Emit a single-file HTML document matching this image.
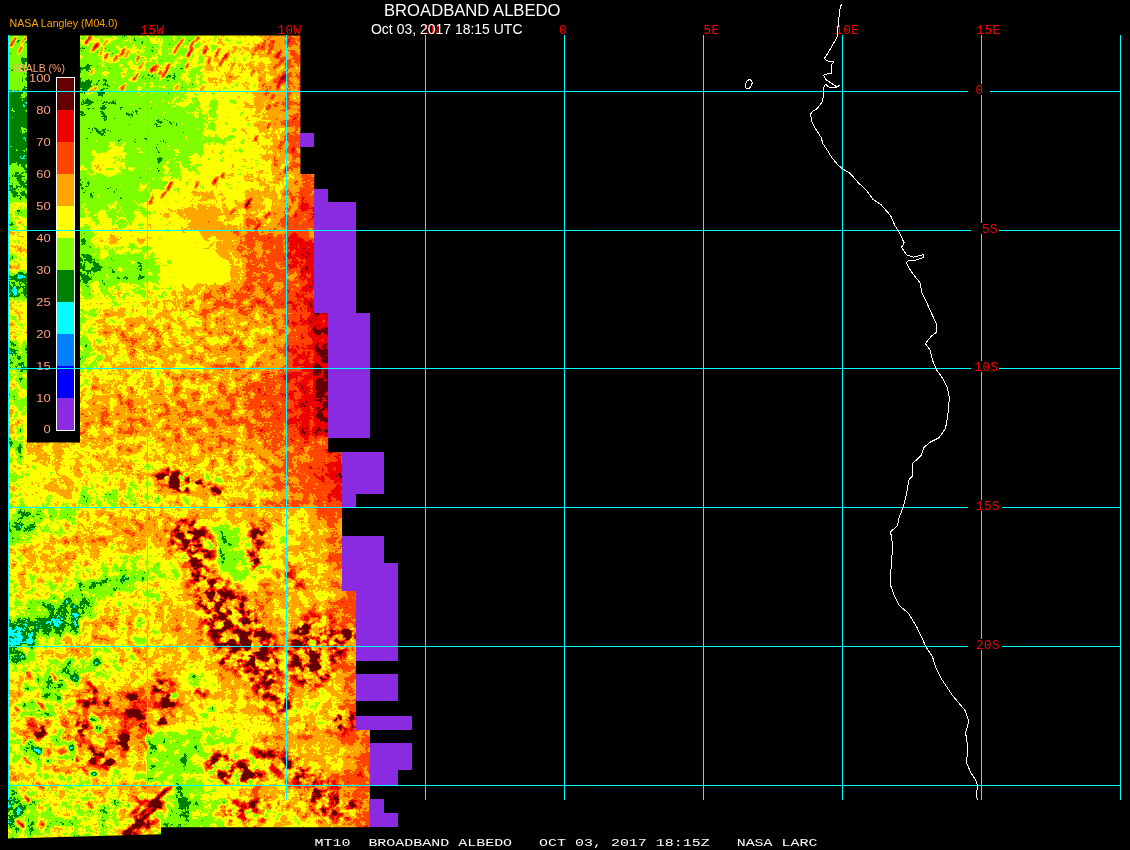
<!DOCTYPE html>
<html><head><meta charset="utf-8"><title>BROADBAND ALBEDO</title>
<style>
html,body{margin:0;padding:0;background:#000;}
body{width:1130px;height:850px;overflow:hidden;position:relative;font-family:"Liberation Sans",sans-serif;}
svg{position:absolute;left:0;top:0;display:block}
.t{position:absolute;white-space:pre;color:#fff;line-height:1;}
</style></head><body>
<svg width="1130" height="850" viewBox="0 0 1130 850">
<defs>
<clipPath id="fc"><polygon points="8.0,35.4 300.4,35.4 300.4,174.0 314.3,174.0 314.3,313.0 328.2,313.0 328.2,452.2 342.1,452.2 342.1,591.0 356.0,591.0 356.0,729.8 369.9,729.8 369.9,827.3 161.0,827.3 161.0,834.3 8.0,838.6"/></clipPath>
<filter id="cb" x="-50" y="-20" width="520" height="900" filterUnits="userSpaceOnUse" color-interpolation-filters="sRGB"><feGaussianBlur stdDeviation="1.6 3.2"/></filter>
<filter id="vb" x="-50" y="-20" width="520" height="900" filterUnits="userSpaceOnUse" color-interpolation-filters="sRGB"><feGaussianBlur stdDeviation="6"/></filter>
<filter id="fb2" x="-50" y="-20" width="520" height="900" filterUnits="userSpaceOnUse" color-interpolation-filters="sRGB"><feGaussianBlur stdDeviation="2.2"/></filter>
<filter id="fb" x="-50" y="-20" width="520" height="900" filterUnits="userSpaceOnUse" color-interpolation-filters="sRGB"><feGaussianBlur stdDeviation="0.8"/></filter>
<filter id="post" x="0" y="0" width="440" height="850" filterUnits="userSpaceOnUse" color-interpolation-filters="sRGB">
<feColorMatrix in="SourceGraphic" type="matrix" values="1 0 0 0 0  1 0 0 0 0  1 0 0 0 0  0 0 0 0 1" result="base"/>
<feColorMatrix in="SourceGraphic" type="matrix" values="0 1 0 0 0  0 1 0 0 0  0 1 0 0 0  0 0 0 0 1" result="amp"/>
<feColorMatrix in="SourceGraphic" type="matrix" values="0 0 1 0 0  0 0 1 0 0  0 0 1 0 0  0 0 0 0 1" result="vm"/>
<feTurbulence type="fractalNoise" baseFrequency="0.5" numOctaves="2" seed="7" result="n"/>
<feColorMatrix in="n" type="matrix" values="1 0 0 0 0  1 0 0 0 0  1 0 0 0 0  0 0 0 0 1" result="ng"/>
<feTurbulence type="fractalNoise" baseFrequency="0.11" numOctaves="2" seed="23" result="m"/>
<feColorMatrix in="m" type="matrix" values="1 0 0 0 0  1 0 0 0 0  1 0 0 0 0  0 0 0 0 1" result="mg"/>
<feComposite in="ng" in2="mg" operator="arithmetic" k1="0" k2="0.35" k3="0.65" k4="0" result="nz"/>
<feTurbulence type="fractalNoise" baseFrequency="0.1" numOctaves="3" seed="11" result="tv"/>
<feColorMatrix in="tv" type="matrix" values="3.6 0 0 0 -1.5  3.6 0 0 0 -1.5  3.6 0 0 0 -1.5  0 0 0 0 1" result="vn"/>
<feComposite in="base" in2="amp" operator="arithmetic" k1="0" k2="1" k3="-0.215" k4="0" result="t1"/>
<feComposite in="amp" in2="nz" operator="arithmetic" k1="0.43" k2="0" k3="0" k4="0" result="t2"/>
<feComposite in="t1" in2="t2" operator="arithmetic" k1="0" k2="1" k3="1" k4="0" result="s1"/>
<feComposite in="vm" in2="vn" operator="arithmetic" k1="0.5" k2="0" k3="0" k4="0" result="t3"/>
<feComposite in="s1" in2="t3" operator="arithmetic" k1="0" k2="1" k3="1" k4="0" result="s"/>
<feComponentTransfer in="s" result="sr">
<feFuncR type="linear" slope="1.6666666666666667" intercept="-0.25"/>
<feFuncG type="linear" slope="1.6666666666666667" intercept="-0.25"/>
<feFuncB type="linear" slope="1.6666666666666667" intercept="-0.25"/>
</feComponentTransfer>
<feComponentTransfer in="sr">
<feFuncR type="discrete" tableValues="0.5412 0.0000 0.0000 0.0000 0.0000 0.4980 1.0000 1.0000 1.0000 0.9333 0.3922"/>
<feFuncG type="discrete" tableValues="0.1686 0.0000 0.5020 1.0000 0.5020 1.0000 1.0000 0.6471 0.2706 0.0000 0.0000"/>
<feFuncB type="discrete" tableValues="0.8863 1.0000 1.0000 1.0000 0.0000 0.0000 0.0000 0.0000 0.0000 0.0000 0.0000"/>
<feFuncA type="discrete" tableValues="1 1"/>
</feComponentTransfer>
</filter>
</defs>
<g clip-path="url(#fc)"><g filter="url(#post)">
<rect x="-60" y="-30" width="560" height="920" fill="#998000"/>
<g filter="url(#cb)" shape-rendering="crispEdges">
<rect x="8.2" y="35.7" width="14.5" height="14.5" fill="#704600"/><rect x="8.2" y="49.6" width="14.5" height="14.5" fill="#704600"/><rect x="8.2" y="63.4" width="14.5" height="14.5" fill="#704600"/><rect x="8.2" y="77.3" width="14.5" height="14.5" fill="#704600"/><rect x="8.2" y="91.2" width="14.5" height="14.5" fill="#664600"/><rect x="8.2" y="105.1" width="14.5" height="14.5" fill="#664600"/><rect x="8.2" y="119.0" width="14.5" height="14.5" fill="#664600"/><rect x="8.2" y="132.8" width="14.5" height="14.5" fill="#664600"/><rect x="8.2" y="146.7" width="14.5" height="14.5" fill="#664600"/><rect x="8.2" y="160.6" width="14.5" height="14.5" fill="#6c4600"/><rect x="8.2" y="174.5" width="14.5" height="14.5" fill="#6c4600"/><rect x="8.2" y="188.4" width="14.5" height="14.5" fill="#6d4600"/><rect x="8.2" y="202.2" width="14.5" height="14.5" fill="#7ad900"/><rect x="8.2" y="216.1" width="14.5" height="14.5" fill="#7bd900"/><rect x="8.2" y="230.0" width="14.5" height="14.5" fill="#85d900"/><rect x="8.2" y="243.9" width="14.5" height="14.5" fill="#85d900"/><rect x="8.2" y="257.8" width="14.5" height="14.5" fill="#83d900"/><rect x="8.2" y="271.6" width="14.5" height="14.5" fill="#68d900"/><rect x="8.2" y="285.5" width="14.5" height="14.5" fill="#65d900"/><rect x="8.2" y="299.4" width="14.5" height="14.5" fill="#81d900"/><rect x="8.2" y="313.3" width="14.5" height="14.5" fill="#83d900"/><rect x="8.2" y="327.2" width="14.5" height="14.5" fill="#83d900"/><rect x="8.2" y="341.0" width="14.5" height="14.5" fill="#70d900"/><rect x="8.2" y="354.9" width="14.5" height="14.5" fill="#70d900"/><rect x="8.2" y="368.8" width="14.5" height="14.5" fill="#77d900"/><rect x="8.2" y="382.7" width="14.5" height="14.5" fill="#77d900"/><rect x="8.2" y="396.6" width="14.5" height="14.5" fill="#77d900"/><rect x="8.2" y="410.4" width="14.5" height="14.5" fill="#83d900"/><rect x="8.2" y="424.3" width="14.5" height="14.5" fill="#83d900"/><rect x="77.7" y="35.7" width="14.5" height="14.5" fill="#798c00"/><rect x="91.6" y="35.7" width="14.5" height="14.5" fill="#758c00"/><rect x="105.5" y="35.7" width="14.5" height="14.5" fill="#768c00"/><rect x="119.4" y="35.7" width="14.5" height="14.5" fill="#768c00"/><rect x="133.3" y="35.7" width="14.5" height="14.5" fill="#788c00"/><rect x="147.2" y="35.7" width="14.5" height="14.5" fill="#788c00"/><rect x="161.1" y="35.7" width="14.5" height="14.5" fill="#768c00"/><rect x="175.0" y="35.7" width="14.5" height="14.5" fill="#768c00"/><rect x="188.9" y="35.7" width="14.5" height="14.5" fill="#788c00"/><rect x="202.8" y="35.7" width="14.5" height="14.5" fill="#818c00"/><rect x="216.7" y="35.7" width="14.5" height="14.5" fill="#828c00"/><rect x="230.6" y="35.7" width="14.5" height="14.5" fill="#838c00"/><rect x="244.5" y="35.7" width="14.5" height="14.5" fill="#868c00"/><rect x="258.4" y="35.7" width="14.5" height="14.5" fill="#8c8c00"/><rect x="272.3" y="35.7" width="14.5" height="14.5" fill="#8f8c00"/><rect x="286.2" y="35.7" width="14.5" height="14.5" fill="#968c00"/><rect x="77.7" y="49.6" width="14.5" height="14.5" fill="#738c00"/><rect x="91.6" y="49.6" width="14.5" height="14.5" fill="#758c00"/><rect x="105.5" y="49.6" width="14.5" height="14.5" fill="#788c00"/><rect x="119.4" y="49.6" width="14.5" height="14.5" fill="#788c00"/><rect x="133.3" y="49.6" width="14.5" height="14.5" fill="#788c00"/><rect x="147.2" y="49.6" width="14.5" height="14.5" fill="#758c00"/><rect x="161.1" y="49.6" width="14.5" height="14.5" fill="#768c00"/><rect x="175.0" y="49.6" width="14.5" height="14.5" fill="#768c00"/><rect x="188.9" y="49.6" width="14.5" height="14.5" fill="#788c00"/><rect x="202.8" y="49.6" width="14.5" height="14.5" fill="#828c00"/><rect x="216.7" y="49.6" width="14.5" height="14.5" fill="#858c00"/><rect x="230.6" y="49.6" width="14.5" height="14.5" fill="#838c00"/><rect x="244.5" y="49.6" width="14.5" height="14.5" fill="#868c00"/><rect x="258.4" y="49.6" width="14.5" height="14.5" fill="#8c8c00"/><rect x="272.3" y="49.6" width="14.5" height="14.5" fill="#8f8c00"/><rect x="286.2" y="49.6" width="14.5" height="14.5" fill="#968c00"/><rect x="77.7" y="63.4" width="14.5" height="14.5" fill="#718c00"/><rect x="91.6" y="63.4" width="14.5" height="14.5" fill="#758c00"/><rect x="105.5" y="63.4" width="14.5" height="14.5" fill="#788c00"/><rect x="119.4" y="63.4" width="14.5" height="14.5" fill="#798c00"/><rect x="133.3" y="63.4" width="14.5" height="14.5" fill="#788c00"/><rect x="147.2" y="63.4" width="14.5" height="14.5" fill="#758c00"/><rect x="161.1" y="63.4" width="14.5" height="14.5" fill="#758c00"/><rect x="175.0" y="63.4" width="14.5" height="14.5" fill="#758c00"/><rect x="188.9" y="63.4" width="14.5" height="14.5" fill="#798c00"/><rect x="202.8" y="63.4" width="14.5" height="14.5" fill="#868c00"/><rect x="216.7" y="63.4" width="14.5" height="14.5" fill="#868c00"/><rect x="230.6" y="63.4" width="14.5" height="14.5" fill="#828c00"/><rect x="244.5" y="63.4" width="14.5" height="14.5" fill="#858c00"/><rect x="258.4" y="63.4" width="14.5" height="14.5" fill="#8a8c00"/><rect x="272.3" y="63.4" width="14.5" height="14.5" fill="#8f8c00"/><rect x="286.2" y="63.4" width="14.5" height="14.5" fill="#968c00"/><rect x="77.7" y="77.3" width="14.5" height="14.5" fill="#6a8c00"/><rect x="91.6" y="77.3" width="14.5" height="14.5" fill="#6b8c00"/><rect x="105.5" y="77.3" width="14.5" height="14.5" fill="#718c00"/><rect x="119.4" y="77.3" width="14.5" height="14.5" fill="#758c00"/><rect x="133.3" y="77.3" width="14.5" height="14.5" fill="#768c00"/><rect x="147.2" y="77.3" width="14.5" height="14.5" fill="#768c00"/><rect x="161.1" y="77.3" width="14.5" height="14.5" fill="#738c00"/><rect x="175.0" y="77.3" width="14.5" height="14.5" fill="#768c00"/><rect x="188.9" y="77.3" width="14.5" height="14.5" fill="#7a8c00"/><rect x="202.8" y="77.3" width="14.5" height="14.5" fill="#888c00"/><rect x="216.7" y="77.3" width="14.5" height="14.5" fill="#858c00"/><rect x="230.6" y="77.3" width="14.5" height="14.5" fill="#818c00"/><rect x="244.5" y="77.3" width="14.5" height="14.5" fill="#838c00"/><rect x="258.4" y="77.3" width="14.5" height="14.5" fill="#918c00"/><rect x="272.3" y="77.3" width="14.5" height="14.5" fill="#8f8c00"/><rect x="286.2" y="77.3" width="14.5" height="14.5" fill="#978c00"/><rect x="77.7" y="91.2" width="14.5" height="14.5" fill="#6e6000"/><rect x="91.6" y="91.2" width="14.5" height="14.5" fill="#6f6000"/><rect x="105.5" y="91.2" width="14.5" height="14.5" fill="#726000"/><rect x="119.4" y="91.2" width="14.5" height="14.5" fill="#736000"/><rect x="133.3" y="91.2" width="14.5" height="14.5" fill="#756000"/><rect x="147.2" y="91.2" width="14.5" height="14.5" fill="#766000"/><rect x="161.1" y="91.2" width="14.5" height="14.5" fill="#786000"/><rect x="175.0" y="91.2" width="14.5" height="14.5" fill="#796000"/><rect x="188.9" y="91.2" width="14.5" height="14.5" fill="#7e6000"/><rect x="202.8" y="91.2" width="14.5" height="14.5" fill="#7f6000"/><rect x="216.7" y="91.2" width="14.5" height="14.5" fill="#816000"/><rect x="230.6" y="91.2" width="14.5" height="14.5" fill="#816000"/><rect x="244.5" y="91.2" width="14.5" height="14.5" fill="#888000"/><rect x="258.4" y="91.2" width="14.5" height="14.5" fill="#8d8000"/><rect x="272.3" y="91.2" width="14.5" height="14.5" fill="#908000"/><rect x="286.2" y="91.2" width="14.5" height="14.5" fill="#948000"/><rect x="77.7" y="105.1" width="14.5" height="14.5" fill="#6e6000"/><rect x="91.6" y="105.1" width="14.5" height="14.5" fill="#6f6000"/><rect x="105.5" y="105.1" width="14.5" height="14.5" fill="#716000"/><rect x="119.4" y="105.1" width="14.5" height="14.5" fill="#716000"/><rect x="133.3" y="105.1" width="14.5" height="14.5" fill="#726000"/><rect x="147.2" y="105.1" width="14.5" height="14.5" fill="#736000"/><rect x="161.1" y="105.1" width="14.5" height="14.5" fill="#756000"/><rect x="175.0" y="105.1" width="14.5" height="14.5" fill="#756000"/><rect x="188.9" y="105.1" width="14.5" height="14.5" fill="#796000"/><rect x="202.8" y="105.1" width="14.5" height="14.5" fill="#7b6000"/><rect x="216.7" y="105.1" width="14.5" height="14.5" fill="#816000"/><rect x="230.6" y="105.1" width="14.5" height="14.5" fill="#816000"/><rect x="244.5" y="105.1" width="14.5" height="14.5" fill="#888000"/><rect x="258.4" y="105.1" width="14.5" height="14.5" fill="#8c8000"/><rect x="272.3" y="105.1" width="14.5" height="14.5" fill="#918000"/><rect x="286.2" y="105.1" width="14.5" height="14.5" fill="#968000"/><rect x="77.7" y="119.0" width="14.5" height="14.5" fill="#6f6000"/><rect x="91.6" y="119.0" width="14.5" height="14.5" fill="#716000"/><rect x="105.5" y="119.0" width="14.5" height="14.5" fill="#726000"/><rect x="119.4" y="119.0" width="14.5" height="14.5" fill="#726000"/><rect x="133.3" y="119.0" width="14.5" height="14.5" fill="#726000"/><rect x="147.2" y="119.0" width="14.5" height="14.5" fill="#726000"/><rect x="161.1" y="119.0" width="14.5" height="14.5" fill="#726000"/><rect x="175.0" y="119.0" width="14.5" height="14.5" fill="#736000"/><rect x="188.9" y="119.0" width="14.5" height="14.5" fill="#736000"/><rect x="202.8" y="119.0" width="14.5" height="14.5" fill="#7a6000"/><rect x="216.7" y="119.0" width="14.5" height="14.5" fill="#7f6000"/><rect x="230.6" y="119.0" width="14.5" height="14.5" fill="#816000"/><rect x="244.5" y="119.0" width="14.5" height="14.5" fill="#858000"/><rect x="258.4" y="119.0" width="14.5" height="14.5" fill="#8c8000"/><rect x="272.3" y="119.0" width="14.5" height="14.5" fill="#8f8000"/><rect x="286.2" y="119.0" width="14.5" height="14.5" fill="#968000"/><rect x="77.7" y="132.8" width="14.5" height="14.5" fill="#716000"/><rect x="91.6" y="132.8" width="14.5" height="14.5" fill="#716000"/><rect x="105.5" y="132.8" width="14.5" height="14.5" fill="#766000"/><rect x="119.4" y="132.8" width="14.5" height="14.5" fill="#766000"/><rect x="133.3" y="132.8" width="14.5" height="14.5" fill="#726000"/><rect x="147.2" y="132.8" width="14.5" height="14.5" fill="#736000"/><rect x="161.1" y="132.8" width="14.5" height="14.5" fill="#736000"/><rect x="175.0" y="132.8" width="14.5" height="14.5" fill="#766000"/><rect x="188.9" y="132.8" width="14.5" height="14.5" fill="#756000"/><rect x="202.8" y="132.8" width="14.5" height="14.5" fill="#7b6000"/><rect x="216.7" y="132.8" width="14.5" height="14.5" fill="#7e6000"/><rect x="230.6" y="132.8" width="14.5" height="14.5" fill="#7f6000"/><rect x="244.5" y="132.8" width="14.5" height="14.5" fill="#828000"/><rect x="258.4" y="132.8" width="14.5" height="14.5" fill="#858000"/><rect x="272.3" y="132.8" width="14.5" height="14.5" fill="#8f8000"/><rect x="286.2" y="132.8" width="14.5" height="14.5" fill="#9c8000"/><rect x="77.7" y="146.7" width="14.5" height="14.5" fill="#756000"/><rect x="91.6" y="146.7" width="14.5" height="14.5" fill="#7e6000"/><rect x="105.5" y="146.7" width="14.5" height="14.5" fill="#7f6000"/><rect x="119.4" y="146.7" width="14.5" height="14.5" fill="#796000"/><rect x="133.3" y="146.7" width="14.5" height="14.5" fill="#736000"/><rect x="147.2" y="146.7" width="14.5" height="14.5" fill="#736000"/><rect x="161.1" y="146.7" width="14.5" height="14.5" fill="#736000"/><rect x="175.0" y="146.7" width="14.5" height="14.5" fill="#786000"/><rect x="188.9" y="146.7" width="14.5" height="14.5" fill="#786000"/><rect x="202.8" y="146.7" width="14.5" height="14.5" fill="#816000"/><rect x="216.7" y="146.7" width="14.5" height="14.5" fill="#816000"/><rect x="230.6" y="146.7" width="14.5" height="14.5" fill="#816000"/><rect x="244.5" y="146.7" width="14.5" height="14.5" fill="#818000"/><rect x="258.4" y="146.7" width="14.5" height="14.5" fill="#858000"/><rect x="272.3" y="146.7" width="14.5" height="14.5" fill="#8f8000"/><rect x="286.2" y="146.7" width="14.5" height="14.5" fill="#978000"/><rect x="77.7" y="160.6" width="14.5" height="14.5" fill="#786000"/><rect x="91.6" y="160.6" width="14.5" height="14.5" fill="#836000"/><rect x="105.5" y="160.6" width="14.5" height="14.5" fill="#816000"/><rect x="119.4" y="160.6" width="14.5" height="14.5" fill="#796000"/><rect x="133.3" y="160.6" width="14.5" height="14.5" fill="#756000"/><rect x="147.2" y="160.6" width="14.5" height="14.5" fill="#726000"/><rect x="161.1" y="160.6" width="14.5" height="14.5" fill="#786000"/><rect x="175.0" y="160.6" width="14.5" height="14.5" fill="#7a6000"/><rect x="188.9" y="160.6" width="14.5" height="14.5" fill="#7e6000"/><rect x="202.8" y="160.6" width="14.5" height="14.5" fill="#816000"/><rect x="216.7" y="160.6" width="14.5" height="14.5" fill="#816000"/><rect x="230.6" y="160.6" width="14.5" height="14.5" fill="#826000"/><rect x="244.5" y="160.6" width="14.5" height="14.5" fill="#828000"/><rect x="258.4" y="160.6" width="14.5" height="14.5" fill="#868000"/><rect x="272.3" y="160.6" width="14.5" height="14.5" fill="#8f8000"/><rect x="286.2" y="160.6" width="14.5" height="14.5" fill="#908000"/><rect x="77.7" y="174.5" width="14.5" height="14.5" fill="#6e6000"/><rect x="91.6" y="174.5" width="14.5" height="14.5" fill="#736000"/><rect x="105.5" y="174.5" width="14.5" height="14.5" fill="#726000"/><rect x="119.4" y="174.5" width="14.5" height="14.5" fill="#756000"/><rect x="133.3" y="174.5" width="14.5" height="14.5" fill="#756000"/><rect x="147.2" y="174.5" width="14.5" height="14.5" fill="#786000"/><rect x="161.1" y="174.5" width="14.5" height="14.5" fill="#7a6000"/><rect x="175.0" y="174.5" width="14.5" height="14.5" fill="#7e6000"/><rect x="188.9" y="174.5" width="14.5" height="14.5" fill="#816000"/><rect x="202.8" y="174.5" width="14.5" height="14.5" fill="#826000"/><rect x="216.7" y="174.5" width="14.5" height="14.5" fill="#826000"/><rect x="230.6" y="174.5" width="14.5" height="14.5" fill="#826000"/><rect x="244.5" y="174.5" width="14.5" height="14.5" fill="#898000"/><rect x="258.4" y="174.5" width="14.5" height="14.5" fill="#898000"/><rect x="272.3" y="174.5" width="14.5" height="14.5" fill="#8a8000"/><rect x="286.2" y="174.5" width="14.5" height="14.5" fill="#8f8000"/><rect x="300.1" y="174.5" width="14.5" height="14.5" fill="#9a8000"/><rect x="77.7" y="188.4" width="14.5" height="14.5" fill="#716000"/><rect x="91.6" y="188.4" width="14.5" height="14.5" fill="#726000"/><rect x="105.5" y="188.4" width="14.5" height="14.5" fill="#726000"/><rect x="119.4" y="188.4" width="14.5" height="14.5" fill="#736000"/><rect x="133.3" y="188.4" width="14.5" height="14.5" fill="#766000"/><rect x="147.2" y="188.4" width="14.5" height="14.5" fill="#7e6000"/><rect x="161.1" y="188.4" width="14.5" height="14.5" fill="#7f6000"/><rect x="175.0" y="188.4" width="14.5" height="14.5" fill="#816000"/><rect x="188.9" y="188.4" width="14.5" height="14.5" fill="#866000"/><rect x="202.8" y="188.4" width="14.5" height="14.5" fill="#896000"/><rect x="216.7" y="188.4" width="14.5" height="14.5" fill="#836000"/><rect x="230.6" y="188.4" width="14.5" height="14.5" fill="#836000"/><rect x="244.5" y="188.4" width="14.5" height="14.5" fill="#8c8000"/><rect x="258.4" y="188.4" width="14.5" height="14.5" fill="#898000"/><rect x="272.3" y="188.4" width="14.5" height="14.5" fill="#8c8000"/><rect x="286.2" y="188.4" width="14.5" height="14.5" fill="#938000"/><rect x="300.1" y="188.4" width="14.5" height="14.5" fill="#9c8000"/><rect x="77.7" y="202.2" width="14.5" height="14.5" fill="#766000"/><rect x="91.6" y="202.2" width="14.5" height="14.5" fill="#7a6000"/><rect x="105.5" y="202.2" width="14.5" height="14.5" fill="#796000"/><rect x="119.4" y="202.2" width="14.5" height="14.5" fill="#756000"/><rect x="133.3" y="202.2" width="14.5" height="14.5" fill="#796000"/><rect x="147.2" y="202.2" width="14.5" height="14.5" fill="#816000"/><rect x="161.1" y="202.2" width="14.5" height="14.5" fill="#856000"/><rect x="175.0" y="202.2" width="14.5" height="14.5" fill="#886000"/><rect x="188.9" y="202.2" width="14.5" height="14.5" fill="#8f6000"/><rect x="202.8" y="202.2" width="14.5" height="14.5" fill="#8d6000"/><rect x="216.7" y="202.2" width="14.5" height="14.5" fill="#896000"/><rect x="230.6" y="202.2" width="14.5" height="14.5" fill="#886000"/><rect x="244.5" y="202.2" width="14.5" height="14.5" fill="#8f8000"/><rect x="258.4" y="202.2" width="14.5" height="14.5" fill="#8c8000"/><rect x="272.3" y="202.2" width="14.5" height="14.5" fill="#8f8000"/><rect x="286.2" y="202.2" width="14.5" height="14.5" fill="#968000"/><rect x="300.1" y="202.2" width="14.5" height="14.5" fill="#a58000"/><rect x="77.7" y="216.1" width="14.5" height="14.5" fill="#7e6000"/><rect x="91.6" y="216.1" width="14.5" height="14.5" fill="#7f6000"/><rect x="105.5" y="216.1" width="14.5" height="14.5" fill="#7e6000"/><rect x="119.4" y="216.1" width="14.5" height="14.5" fill="#796000"/><rect x="133.3" y="216.1" width="14.5" height="14.5" fill="#7f6000"/><rect x="147.2" y="216.1" width="14.5" height="14.5" fill="#826000"/><rect x="161.1" y="216.1" width="14.5" height="14.5" fill="#836000"/><rect x="175.0" y="216.1" width="14.5" height="14.5" fill="#896000"/><rect x="188.9" y="216.1" width="14.5" height="14.5" fill="#8f6000"/><rect x="202.8" y="216.1" width="14.5" height="14.5" fill="#8f6000"/><rect x="216.7" y="216.1" width="14.5" height="14.5" fill="#8c6000"/><rect x="230.6" y="216.1" width="14.5" height="14.5" fill="#8a6000"/><rect x="244.5" y="216.1" width="14.5" height="14.5" fill="#918000"/><rect x="258.4" y="216.1" width="14.5" height="14.5" fill="#8c8000"/><rect x="272.3" y="216.1" width="14.5" height="14.5" fill="#948000"/><rect x="286.2" y="216.1" width="14.5" height="14.5" fill="#9a8000"/><rect x="300.1" y="216.1" width="14.5" height="14.5" fill="#9c8000"/><rect x="77.7" y="230.0" width="14.5" height="14.5" fill="#718000"/><rect x="91.6" y="230.0" width="14.5" height="14.5" fill="#818000"/><rect x="105.5" y="230.0" width="14.5" height="14.5" fill="#858000"/><rect x="119.4" y="230.0" width="14.5" height="14.5" fill="#858000"/><rect x="133.3" y="230.0" width="14.5" height="14.5" fill="#838000"/><rect x="147.2" y="230.0" width="14.5" height="14.5" fill="#854000"/><rect x="161.1" y="230.0" width="14.5" height="14.5" fill="#834000"/><rect x="175.0" y="230.0" width="14.5" height="14.5" fill="#814000"/><rect x="188.9" y="230.0" width="14.5" height="14.5" fill="#854000"/><rect x="202.8" y="230.0" width="14.5" height="14.5" fill="#8c4000"/><rect x="216.7" y="230.0" width="14.5" height="14.5" fill="#8f4000"/><rect x="230.6" y="230.0" width="14.5" height="14.5" fill="#938000"/><rect x="244.5" y="230.0" width="14.5" height="14.5" fill="#9a8000"/><rect x="258.4" y="230.0" width="14.5" height="14.5" fill="#9a8000"/><rect x="272.3" y="230.0" width="14.5" height="14.5" fill="#9a8000"/><rect x="286.2" y="230.0" width="14.5" height="14.5" fill="#a58000"/><rect x="300.1" y="230.0" width="14.5" height="14.5" fill="#9a8000"/><rect x="77.7" y="243.9" width="14.5" height="14.5" fill="#708000"/><rect x="91.6" y="243.9" width="14.5" height="14.5" fill="#7b8000"/><rect x="105.5" y="243.9" width="14.5" height="14.5" fill="#7e8000"/><rect x="119.4" y="243.9" width="14.5" height="14.5" fill="#7a8000"/><rect x="133.3" y="243.9" width="14.5" height="14.5" fill="#7a8000"/><rect x="147.2" y="243.9" width="14.5" height="14.5" fill="#7c4000"/><rect x="161.1" y="243.9" width="14.5" height="14.5" fill="#814000"/><rect x="175.0" y="243.9" width="14.5" height="14.5" fill="#814000"/><rect x="188.9" y="243.9" width="14.5" height="14.5" fill="#814000"/><rect x="202.8" y="243.9" width="14.5" height="14.5" fill="#834000"/><rect x="216.7" y="243.9" width="14.5" height="14.5" fill="#8c4000"/><rect x="230.6" y="243.9" width="14.5" height="14.5" fill="#8f8000"/><rect x="244.5" y="243.9" width="14.5" height="14.5" fill="#988000"/><rect x="258.4" y="243.9" width="14.5" height="14.5" fill="#988000"/><rect x="272.3" y="243.9" width="14.5" height="14.5" fill="#9b8000"/><rect x="286.2" y="243.9" width="14.5" height="14.5" fill="#a88000"/><rect x="300.1" y="243.9" width="14.5" height="14.5" fill="#b18000"/><rect x="77.7" y="257.8" width="14.5" height="14.5" fill="#6c8000"/><rect x="91.6" y="257.8" width="14.5" height="14.5" fill="#6f8000"/><rect x="105.5" y="257.8" width="14.5" height="14.5" fill="#738000"/><rect x="119.4" y="257.8" width="14.5" height="14.5" fill="#738000"/><rect x="133.3" y="257.8" width="14.5" height="14.5" fill="#738000"/><rect x="147.2" y="257.8" width="14.5" height="14.5" fill="#774000"/><rect x="161.1" y="257.8" width="14.5" height="14.5" fill="#7f4000"/><rect x="175.0" y="257.8" width="14.5" height="14.5" fill="#814000"/><rect x="188.9" y="257.8" width="14.5" height="14.5" fill="#814000"/><rect x="202.8" y="257.8" width="14.5" height="14.5" fill="#814000"/><rect x="216.7" y="257.8" width="14.5" height="14.5" fill="#834000"/><rect x="230.6" y="257.8" width="14.5" height="14.5" fill="#898000"/><rect x="244.5" y="257.8" width="14.5" height="14.5" fill="#988000"/><rect x="258.4" y="257.8" width="14.5" height="14.5" fill="#988000"/><rect x="272.3" y="257.8" width="14.5" height="14.5" fill="#9b8000"/><rect x="286.2" y="257.8" width="14.5" height="14.5" fill="#a18000"/><rect x="300.1" y="257.8" width="14.5" height="14.5" fill="#aa8000"/><rect x="77.7" y="271.6" width="14.5" height="14.5" fill="#6d8000"/><rect x="91.6" y="271.6" width="14.5" height="14.5" fill="#738000"/><rect x="105.5" y="271.6" width="14.5" height="14.5" fill="#748000"/><rect x="119.4" y="271.6" width="14.5" height="14.5" fill="#748000"/><rect x="133.3" y="271.6" width="14.5" height="14.5" fill="#738000"/><rect x="147.2" y="271.6" width="14.5" height="14.5" fill="#784000"/><rect x="161.1" y="271.6" width="14.5" height="14.5" fill="#7f4000"/><rect x="175.0" y="271.6" width="14.5" height="14.5" fill="#814000"/><rect x="188.9" y="271.6" width="14.5" height="14.5" fill="#814000"/><rect x="202.8" y="271.6" width="14.5" height="14.5" fill="#814000"/><rect x="216.7" y="271.6" width="14.5" height="14.5" fill="#834000"/><rect x="230.6" y="271.6" width="14.5" height="14.5" fill="#8f8000"/><rect x="244.5" y="271.6" width="14.5" height="14.5" fill="#988000"/><rect x="258.4" y="271.6" width="14.5" height="14.5" fill="#988000"/><rect x="272.3" y="271.6" width="14.5" height="14.5" fill="#988000"/><rect x="286.2" y="271.6" width="14.5" height="14.5" fill="#978000"/><rect x="300.1" y="271.6" width="14.5" height="14.5" fill="#a68000"/><rect x="77.7" y="285.5" width="14.5" height="14.5" fill="#7aac00"/><rect x="91.6" y="285.5" width="14.5" height="14.5" fill="#7eac00"/><rect x="105.5" y="285.5" width="14.5" height="14.5" fill="#7eac00"/><rect x="119.4" y="285.5" width="14.5" height="14.5" fill="#7eac00"/><rect x="133.3" y="285.5" width="14.5" height="14.5" fill="#7bac00"/><rect x="147.2" y="285.5" width="14.5" height="14.5" fill="#7fac00"/><rect x="161.1" y="285.5" width="14.5" height="14.5" fill="#83ac00"/><rect x="175.0" y="285.5" width="14.5" height="14.5" fill="#88ac00"/><rect x="188.9" y="285.5" width="14.5" height="14.5" fill="#8cac00"/><rect x="202.8" y="285.5" width="14.5" height="14.5" fill="#93ac00"/><rect x="216.7" y="285.5" width="14.5" height="14.5" fill="#96ac00"/><rect x="230.6" y="285.5" width="14.5" height="14.5" fill="#97ac00"/><rect x="244.5" y="285.5" width="14.5" height="14.5" fill="#98ac00"/><rect x="258.4" y="285.5" width="14.5" height="14.5" fill="#98ac00"/><rect x="272.3" y="285.5" width="14.5" height="14.5" fill="#988000"/><rect x="286.2" y="285.5" width="14.5" height="14.5" fill="#9f8000"/><rect x="300.1" y="285.5" width="14.5" height="14.5" fill="#a88000"/><rect x="77.7" y="299.4" width="14.5" height="14.5" fill="#7eac00"/><rect x="91.6" y="299.4" width="14.5" height="14.5" fill="#83ac00"/><rect x="105.5" y="299.4" width="14.5" height="14.5" fill="#85ac00"/><rect x="119.4" y="299.4" width="14.5" height="14.5" fill="#83ac00"/><rect x="133.3" y="299.4" width="14.5" height="14.5" fill="#83ac00"/><rect x="147.2" y="299.4" width="14.5" height="14.5" fill="#85ac00"/><rect x="161.1" y="299.4" width="14.5" height="14.5" fill="#88ac00"/><rect x="175.0" y="299.4" width="14.5" height="14.5" fill="#89ac00"/><rect x="188.9" y="299.4" width="14.5" height="14.5" fill="#8cac00"/><rect x="202.8" y="299.4" width="14.5" height="14.5" fill="#94ac00"/><rect x="216.7" y="299.4" width="14.5" height="14.5" fill="#96ac00"/><rect x="230.6" y="299.4" width="14.5" height="14.5" fill="#94ac00"/><rect x="244.5" y="299.4" width="14.5" height="14.5" fill="#98ac00"/><rect x="258.4" y="299.4" width="14.5" height="14.5" fill="#98ac00"/><rect x="272.3" y="299.4" width="14.5" height="14.5" fill="#988000"/><rect x="286.2" y="299.4" width="14.5" height="14.5" fill="#9f8000"/><rect x="300.1" y="299.4" width="14.5" height="14.5" fill="#aa8000"/><rect x="77.7" y="313.3" width="14.5" height="14.5" fill="#7aac00"/><rect x="91.6" y="313.3" width="14.5" height="14.5" fill="#85ac00"/><rect x="105.5" y="313.3" width="14.5" height="14.5" fill="#88ac00"/><rect x="119.4" y="313.3" width="14.5" height="14.5" fill="#89ac00"/><rect x="133.3" y="313.3" width="14.5" height="14.5" fill="#89ac00"/><rect x="147.2" y="313.3" width="14.5" height="14.5" fill="#89ac00"/><rect x="161.1" y="313.3" width="14.5" height="14.5" fill="#88ac00"/><rect x="175.0" y="313.3" width="14.5" height="14.5" fill="#88ac00"/><rect x="188.9" y="313.3" width="14.5" height="14.5" fill="#89ac00"/><rect x="202.8" y="313.3" width="14.5" height="14.5" fill="#8fac00"/><rect x="216.7" y="313.3" width="14.5" height="14.5" fill="#8fac00"/><rect x="230.6" y="313.3" width="14.5" height="14.5" fill="#8fac00"/><rect x="244.5" y="313.3" width="14.5" height="14.5" fill="#8cac00"/><rect x="258.4" y="313.3" width="14.5" height="14.5" fill="#90ac00"/><rect x="272.3" y="313.3" width="14.5" height="14.5" fill="#938000"/><rect x="286.2" y="313.3" width="14.5" height="14.5" fill="#9c8000"/><rect x="300.1" y="313.3" width="14.5" height="14.5" fill="#a68000"/><rect x="314.0" y="313.3" width="14.5" height="14.5" fill="#b08000"/><rect x="77.7" y="327.2" width="14.5" height="14.5" fill="#7bac00"/><rect x="91.6" y="327.2" width="14.5" height="14.5" fill="#88ac00"/><rect x="105.5" y="327.2" width="14.5" height="14.5" fill="#8cac00"/><rect x="119.4" y="327.2" width="14.5" height="14.5" fill="#8fac00"/><rect x="133.3" y="327.2" width="14.5" height="14.5" fill="#8fac00"/><rect x="147.2" y="327.2" width="14.5" height="14.5" fill="#8cac00"/><rect x="161.1" y="327.2" width="14.5" height="14.5" fill="#89ac00"/><rect x="175.0" y="327.2" width="14.5" height="14.5" fill="#88ac00"/><rect x="188.9" y="327.2" width="14.5" height="14.5" fill="#89ac00"/><rect x="202.8" y="327.2" width="14.5" height="14.5" fill="#8cac00"/><rect x="216.7" y="327.2" width="14.5" height="14.5" fill="#8cac00"/><rect x="230.6" y="327.2" width="14.5" height="14.5" fill="#8fac00"/><rect x="244.5" y="327.2" width="14.5" height="14.5" fill="#89ac00"/><rect x="258.4" y="327.2" width="14.5" height="14.5" fill="#8cac00"/><rect x="272.3" y="327.2" width="14.5" height="14.5" fill="#948000"/><rect x="286.2" y="327.2" width="14.5" height="14.5" fill="#9c8000"/><rect x="300.1" y="327.2" width="14.5" height="14.5" fill="#a38000"/><rect x="314.0" y="327.2" width="14.5" height="14.5" fill="#b08000"/><rect x="77.7" y="341.0" width="14.5" height="14.5" fill="#76ac00"/><rect x="91.6" y="341.0" width="14.5" height="14.5" fill="#81ac00"/><rect x="105.5" y="341.0" width="14.5" height="14.5" fill="#88ac00"/><rect x="119.4" y="341.0" width="14.5" height="14.5" fill="#8cac00"/><rect x="133.3" y="341.0" width="14.5" height="14.5" fill="#8fac00"/><rect x="147.2" y="341.0" width="14.5" height="14.5" fill="#8dac00"/><rect x="161.1" y="341.0" width="14.5" height="14.5" fill="#8cac00"/><rect x="175.0" y="341.0" width="14.5" height="14.5" fill="#89ac00"/><rect x="188.9" y="341.0" width="14.5" height="14.5" fill="#8cac00"/><rect x="202.8" y="341.0" width="14.5" height="14.5" fill="#8cac00"/><rect x="216.7" y="341.0" width="14.5" height="14.5" fill="#8fac00"/><rect x="230.6" y="341.0" width="14.5" height="14.5" fill="#91ac00"/><rect x="244.5" y="341.0" width="14.5" height="14.5" fill="#89ac00"/><rect x="258.4" y="341.0" width="14.5" height="14.5" fill="#8fac00"/><rect x="272.3" y="341.0" width="14.5" height="14.5" fill="#938000"/><rect x="286.2" y="341.0" width="14.5" height="14.5" fill="#9f8000"/><rect x="300.1" y="341.0" width="14.5" height="14.5" fill="#a58000"/><rect x="314.0" y="341.0" width="14.5" height="14.5" fill="#b48000"/><rect x="77.7" y="354.9" width="14.5" height="14.5" fill="#77ac00"/><rect x="91.6" y="354.9" width="14.5" height="14.5" fill="#7eac00"/><rect x="105.5" y="354.9" width="14.5" height="14.5" fill="#83ac00"/><rect x="119.4" y="354.9" width="14.5" height="14.5" fill="#89ac00"/><rect x="133.3" y="354.9" width="14.5" height="14.5" fill="#8cac00"/><rect x="147.2" y="354.9" width="14.5" height="14.5" fill="#8cac00"/><rect x="161.1" y="354.9" width="14.5" height="14.5" fill="#8cac00"/><rect x="175.0" y="354.9" width="14.5" height="14.5" fill="#89ac00"/><rect x="188.9" y="354.9" width="14.5" height="14.5" fill="#8cac00"/><rect x="202.8" y="354.9" width="14.5" height="14.5" fill="#8fac00"/><rect x="216.7" y="354.9" width="14.5" height="14.5" fill="#91ac00"/><rect x="230.6" y="354.9" width="14.5" height="14.5" fill="#93ac00"/><rect x="244.5" y="354.9" width="14.5" height="14.5" fill="#8cac00"/><rect x="258.4" y="354.9" width="14.5" height="14.5" fill="#90ac00"/><rect x="272.3" y="354.9" width="14.5" height="14.5" fill="#948000"/><rect x="286.2" y="354.9" width="14.5" height="14.5" fill="#a18000"/><rect x="300.1" y="354.9" width="14.5" height="14.5" fill="#a88000"/><rect x="314.0" y="354.9" width="14.5" height="14.5" fill="#b18000"/><rect x="77.7" y="368.8" width="14.5" height="14.5" fill="#7eac00"/><rect x="91.6" y="368.8" width="14.5" height="14.5" fill="#85ac00"/><rect x="105.5" y="368.8" width="14.5" height="14.5" fill="#88ac00"/><rect x="119.4" y="368.8" width="14.5" height="14.5" fill="#88ac00"/><rect x="133.3" y="368.8" width="14.5" height="14.5" fill="#85ac00"/><rect x="147.2" y="368.8" width="14.5" height="14.5" fill="#83ac00"/><rect x="161.1" y="368.8" width="14.5" height="14.5" fill="#89ac00"/><rect x="175.0" y="368.8" width="14.5" height="14.5" fill="#8cac00"/><rect x="188.9" y="368.8" width="14.5" height="14.5" fill="#8cac00"/><rect x="202.8" y="368.8" width="14.5" height="14.5" fill="#8cac00"/><rect x="216.7" y="368.8" width="14.5" height="14.5" fill="#8fac00"/><rect x="230.6" y="368.8" width="14.5" height="14.5" fill="#92ac00"/><rect x="244.5" y="368.8" width="14.5" height="14.5" fill="#8fac00"/><rect x="258.4" y="368.8" width="14.5" height="14.5" fill="#95ac00"/><rect x="272.3" y="368.8" width="14.5" height="14.5" fill="#9a8000"/><rect x="286.2" y="368.8" width="14.5" height="14.5" fill="#a28000"/><rect x="300.1" y="368.8" width="14.5" height="14.5" fill="#a88000"/><rect x="314.0" y="368.8" width="14.5" height="14.5" fill="#b88000"/><rect x="77.7" y="382.7" width="14.5" height="14.5" fill="#85ac00"/><rect x="91.6" y="382.7" width="14.5" height="14.5" fill="#89ac00"/><rect x="105.5" y="382.7" width="14.5" height="14.5" fill="#8cac00"/><rect x="119.4" y="382.7" width="14.5" height="14.5" fill="#8cac00"/><rect x="133.3" y="382.7" width="14.5" height="14.5" fill="#89ac00"/><rect x="147.2" y="382.7" width="14.5" height="14.5" fill="#89ac00"/><rect x="161.1" y="382.7" width="14.5" height="14.5" fill="#8cac00"/><rect x="175.0" y="382.7" width="14.5" height="14.5" fill="#8fac00"/><rect x="188.9" y="382.7" width="14.5" height="14.5" fill="#8cac00"/><rect x="202.8" y="382.7" width="14.5" height="14.5" fill="#8cac00"/><rect x="216.7" y="382.7" width="14.5" height="14.5" fill="#91ac00"/><rect x="230.6" y="382.7" width="14.5" height="14.5" fill="#93ac00"/><rect x="244.5" y="382.7" width="14.5" height="14.5" fill="#98ac00"/><rect x="258.4" y="382.7" width="14.5" height="14.5" fill="#9aac00"/><rect x="272.3" y="382.7" width="14.5" height="14.5" fill="#9d8000"/><rect x="286.2" y="382.7" width="14.5" height="14.5" fill="#a28000"/><rect x="300.1" y="382.7" width="14.5" height="14.5" fill="#aa8000"/><rect x="314.0" y="382.7" width="14.5" height="14.5" fill="#b78000"/><rect x="77.7" y="396.6" width="14.5" height="14.5" fill="#8cac00"/><rect x="91.6" y="396.6" width="14.5" height="14.5" fill="#8fac00"/><rect x="105.5" y="396.6" width="14.5" height="14.5" fill="#8fac00"/><rect x="119.4" y="396.6" width="14.5" height="14.5" fill="#91ac00"/><rect x="133.3" y="396.6" width="14.5" height="14.5" fill="#8fac00"/><rect x="147.2" y="396.6" width="14.5" height="14.5" fill="#8fac00"/><rect x="161.1" y="396.6" width="14.5" height="14.5" fill="#8fac00"/><rect x="175.0" y="396.6" width="14.5" height="14.5" fill="#91ac00"/><rect x="188.9" y="396.6" width="14.5" height="14.5" fill="#8fac00"/><rect x="202.8" y="396.6" width="14.5" height="14.5" fill="#91ac00"/><rect x="216.7" y="396.6" width="14.5" height="14.5" fill="#94ac00"/><rect x="230.6" y="396.6" width="14.5" height="14.5" fill="#93ac00"/><rect x="244.5" y="396.6" width="14.5" height="14.5" fill="#98ac00"/><rect x="258.4" y="396.6" width="14.5" height="14.5" fill="#9aac00"/><rect x="272.3" y="396.6" width="14.5" height="14.5" fill="#9d8000"/><rect x="286.2" y="396.6" width="14.5" height="14.5" fill="#a38000"/><rect x="300.1" y="396.6" width="14.5" height="14.5" fill="#aa8000"/><rect x="314.0" y="396.6" width="14.5" height="14.5" fill="#b38000"/><rect x="77.7" y="410.4" width="14.5" height="14.5" fill="#8fac00"/><rect x="91.6" y="410.4" width="14.5" height="14.5" fill="#8fac00"/><rect x="105.5" y="410.4" width="14.5" height="14.5" fill="#91ac00"/><rect x="119.4" y="410.4" width="14.5" height="14.5" fill="#91ac00"/><rect x="133.3" y="410.4" width="14.5" height="14.5" fill="#91ac00"/><rect x="147.2" y="410.4" width="14.5" height="14.5" fill="#8fac00"/><rect x="161.1" y="410.4" width="14.5" height="14.5" fill="#8fac00"/><rect x="175.0" y="410.4" width="14.5" height="14.5" fill="#94ac00"/><rect x="188.9" y="410.4" width="14.5" height="14.5" fill="#93ac00"/><rect x="202.8" y="410.4" width="14.5" height="14.5" fill="#94ac00"/><rect x="216.7" y="410.4" width="14.5" height="14.5" fill="#94ac00"/><rect x="230.6" y="410.4" width="14.5" height="14.5" fill="#92ac00"/><rect x="244.5" y="410.4" width="14.5" height="14.5" fill="#98ac00"/><rect x="258.4" y="410.4" width="14.5" height="14.5" fill="#9aac00"/><rect x="272.3" y="410.4" width="14.5" height="14.5" fill="#9d8000"/><rect x="286.2" y="410.4" width="14.5" height="14.5" fill="#a38000"/><rect x="300.1" y="410.4" width="14.5" height="14.5" fill="#aa8000"/><rect x="314.0" y="410.4" width="14.5" height="14.5" fill="#b38000"/><rect x="77.7" y="424.3" width="14.5" height="14.5" fill="#8cac00"/><rect x="91.6" y="424.3" width="14.5" height="14.5" fill="#8cac00"/><rect x="105.5" y="424.3" width="14.5" height="14.5" fill="#8cac00"/><rect x="119.4" y="424.3" width="14.5" height="14.5" fill="#8fac00"/><rect x="133.3" y="424.3" width="14.5" height="14.5" fill="#8fac00"/><rect x="147.2" y="424.3" width="14.5" height="14.5" fill="#8cac00"/><rect x="161.1" y="424.3" width="14.5" height="14.5" fill="#8fac00"/><rect x="175.0" y="424.3" width="14.5" height="14.5" fill="#91ac00"/><rect x="188.9" y="424.3" width="14.5" height="14.5" fill="#91ac00"/><rect x="202.8" y="424.3" width="14.5" height="14.5" fill="#93ac00"/><rect x="216.7" y="424.3" width="14.5" height="14.5" fill="#93ac00"/><rect x="230.6" y="424.3" width="14.5" height="14.5" fill="#8fac00"/><rect x="244.5" y="424.3" width="14.5" height="14.5" fill="#95ac00"/><rect x="258.4" y="424.3" width="14.5" height="14.5" fill="#98ac00"/><rect x="272.3" y="424.3" width="14.5" height="14.5" fill="#998000"/><rect x="286.2" y="424.3" width="14.5" height="14.5" fill="#a28000"/><rect x="300.1" y="424.3" width="14.5" height="14.5" fill="#a88000"/><rect x="314.0" y="424.3" width="14.5" height="14.5" fill="#ac8000"/><rect x="8.2" y="438.2" width="14.5" height="14.5" fill="#6dd900"/><rect x="22.1" y="438.2" width="14.5" height="14.5" fill="#8b8000"/><rect x="36.0" y="438.2" width="14.5" height="14.5" fill="#8b8000"/><rect x="49.9" y="438.2" width="14.5" height="14.5" fill="#8b8000"/><rect x="63.8" y="438.2" width="14.5" height="14.5" fill="#8b8000"/><rect x="77.7" y="438.2" width="14.5" height="14.5" fill="#8bac00"/><rect x="91.6" y="438.2" width="14.5" height="14.5" fill="#8cac00"/><rect x="105.5" y="438.2" width="14.5" height="14.5" fill="#8bac00"/><rect x="119.4" y="438.2" width="14.5" height="14.5" fill="#8bac00"/><rect x="133.3" y="438.2" width="14.5" height="14.5" fill="#88ac00"/><rect x="147.2" y="438.2" width="14.5" height="14.5" fill="#88ac00"/><rect x="161.1" y="438.2" width="14.5" height="14.5" fill="#8cac00"/><rect x="175.0" y="438.2" width="14.5" height="14.5" fill="#8fac00"/><rect x="188.9" y="438.2" width="14.5" height="14.5" fill="#8fac00"/><rect x="202.8" y="438.2" width="14.5" height="14.5" fill="#8fac00"/><rect x="216.7" y="438.2" width="14.5" height="14.5" fill="#8fac00"/><rect x="230.6" y="438.2" width="14.5" height="14.5" fill="#8fac00"/><rect x="244.5" y="438.2" width="14.5" height="14.5" fill="#8fac00"/><rect x="258.4" y="438.2" width="14.5" height="14.5" fill="#96ac00"/><rect x="272.3" y="438.2" width="14.5" height="14.5" fill="#978000"/><rect x="286.2" y="438.2" width="14.5" height="14.5" fill="#9a8000"/><rect x="300.1" y="438.2" width="14.5" height="14.5" fill="#9a8000"/><rect x="314.0" y="438.2" width="14.5" height="14.5" fill="#9c8000"/><rect x="8.2" y="452.1" width="14.5" height="14.5" fill="#7ad900"/><rect x="22.1" y="452.1" width="14.5" height="14.5" fill="#888000"/><rect x="36.0" y="452.1" width="14.5" height="14.5" fill="#8b8000"/><rect x="49.9" y="452.1" width="14.5" height="14.5" fill="#8a8000"/><rect x="63.8" y="452.1" width="14.5" height="14.5" fill="#848000"/><rect x="77.7" y="452.1" width="14.5" height="14.5" fill="#84ac00"/><rect x="91.6" y="452.1" width="14.5" height="14.5" fill="#87ac00"/><rect x="105.5" y="452.1" width="14.5" height="14.5" fill="#8aac00"/><rect x="119.4" y="452.1" width="14.5" height="14.5" fill="#8bac00"/><rect x="133.3" y="452.1" width="14.5" height="14.5" fill="#86ac00"/><rect x="147.2" y="452.1" width="14.5" height="14.5" fill="#85ac00"/><rect x="161.1" y="452.1" width="14.5" height="14.5" fill="#85ac00"/><rect x="175.0" y="452.1" width="14.5" height="14.5" fill="#88ac00"/><rect x="188.9" y="452.1" width="14.5" height="14.5" fill="#8cac00"/><rect x="202.8" y="452.1" width="14.5" height="14.5" fill="#8cac00"/><rect x="216.7" y="452.1" width="14.5" height="14.5" fill="#8cac00"/><rect x="230.6" y="452.1" width="14.5" height="14.5" fill="#89ac00"/><rect x="244.5" y="452.1" width="14.5" height="14.5" fill="#89ac00"/><rect x="258.4" y="452.1" width="14.5" height="14.5" fill="#8fac00"/><rect x="272.3" y="452.1" width="14.5" height="14.5" fill="#918000"/><rect x="286.2" y="452.1" width="14.5" height="14.5" fill="#9a8000"/><rect x="300.1" y="452.1" width="14.5" height="14.5" fill="#978000"/><rect x="314.0" y="452.1" width="14.5" height="14.5" fill="#9f8000"/><rect x="327.9" y="452.1" width="14.5" height="14.5" fill="#a88000"/><rect x="8.2" y="466.0" width="14.5" height="14.5" fill="#81d900"/><rect x="22.1" y="466.0" width="14.5" height="14.5" fill="#7d8000"/><rect x="36.0" y="466.0" width="14.5" height="14.5" fill="#848000"/><rect x="49.9" y="466.0" width="14.5" height="14.5" fill="#818000"/><rect x="63.8" y="466.0" width="14.5" height="14.5" fill="#878000"/><rect x="77.7" y="466.0" width="14.5" height="14.5" fill="#88ac00"/><rect x="91.6" y="466.0" width="14.5" height="14.5" fill="#87ac00"/><rect x="105.5" y="466.0" width="14.5" height="14.5" fill="#87ac00"/><rect x="119.4" y="466.0" width="14.5" height="14.5" fill="#8bac00"/><rect x="133.3" y="466.0" width="14.5" height="14.5" fill="#85ac00"/><rect x="147.2" y="466.0" width="14.5" height="14.5" fill="#88ac00"/><rect x="161.1" y="466.0" width="14.5" height="14.5" fill="#889900"/><rect x="175.0" y="466.0" width="14.5" height="14.5" fill="#81ac00"/><rect x="188.9" y="466.0" width="14.5" height="14.5" fill="#88ac00"/><rect x="202.8" y="466.0" width="14.5" height="14.5" fill="#83ac00"/><rect x="216.7" y="466.0" width="14.5" height="14.5" fill="#89ac00"/><rect x="230.6" y="466.0" width="14.5" height="14.5" fill="#89ac00"/><rect x="244.5" y="466.0" width="14.5" height="14.5" fill="#8cac00"/><rect x="258.4" y="466.0" width="14.5" height="14.5" fill="#8fac00"/><rect x="272.3" y="466.0" width="14.5" height="14.5" fill="#968000"/><rect x="286.2" y="466.0" width="14.5" height="14.5" fill="#978000"/><rect x="300.1" y="466.0" width="14.5" height="14.5" fill="#9c8000"/><rect x="314.0" y="466.0" width="14.5" height="14.5" fill="#a18000"/><rect x="327.9" y="466.0" width="14.5" height="14.5" fill="#aa8000"/><rect x="8.2" y="479.8" width="14.5" height="14.5" fill="#81d900"/><rect x="22.1" y="479.8" width="14.5" height="14.5" fill="#818000"/><rect x="36.0" y="479.8" width="14.5" height="14.5" fill="#888000"/><rect x="49.9" y="479.8" width="14.5" height="14.5" fill="#8f8000"/><rect x="63.8" y="479.8" width="14.5" height="14.5" fill="#8c8000"/><rect x="77.7" y="479.8" width="14.5" height="14.5" fill="#7fac00"/><rect x="91.6" y="479.8" width="14.5" height="14.5" fill="#7fac00"/><rect x="105.5" y="479.8" width="14.5" height="14.5" fill="#7fac00"/><rect x="119.4" y="479.8" width="14.5" height="14.5" fill="#81ac00"/><rect x="133.3" y="479.8" width="14.5" height="14.5" fill="#7eac00"/><rect x="147.2" y="479.8" width="14.5" height="14.5" fill="#88ac00"/><rect x="161.1" y="479.8" width="14.5" height="14.5" fill="#949900"/><rect x="175.0" y="479.8" width="14.5" height="14.5" fill="#85ac00"/><rect x="188.9" y="479.8" width="14.5" height="14.5" fill="#8a9900"/><rect x="202.8" y="479.8" width="14.5" height="14.5" fill="#88ac00"/><rect x="216.7" y="479.8" width="14.5" height="14.5" fill="#89ac00"/><rect x="230.6" y="479.8" width="14.5" height="14.5" fill="#89ac00"/><rect x="244.5" y="479.8" width="14.5" height="14.5" fill="#89ac00"/><rect x="258.4" y="479.8" width="14.5" height="14.5" fill="#8cac00"/><rect x="272.3" y="479.8" width="14.5" height="14.5" fill="#968000"/><rect x="286.2" y="479.8" width="14.5" height="14.5" fill="#948000"/><rect x="300.1" y="479.8" width="14.5" height="14.5" fill="#9c8000"/><rect x="314.0" y="479.8" width="14.5" height="14.5" fill="#9c8000"/><rect x="327.9" y="479.8" width="14.5" height="14.5" fill="#a88000"/><rect x="8.2" y="493.7" width="14.5" height="14.5" fill="#81d900"/><rect x="22.1" y="493.7" width="14.5" height="14.5" fill="#818000"/><rect x="36.0" y="493.7" width="14.5" height="14.5" fill="#7d8000"/><rect x="49.9" y="493.7" width="14.5" height="14.5" fill="#818000"/><rect x="63.8" y="493.7" width="14.5" height="14.5" fill="#848000"/><rect x="77.7" y="493.7" width="14.5" height="14.5" fill="#77ac00"/><rect x="91.6" y="493.7" width="14.5" height="14.5" fill="#7dac00"/><rect x="105.5" y="493.7" width="14.5" height="14.5" fill="#78ac00"/><rect x="119.4" y="493.7" width="14.5" height="14.5" fill="#7dac00"/><rect x="133.3" y="493.7" width="14.5" height="14.5" fill="#7bac00"/><rect x="147.2" y="493.7" width="14.5" height="14.5" fill="#7eac00"/><rect x="161.1" y="493.7" width="14.5" height="14.5" fill="#81ac00"/><rect x="175.0" y="493.7" width="14.5" height="14.5" fill="#81ac00"/><rect x="188.9" y="493.7" width="14.5" height="14.5" fill="#83ac00"/><rect x="202.8" y="493.7" width="14.5" height="14.5" fill="#86ac00"/><rect x="216.7" y="493.7" width="14.5" height="14.5" fill="#89ac00"/><rect x="230.6" y="493.7" width="14.5" height="14.5" fill="#8cac00"/><rect x="244.5" y="493.7" width="14.5" height="14.5" fill="#8cac00"/><rect x="258.4" y="493.7" width="14.5" height="14.5" fill="#8cac00"/><rect x="272.3" y="493.7" width="14.5" height="14.5" fill="#948000"/><rect x="286.2" y="493.7" width="14.5" height="14.5" fill="#938000"/><rect x="300.1" y="493.7" width="14.5" height="14.5" fill="#978000"/><rect x="314.0" y="493.7" width="14.5" height="14.5" fill="#9c8000"/><rect x="327.9" y="493.7" width="14.5" height="14.5" fill="#a38000"/><rect x="8.2" y="507.6" width="14.5" height="14.5" fill="#73b200"/><rect x="22.1" y="507.6" width="14.5" height="14.5" fill="#70b200"/><rect x="36.0" y="507.6" width="14.5" height="14.5" fill="#7ab200"/><rect x="49.9" y="507.6" width="14.5" height="14.5" fill="#73b200"/><rect x="63.8" y="507.6" width="14.5" height="14.5" fill="#73b200"/><rect x="77.7" y="507.6" width="14.5" height="14.5" fill="#88b200"/><rect x="91.6" y="507.6" width="14.5" height="14.5" fill="#88b200"/><rect x="105.5" y="507.6" width="14.5" height="14.5" fill="#89b200"/><rect x="119.4" y="507.6" width="14.5" height="14.5" fill="#8cb200"/><rect x="133.3" y="507.6" width="14.5" height="14.5" fill="#8cb200"/><rect x="147.2" y="507.6" width="14.5" height="14.5" fill="#8cb200"/><rect x="161.1" y="507.6" width="14.5" height="14.5" fill="#8e9900"/><rect x="175.0" y="507.6" width="14.5" height="14.5" fill="#899900"/><rect x="188.9" y="507.6" width="14.5" height="14.5" fill="#8b9900"/><rect x="202.8" y="507.6" width="14.5" height="14.5" fill="#8c8000"/><rect x="216.7" y="507.6" width="14.5" height="14.5" fill="#898000"/><rect x="230.6" y="507.6" width="14.5" height="14.5" fill="#8c8000"/><rect x="244.5" y="507.6" width="14.5" height="14.5" fill="#908000"/><rect x="258.4" y="507.6" width="14.5" height="14.5" fill="#908000"/><rect x="272.3" y="507.6" width="14.5" height="14.5" fill="#8d8000"/><rect x="286.2" y="507.6" width="14.5" height="14.5" fill="#888000"/><rect x="300.1" y="507.6" width="14.5" height="14.5" fill="#898000"/><rect x="314.0" y="507.6" width="14.5" height="14.5" fill="#978000"/><rect x="327.9" y="507.6" width="14.5" height="14.5" fill="#968000"/><rect x="8.2" y="521.5" width="14.5" height="14.5" fill="#62b200"/><rect x="22.1" y="521.5" width="14.5" height="14.5" fill="#6cb200"/><rect x="36.0" y="521.5" width="14.5" height="14.5" fill="#7ab200"/><rect x="49.9" y="521.5" width="14.5" height="14.5" fill="#81b200"/><rect x="63.8" y="521.5" width="14.5" height="14.5" fill="#83b200"/><rect x="77.7" y="521.5" width="14.5" height="14.5" fill="#88b200"/><rect x="91.6" y="521.5" width="14.5" height="14.5" fill="#8cb200"/><rect x="105.5" y="521.5" width="14.5" height="14.5" fill="#8cb200"/><rect x="119.4" y="521.5" width="14.5" height="14.5" fill="#8fb200"/><rect x="133.3" y="521.5" width="14.5" height="14.5" fill="#8fb200"/><rect x="147.2" y="521.5" width="14.5" height="14.5" fill="#91b200"/><rect x="161.1" y="521.5" width="14.5" height="14.5" fill="#8a9900"/><rect x="175.0" y="521.5" width="14.5" height="14.5" fill="#889900"/><rect x="188.9" y="521.5" width="14.5" height="14.5" fill="#889900"/><rect x="202.8" y="521.5" width="14.5" height="14.5" fill="#778000"/><rect x="216.7" y="521.5" width="14.5" height="14.5" fill="#778000"/><rect x="230.6" y="521.5" width="14.5" height="14.5" fill="#7e8000"/><rect x="244.5" y="521.5" width="14.5" height="14.5" fill="#899900"/><rect x="258.4" y="521.5" width="14.5" height="14.5" fill="#8f9900"/><rect x="272.3" y="521.5" width="14.5" height="14.5" fill="#858000"/><rect x="286.2" y="521.5" width="14.5" height="14.5" fill="#868000"/><rect x="300.1" y="521.5" width="14.5" height="14.5" fill="#898000"/><rect x="314.0" y="521.5" width="14.5" height="14.5" fill="#8f8000"/><rect x="327.9" y="521.5" width="14.5" height="14.5" fill="#968000"/><rect x="8.2" y="535.4" width="14.5" height="14.5" fill="#7ab200"/><rect x="22.1" y="535.4" width="14.5" height="14.5" fill="#81b200"/><rect x="36.0" y="535.4" width="14.5" height="14.5" fill="#88b200"/><rect x="49.9" y="535.4" width="14.5" height="14.5" fill="#88b200"/><rect x="63.8" y="535.4" width="14.5" height="14.5" fill="#88b200"/><rect x="77.7" y="535.4" width="14.5" height="14.5" fill="#8cb200"/><rect x="91.6" y="535.4" width="14.5" height="14.5" fill="#8cb200"/><rect x="105.5" y="535.4" width="14.5" height="14.5" fill="#88b200"/><rect x="119.4" y="535.4" width="14.5" height="14.5" fill="#8cb200"/><rect x="133.3" y="535.4" width="14.5" height="14.5" fill="#8fb200"/><rect x="147.2" y="535.4" width="14.5" height="14.5" fill="#8cb200"/><rect x="161.1" y="535.4" width="14.5" height="14.5" fill="#8e9900"/><rect x="175.0" y="535.4" width="14.5" height="14.5" fill="#889900"/><rect x="188.9" y="535.4" width="14.5" height="14.5" fill="#889900"/><rect x="202.8" y="535.4" width="14.5" height="14.5" fill="#7a8000"/><rect x="216.7" y="535.4" width="14.5" height="14.5" fill="#708000"/><rect x="230.6" y="535.4" width="14.5" height="14.5" fill="#738000"/><rect x="244.5" y="535.4" width="14.5" height="14.5" fill="#7a8000"/><rect x="258.4" y="535.4" width="14.5" height="14.5" fill="#889900"/><rect x="272.3" y="535.4" width="14.5" height="14.5" fill="#7e8000"/><rect x="286.2" y="535.4" width="14.5" height="14.5" fill="#888000"/><rect x="300.1" y="535.4" width="14.5" height="14.5" fill="#8c8000"/><rect x="314.0" y="535.4" width="14.5" height="14.5" fill="#8f8000"/><rect x="327.9" y="535.4" width="14.5" height="14.5" fill="#968000"/><rect x="8.2" y="549.2" width="14.5" height="14.5" fill="#81b200"/><rect x="22.1" y="549.2" width="14.5" height="14.5" fill="#88b200"/><rect x="36.0" y="549.2" width="14.5" height="14.5" fill="#89b200"/><rect x="49.9" y="549.2" width="14.5" height="14.5" fill="#89b200"/><rect x="63.8" y="549.2" width="14.5" height="14.5" fill="#8cb200"/><rect x="77.7" y="549.2" width="14.5" height="14.5" fill="#89b200"/><rect x="91.6" y="549.2" width="14.5" height="14.5" fill="#89b200"/><rect x="105.5" y="549.2" width="14.5" height="14.5" fill="#83b200"/><rect x="119.4" y="549.2" width="14.5" height="14.5" fill="#81b200"/><rect x="133.3" y="549.2" width="14.5" height="14.5" fill="#81b200"/><rect x="147.2" y="549.2" width="14.5" height="14.5" fill="#83b200"/><rect x="161.1" y="549.2" width="14.5" height="14.5" fill="#888000"/><rect x="175.0" y="549.2" width="14.5" height="14.5" fill="#858000"/><rect x="188.9" y="549.2" width="14.5" height="14.5" fill="#889900"/><rect x="202.8" y="549.2" width="14.5" height="14.5" fill="#7e8000"/><rect x="216.7" y="549.2" width="14.5" height="14.5" fill="#738000"/><rect x="230.6" y="549.2" width="14.5" height="14.5" fill="#738000"/><rect x="244.5" y="549.2" width="14.5" height="14.5" fill="#7e8000"/><rect x="258.4" y="549.2" width="14.5" height="14.5" fill="#818000"/><rect x="272.3" y="549.2" width="14.5" height="14.5" fill="#888000"/><rect x="286.2" y="549.2" width="14.5" height="14.5" fill="#888000"/><rect x="300.1" y="549.2" width="14.5" height="14.5" fill="#898000"/><rect x="314.0" y="549.2" width="14.5" height="14.5" fill="#8c8000"/><rect x="327.9" y="549.2" width="14.5" height="14.5" fill="#9a8000"/><rect x="8.2" y="563.1" width="14.5" height="14.5" fill="#83b200"/><rect x="22.1" y="563.1" width="14.5" height="14.5" fill="#88b200"/><rect x="36.0" y="563.1" width="14.5" height="14.5" fill="#89b200"/><rect x="49.9" y="563.1" width="14.5" height="14.5" fill="#88b200"/><rect x="63.8" y="563.1" width="14.5" height="14.5" fill="#85b200"/><rect x="77.7" y="563.1" width="14.5" height="14.5" fill="#81b200"/><rect x="91.6" y="563.1" width="14.5" height="14.5" fill="#81b200"/><rect x="105.5" y="563.1" width="14.5" height="14.5" fill="#7eb200"/><rect x="119.4" y="563.1" width="14.5" height="14.5" fill="#76b200"/><rect x="133.3" y="563.1" width="14.5" height="14.5" fill="#73b200"/><rect x="147.2" y="563.1" width="14.5" height="14.5" fill="#76b200"/><rect x="161.1" y="563.1" width="14.5" height="14.5" fill="#7a8000"/><rect x="175.0" y="563.1" width="14.5" height="14.5" fill="#7e8000"/><rect x="188.9" y="563.1" width="14.5" height="14.5" fill="#888000"/><rect x="202.8" y="563.1" width="14.5" height="14.5" fill="#888000"/><rect x="216.7" y="563.1" width="14.5" height="14.5" fill="#778000"/><rect x="230.6" y="563.1" width="14.5" height="14.5" fill="#768000"/><rect x="244.5" y="563.1" width="14.5" height="14.5" fill="#7a8000"/><rect x="258.4" y="563.1" width="14.5" height="14.5" fill="#7e8000"/><rect x="272.3" y="563.1" width="14.5" height="14.5" fill="#818000"/><rect x="286.2" y="563.1" width="14.5" height="14.5" fill="#8a9900"/><rect x="300.1" y="563.1" width="14.5" height="14.5" fill="#888000"/><rect x="314.0" y="563.1" width="14.5" height="14.5" fill="#898000"/><rect x="327.9" y="563.1" width="14.5" height="14.5" fill="#948000"/><rect x="8.2" y="577.0" width="14.5" height="14.5" fill="#81b200"/><rect x="22.1" y="577.0" width="14.5" height="14.5" fill="#83b200"/><rect x="36.0" y="577.0" width="14.5" height="14.5" fill="#83b200"/><rect x="49.9" y="577.0" width="14.5" height="14.5" fill="#83b200"/><rect x="63.8" y="577.0" width="14.5" height="14.5" fill="#7eb200"/><rect x="77.7" y="577.0" width="14.5" height="14.5" fill="#73b200"/><rect x="91.6" y="577.0" width="14.5" height="14.5" fill="#6db200"/><rect x="105.5" y="577.0" width="14.5" height="14.5" fill="#6cb200"/><rect x="119.4" y="577.0" width="14.5" height="14.5" fill="#6db200"/><rect x="133.3" y="577.0" width="14.5" height="14.5" fill="#7ab200"/><rect x="147.2" y="577.0" width="14.5" height="14.5" fill="#81b200"/><rect x="161.1" y="577.0" width="14.5" height="14.5" fill="#818000"/><rect x="175.0" y="577.0" width="14.5" height="14.5" fill="#858000"/><rect x="188.9" y="577.0" width="14.5" height="14.5" fill="#889900"/><rect x="202.8" y="577.0" width="14.5" height="14.5" fill="#889900"/><rect x="216.7" y="577.0" width="14.5" height="14.5" fill="#889900"/><rect x="230.6" y="577.0" width="14.5" height="14.5" fill="#7e8000"/><rect x="244.5" y="577.0" width="14.5" height="14.5" fill="#7e8000"/><rect x="258.4" y="577.0" width="14.5" height="14.5" fill="#918000"/><rect x="272.3" y="577.0" width="14.5" height="14.5" fill="#888000"/><rect x="286.2" y="577.0" width="14.5" height="14.5" fill="#899900"/><rect x="300.1" y="577.0" width="14.5" height="14.5" fill="#8a9900"/><rect x="314.0" y="577.0" width="14.5" height="14.5" fill="#888000"/><rect x="327.9" y="577.0" width="14.5" height="14.5" fill="#938000"/><rect x="8.2" y="590.9" width="14.5" height="14.5" fill="#7eb200"/><rect x="22.1" y="590.9" width="14.5" height="14.5" fill="#7bb200"/><rect x="36.0" y="590.9" width="14.5" height="14.5" fill="#7ab200"/><rect x="49.9" y="590.9" width="14.5" height="14.5" fill="#76b200"/><rect x="63.8" y="590.9" width="14.5" height="14.5" fill="#70b200"/><rect x="77.7" y="590.9" width="14.5" height="14.5" fill="#6cb200"/><rect x="91.6" y="590.9" width="14.5" height="14.5" fill="#7ab200"/><rect x="105.5" y="590.9" width="14.5" height="14.5" fill="#83b200"/><rect x="119.4" y="590.9" width="14.5" height="14.5" fill="#83b200"/><rect x="133.3" y="590.9" width="14.5" height="14.5" fill="#83b200"/><rect x="147.2" y="590.9" width="14.5" height="14.5" fill="#7eb200"/><rect x="161.1" y="590.9" width="14.5" height="14.5" fill="#888000"/><rect x="175.0" y="590.9" width="14.5" height="14.5" fill="#888000"/><rect x="188.9" y="590.9" width="14.5" height="14.5" fill="#889900"/><rect x="202.8" y="590.9" width="14.5" height="14.5" fill="#889900"/><rect x="216.7" y="590.9" width="14.5" height="14.5" fill="#889900"/><rect x="230.6" y="590.9" width="14.5" height="14.5" fill="#889900"/><rect x="244.5" y="590.9" width="14.5" height="14.5" fill="#919900"/><rect x="258.4" y="590.9" width="14.5" height="14.5" fill="#8f8000"/><rect x="272.3" y="590.9" width="14.5" height="14.5" fill="#8f8000"/><rect x="286.2" y="590.9" width="14.5" height="14.5" fill="#888000"/><rect x="300.1" y="590.9" width="14.5" height="14.5" fill="#888000"/><rect x="314.0" y="590.9" width="14.5" height="14.5" fill="#888000"/><rect x="327.9" y="590.9" width="14.5" height="14.5" fill="#8f8000"/><rect x="341.8" y="590.9" width="14.5" height="14.5" fill="#9a8000"/><rect x="8.2" y="604.8" width="14.5" height="14.5" fill="#7ab200"/><rect x="22.1" y="604.8" width="14.5" height="14.5" fill="#77b200"/><rect x="36.0" y="604.8" width="14.5" height="14.5" fill="#70b200"/><rect x="49.9" y="604.8" width="14.5" height="14.5" fill="#65b200"/><rect x="63.8" y="604.8" width="14.5" height="14.5" fill="#62b200"/><rect x="77.7" y="604.8" width="14.5" height="14.5" fill="#6cb200"/><rect x="91.6" y="604.8" width="14.5" height="14.5" fill="#85b200"/><rect x="105.5" y="604.8" width="14.5" height="14.5" fill="#8cb200"/><rect x="119.4" y="604.8" width="14.5" height="14.5" fill="#88b200"/><rect x="133.3" y="604.8" width="14.5" height="14.5" fill="#88b200"/><rect x="147.2" y="604.8" width="14.5" height="14.5" fill="#85b200"/><rect x="161.1" y="604.8" width="14.5" height="14.5" fill="#8c8000"/><rect x="175.0" y="604.8" width="14.5" height="14.5" fill="#8f8000"/><rect x="188.9" y="604.8" width="14.5" height="14.5" fill="#889900"/><rect x="202.8" y="604.8" width="14.5" height="14.5" fill="#889900"/><rect x="216.7" y="604.8" width="14.5" height="14.5" fill="#889900"/><rect x="230.6" y="604.8" width="14.5" height="14.5" fill="#889900"/><rect x="244.5" y="604.8" width="14.5" height="14.5" fill="#889900"/><rect x="258.4" y="604.8" width="14.5" height="14.5" fill="#929900"/><rect x="272.3" y="604.8" width="14.5" height="14.5" fill="#888000"/><rect x="286.2" y="604.8" width="14.5" height="14.5" fill="#8c8000"/><rect x="300.1" y="604.8" width="14.5" height="14.5" fill="#8e9900"/><rect x="314.0" y="604.8" width="14.5" height="14.5" fill="#8d9900"/><rect x="327.9" y="604.8" width="14.5" height="14.5" fill="#979900"/><rect x="341.8" y="604.8" width="14.5" height="14.5" fill="#9c8000"/><rect x="8.2" y="618.6" width="14.5" height="14.5" fill="#5eb200"/><rect x="22.1" y="618.6" width="14.5" height="14.5" fill="#62b200"/><rect x="36.0" y="618.6" width="14.5" height="14.5" fill="#65b200"/><rect x="49.9" y="618.6" width="14.5" height="14.5" fill="#65b200"/><rect x="63.8" y="618.6" width="14.5" height="14.5" fill="#68b200"/><rect x="77.7" y="618.6" width="14.5" height="14.5" fill="#81b200"/><rect x="91.6" y="618.6" width="14.5" height="14.5" fill="#8cb200"/><rect x="105.5" y="618.6" width="14.5" height="14.5" fill="#8cb200"/><rect x="119.4" y="618.6" width="14.5" height="14.5" fill="#88b200"/><rect x="133.3" y="618.6" width="14.5" height="14.5" fill="#81b200"/><rect x="147.2" y="618.6" width="14.5" height="14.5" fill="#83b200"/><rect x="161.1" y="618.6" width="14.5" height="14.5" fill="#8f8000"/><rect x="175.0" y="618.6" width="14.5" height="14.5" fill="#8f8000"/><rect x="188.9" y="618.6" width="14.5" height="14.5" fill="#8e9900"/><rect x="202.8" y="618.6" width="14.5" height="14.5" fill="#889900"/><rect x="216.7" y="618.6" width="14.5" height="14.5" fill="#889900"/><rect x="230.6" y="618.6" width="14.5" height="14.5" fill="#889900"/><rect x="244.5" y="618.6" width="14.5" height="14.5" fill="#889900"/><rect x="258.4" y="618.6" width="14.5" height="14.5" fill="#889900"/><rect x="272.3" y="618.6" width="14.5" height="14.5" fill="#8c8000"/><rect x="286.2" y="618.6" width="14.5" height="14.5" fill="#899900"/><rect x="300.1" y="618.6" width="14.5" height="14.5" fill="#889900"/><rect x="314.0" y="618.6" width="14.5" height="14.5" fill="#889900"/><rect x="327.9" y="618.6" width="14.5" height="14.5" fill="#8a9900"/><rect x="341.8" y="618.6" width="14.5" height="14.5" fill="#929900"/><rect x="8.2" y="632.5" width="14.5" height="14.5" fill="#5bb200"/><rect x="22.1" y="632.5" width="14.5" height="14.5" fill="#62b200"/><rect x="36.0" y="632.5" width="14.5" height="14.5" fill="#73b200"/><rect x="49.9" y="632.5" width="14.5" height="14.5" fill="#7ab200"/><rect x="63.8" y="632.5" width="14.5" height="14.5" fill="#85b200"/><rect x="77.7" y="632.5" width="14.5" height="14.5" fill="#88b200"/><rect x="91.6" y="632.5" width="14.5" height="14.5" fill="#8cb200"/><rect x="105.5" y="632.5" width="14.5" height="14.5" fill="#89b200"/><rect x="119.4" y="632.5" width="14.5" height="14.5" fill="#85b200"/><rect x="133.3" y="632.5" width="14.5" height="14.5" fill="#7eb200"/><rect x="147.2" y="632.5" width="14.5" height="14.5" fill="#81b200"/><rect x="161.1" y="632.5" width="14.5" height="14.5" fill="#888000"/><rect x="175.0" y="632.5" width="14.5" height="14.5" fill="#8c8000"/><rect x="188.9" y="632.5" width="14.5" height="14.5" fill="#918000"/><rect x="202.8" y="632.5" width="14.5" height="14.5" fill="#899900"/><rect x="216.7" y="632.5" width="14.5" height="14.5" fill="#889900"/><rect x="230.6" y="632.5" width="14.5" height="14.5" fill="#889900"/><rect x="244.5" y="632.5" width="14.5" height="14.5" fill="#889900"/><rect x="258.4" y="632.5" width="14.5" height="14.5" fill="#889900"/><rect x="272.3" y="632.5" width="14.5" height="14.5" fill="#8f9900"/><rect x="286.2" y="632.5" width="14.5" height="14.5" fill="#888000"/><rect x="300.1" y="632.5" width="14.5" height="14.5" fill="#889900"/><rect x="314.0" y="632.5" width="14.5" height="14.5" fill="#889900"/><rect x="327.9" y="632.5" width="14.5" height="14.5" fill="#889900"/><rect x="341.8" y="632.5" width="14.5" height="14.5" fill="#899900"/><rect x="8.2" y="646.4" width="14.5" height="14.5" fill="#68b200"/><rect x="22.1" y="646.4" width="14.5" height="14.5" fill="#7ab200"/><rect x="36.0" y="646.4" width="14.5" height="14.5" fill="#88b200"/><rect x="49.9" y="646.4" width="14.5" height="14.5" fill="#88b200"/><rect x="63.8" y="646.4" width="14.5" height="14.5" fill="#8cb200"/><rect x="77.7" y="646.4" width="14.5" height="14.5" fill="#8cb200"/><rect x="91.6" y="646.4" width="14.5" height="14.5" fill="#81b200"/><rect x="105.5" y="646.4" width="14.5" height="14.5" fill="#81b200"/><rect x="119.4" y="646.4" width="14.5" height="14.5" fill="#83b200"/><rect x="133.3" y="646.4" width="14.5" height="14.5" fill="#8cb200"/><rect x="147.2" y="646.4" width="14.5" height="14.5" fill="#8cb200"/><rect x="161.1" y="646.4" width="14.5" height="14.5" fill="#888000"/><rect x="175.0" y="646.4" width="14.5" height="14.5" fill="#888000"/><rect x="188.9" y="646.4" width="14.5" height="14.5" fill="#8c8000"/><rect x="202.8" y="646.4" width="14.5" height="14.5" fill="#8b9900"/><rect x="216.7" y="646.4" width="14.5" height="14.5" fill="#889900"/><rect x="230.6" y="646.4" width="14.5" height="14.5" fill="#889900"/><rect x="244.5" y="646.4" width="14.5" height="14.5" fill="#889900"/><rect x="258.4" y="646.4" width="14.5" height="14.5" fill="#889900"/><rect x="272.3" y="646.4" width="14.5" height="14.5" fill="#889900"/><rect x="286.2" y="646.4" width="14.5" height="14.5" fill="#888000"/><rect x="300.1" y="646.4" width="14.5" height="14.5" fill="#889900"/><rect x="314.0" y="646.4" width="14.5" height="14.5" fill="#889900"/><rect x="327.9" y="646.4" width="14.5" height="14.5" fill="#889900"/><rect x="341.8" y="646.4" width="14.5" height="14.5" fill="#8e9900"/><rect x="8.2" y="660.3" width="14.5" height="14.5" fill="#7ab200"/><rect x="22.1" y="660.3" width="14.5" height="14.5" fill="#7ab200"/><rect x="36.0" y="660.3" width="14.5" height="14.5" fill="#81b200"/><rect x="49.9" y="660.3" width="14.5" height="14.5" fill="#73b200"/><rect x="63.8" y="660.3" width="14.5" height="14.5" fill="#70b200"/><rect x="77.7" y="660.3" width="14.5" height="14.5" fill="#73b200"/><rect x="91.6" y="660.3" width="14.5" height="14.5" fill="#76b200"/><rect x="105.5" y="660.3" width="14.5" height="14.5" fill="#7eb200"/><rect x="119.4" y="660.3" width="14.5" height="14.5" fill="#83b200"/><rect x="133.3" y="660.3" width="14.5" height="14.5" fill="#88b200"/><rect x="147.2" y="660.3" width="14.5" height="14.5" fill="#88b200"/><rect x="161.1" y="660.3" width="14.5" height="14.5" fill="#8c8000"/><rect x="175.0" y="660.3" width="14.5" height="14.5" fill="#888000"/><rect x="188.9" y="660.3" width="14.5" height="14.5" fill="#858000"/><rect x="202.8" y="660.3" width="14.5" height="14.5" fill="#888000"/><rect x="216.7" y="660.3" width="14.5" height="14.5" fill="#909900"/><rect x="230.6" y="660.3" width="14.5" height="14.5" fill="#889900"/><rect x="244.5" y="660.3" width="14.5" height="14.5" fill="#889900"/><rect x="258.4" y="660.3" width="14.5" height="14.5" fill="#889900"/><rect x="272.3" y="660.3" width="14.5" height="14.5" fill="#889900"/><rect x="286.2" y="660.3" width="14.5" height="14.5" fill="#889900"/><rect x="300.1" y="660.3" width="14.5" height="14.5" fill="#889900"/><rect x="314.0" y="660.3" width="14.5" height="14.5" fill="#889900"/><rect x="327.9" y="660.3" width="14.5" height="14.5" fill="#889900"/><rect x="341.8" y="660.3" width="14.5" height="14.5" fill="#968000"/><rect x="8.2" y="674.2" width="14.5" height="14.5" fill="#88b200"/><rect x="22.1" y="674.2" width="14.5" height="14.5" fill="#7eb200"/><rect x="36.0" y="674.2" width="14.5" height="14.5" fill="#73b200"/><rect x="49.9" y="674.2" width="14.5" height="14.5" fill="#70b200"/><rect x="63.8" y="674.2" width="14.5" height="14.5" fill="#7ab200"/><rect x="77.7" y="674.2" width="14.5" height="14.5" fill="#869900"/><rect x="91.6" y="674.2" width="14.5" height="14.5" fill="#869900"/><rect x="105.5" y="674.2" width="14.5" height="14.5" fill="#809900"/><rect x="119.4" y="674.2" width="14.5" height="14.5" fill="#879900"/><rect x="133.3" y="674.2" width="14.5" height="14.5" fill="#81b200"/><rect x="147.2" y="674.2" width="14.5" height="14.5" fill="#8e9900"/><rect x="161.1" y="674.2" width="14.5" height="14.5" fill="#929900"/><rect x="175.0" y="674.2" width="14.5" height="14.5" fill="#818000"/><rect x="188.9" y="674.2" width="14.5" height="14.5" fill="#7a8000"/><rect x="202.8" y="674.2" width="14.5" height="14.5" fill="#818000"/><rect x="216.7" y="674.2" width="14.5" height="14.5" fill="#8c8000"/><rect x="230.6" y="674.2" width="14.5" height="14.5" fill="#8b9900"/><rect x="244.5" y="674.2" width="14.5" height="14.5" fill="#889900"/><rect x="258.4" y="674.2" width="14.5" height="14.5" fill="#889900"/><rect x="272.3" y="674.2" width="14.5" height="14.5" fill="#889900"/><rect x="286.2" y="674.2" width="14.5" height="14.5" fill="#899900"/><rect x="300.1" y="674.2" width="14.5" height="14.5" fill="#889900"/><rect x="314.0" y="674.2" width="14.5" height="14.5" fill="#889900"/><rect x="327.9" y="674.2" width="14.5" height="14.5" fill="#8c9900"/><rect x="341.8" y="674.2" width="14.5" height="14.5" fill="#968000"/><rect x="8.2" y="688.0" width="14.5" height="14.5" fill="#8b9900"/><rect x="22.1" y="688.0" width="14.5" height="14.5" fill="#809900"/><rect x="36.0" y="688.0" width="14.5" height="14.5" fill="#76b200"/><rect x="49.9" y="688.0" width="14.5" height="14.5" fill="#73b200"/><rect x="63.8" y="688.0" width="14.5" height="14.5" fill="#809900"/><rect x="77.7" y="688.0" width="14.5" height="14.5" fill="#919900"/><rect x="91.6" y="688.0" width="14.5" height="14.5" fill="#899900"/><rect x="105.5" y="688.0" width="14.5" height="14.5" fill="#8a9900"/><rect x="119.4" y="688.0" width="14.5" height="14.5" fill="#969900"/><rect x="133.3" y="688.0" width="14.5" height="14.5" fill="#9a9900"/><rect x="147.2" y="688.0" width="14.5" height="14.5" fill="#8c9900"/><rect x="161.1" y="688.0" width="14.5" height="14.5" fill="#8d9900"/><rect x="175.0" y="688.0" width="14.5" height="14.5" fill="#8c8000"/><rect x="188.9" y="688.0" width="14.5" height="14.5" fill="#888000"/><rect x="202.8" y="688.0" width="14.5" height="14.5" fill="#888000"/><rect x="216.7" y="688.0" width="14.5" height="14.5" fill="#888000"/><rect x="230.6" y="688.0" width="14.5" height="14.5" fill="#8c8000"/><rect x="244.5" y="688.0" width="14.5" height="14.5" fill="#8c9900"/><rect x="258.4" y="688.0" width="14.5" height="14.5" fill="#889900"/><rect x="272.3" y="688.0" width="14.5" height="14.5" fill="#889900"/><rect x="286.2" y="688.0" width="14.5" height="14.5" fill="#909900"/><rect x="300.1" y="688.0" width="14.5" height="14.5" fill="#888000"/><rect x="314.0" y="688.0" width="14.5" height="14.5" fill="#838000"/><rect x="327.9" y="688.0" width="14.5" height="14.5" fill="#888000"/><rect x="341.8" y="688.0" width="14.5" height="14.5" fill="#968000"/><rect x="8.2" y="701.9" width="14.5" height="14.5" fill="#809900"/><rect x="22.1" y="701.9" width="14.5" height="14.5" fill="#73b200"/><rect x="36.0" y="701.9" width="14.5" height="14.5" fill="#70b200"/><rect x="49.9" y="701.9" width="14.5" height="14.5" fill="#7ab200"/><rect x="63.8" y="701.9" width="14.5" height="14.5" fill="#809900"/><rect x="77.7" y="701.9" width="14.5" height="14.5" fill="#899900"/><rect x="91.6" y="701.9" width="14.5" height="14.5" fill="#8d9900"/><rect x="105.5" y="701.9" width="14.5" height="14.5" fill="#899900"/><rect x="119.4" y="701.9" width="14.5" height="14.5" fill="#979900"/><rect x="133.3" y="701.9" width="14.5" height="14.5" fill="#a29900"/><rect x="147.2" y="701.9" width="14.5" height="14.5" fill="#8a9900"/><rect x="161.1" y="701.9" width="14.5" height="14.5" fill="#8d9900"/><rect x="175.0" y="701.9" width="14.5" height="14.5" fill="#8f8000"/><rect x="188.9" y="701.9" width="14.5" height="14.5" fill="#888000"/><rect x="202.8" y="701.9" width="14.5" height="14.5" fill="#858000"/><rect x="216.7" y="701.9" width="14.5" height="14.5" fill="#858000"/><rect x="230.6" y="701.9" width="14.5" height="14.5" fill="#888000"/><rect x="244.5" y="701.9" width="14.5" height="14.5" fill="#8f8000"/><rect x="258.4" y="701.9" width="14.5" height="14.5" fill="#889900"/><rect x="272.3" y="701.9" width="14.5" height="14.5" fill="#889900"/><rect x="286.2" y="701.9" width="14.5" height="14.5" fill="#888000"/><rect x="300.1" y="701.9" width="14.5" height="14.5" fill="#818000"/><rect x="314.0" y="701.9" width="14.5" height="14.5" fill="#818000"/><rect x="327.9" y="701.9" width="14.5" height="14.5" fill="#888000"/><rect x="341.8" y="701.9" width="14.5" height="14.5" fill="#8c9900"/><rect x="8.2" y="715.8" width="14.5" height="14.5" fill="#869900"/><rect x="22.1" y="715.8" width="14.5" height="14.5" fill="#8d9900"/><rect x="36.0" y="715.8" width="14.5" height="14.5" fill="#849900"/><rect x="49.9" y="715.8" width="14.5" height="14.5" fill="#809900"/><rect x="63.8" y="715.8" width="14.5" height="14.5" fill="#899900"/><rect x="77.7" y="715.8" width="14.5" height="14.5" fill="#8d9900"/><rect x="91.6" y="715.8" width="14.5" height="14.5" fill="#7ab200"/><rect x="105.5" y="715.8" width="14.5" height="14.5" fill="#8d9900"/><rect x="119.4" y="715.8" width="14.5" height="14.5" fill="#919900"/><rect x="133.3" y="715.8" width="14.5" height="14.5" fill="#959900"/><rect x="147.2" y="715.8" width="14.5" height="14.5" fill="#88b200"/><rect x="161.1" y="715.8" width="14.5" height="14.5" fill="#888000"/><rect x="175.0" y="715.8" width="14.5" height="14.5" fill="#888000"/><rect x="188.9" y="715.8" width="14.5" height="14.5" fill="#818000"/><rect x="202.8" y="715.8" width="14.5" height="14.5" fill="#7e8000"/><rect x="216.7" y="715.8" width="14.5" height="14.5" fill="#818000"/><rect x="230.6" y="715.8" width="14.5" height="14.5" fill="#838000"/><rect x="244.5" y="715.8" width="14.5" height="14.5" fill="#838000"/><rect x="258.4" y="715.8" width="14.5" height="14.5" fill="#858000"/><rect x="272.3" y="715.8" width="14.5" height="14.5" fill="#888000"/><rect x="286.2" y="715.8" width="14.5" height="14.5" fill="#858000"/><rect x="300.1" y="715.8" width="14.5" height="14.5" fill="#838000"/><rect x="314.0" y="715.8" width="14.5" height="14.5" fill="#838000"/><rect x="327.9" y="715.8" width="14.5" height="14.5" fill="#889900"/><rect x="341.8" y="715.8" width="14.5" height="14.5" fill="#889900"/><rect x="8.2" y="729.7" width="14.5" height="14.5" fill="#809900"/><rect x="22.1" y="729.7" width="14.5" height="14.5" fill="#899900"/><rect x="36.0" y="729.7" width="14.5" height="14.5" fill="#809900"/><rect x="49.9" y="729.7" width="14.5" height="14.5" fill="#7ab200"/><rect x="63.8" y="729.7" width="14.5" height="14.5" fill="#849900"/><rect x="77.7" y="729.7" width="14.5" height="14.5" fill="#919900"/><rect x="91.6" y="729.7" width="14.5" height="14.5" fill="#809900"/><rect x="105.5" y="729.7" width="14.5" height="14.5" fill="#899900"/><rect x="119.4" y="729.7" width="14.5" height="14.5" fill="#969900"/><rect x="133.3" y="729.7" width="14.5" height="14.5" fill="#959900"/><rect x="147.2" y="729.7" width="14.5" height="14.5" fill="#76b200"/><rect x="161.1" y="729.7" width="14.5" height="14.5" fill="#768000"/><rect x="175.0" y="729.7" width="14.5" height="14.5" fill="#768000"/><rect x="188.9" y="729.7" width="14.5" height="14.5" fill="#768000"/><rect x="202.8" y="729.7" width="14.5" height="14.5" fill="#7a8000"/><rect x="216.7" y="729.7" width="14.5" height="14.5" fill="#7e8000"/><rect x="230.6" y="729.7" width="14.5" height="14.5" fill="#7e8000"/><rect x="244.5" y="729.7" width="14.5" height="14.5" fill="#818000"/><rect x="258.4" y="729.7" width="14.5" height="14.5" fill="#858000"/><rect x="272.3" y="729.7" width="14.5" height="14.5" fill="#968000"/><rect x="286.2" y="729.7" width="14.5" height="14.5" fill="#8f8000"/><rect x="300.1" y="729.7" width="14.5" height="14.5" fill="#8f9900"/><rect x="314.0" y="729.7" width="14.5" height="14.5" fill="#888000"/><rect x="327.9" y="729.7" width="14.5" height="14.5" fill="#968000"/><rect x="341.8" y="729.7" width="14.5" height="14.5" fill="#9c8000"/><rect x="355.7" y="729.7" width="14.5" height="14.5" fill="#968000"/><rect x="8.2" y="743.6" width="14.5" height="14.5" fill="#7ab200"/><rect x="22.1" y="743.6" width="14.5" height="14.5" fill="#6cb200"/><rect x="36.0" y="743.6" width="14.5" height="14.5" fill="#73b200"/><rect x="49.9" y="743.6" width="14.5" height="14.5" fill="#809900"/><rect x="63.8" y="743.6" width="14.5" height="14.5" fill="#73b200"/><rect x="77.7" y="743.6" width="14.5" height="14.5" fill="#8d9900"/><rect x="91.6" y="743.6" width="14.5" height="14.5" fill="#8d9900"/><rect x="105.5" y="743.6" width="14.5" height="14.5" fill="#8d9900"/><rect x="119.4" y="743.6" width="14.5" height="14.5" fill="#8a9900"/><rect x="133.3" y="743.6" width="14.5" height="14.5" fill="#869900"/><rect x="147.2" y="743.6" width="14.5" height="14.5" fill="#76b200"/><rect x="161.1" y="743.6" width="14.5" height="14.5" fill="#768000"/><rect x="175.0" y="743.6" width="14.5" height="14.5" fill="#768000"/><rect x="188.9" y="743.6" width="14.5" height="14.5" fill="#768000"/><rect x="202.8" y="743.6" width="14.5" height="14.5" fill="#778000"/><rect x="216.7" y="743.6" width="14.5" height="14.5" fill="#7a8000"/><rect x="230.6" y="743.6" width="14.5" height="14.5" fill="#7d9900"/><rect x="244.5" y="743.6" width="14.5" height="14.5" fill="#858000"/><rect x="258.4" y="743.6" width="14.5" height="14.5" fill="#889900"/><rect x="272.3" y="743.6" width="14.5" height="14.5" fill="#889900"/><rect x="286.2" y="743.6" width="14.5" height="14.5" fill="#888000"/><rect x="300.1" y="743.6" width="14.5" height="14.5" fill="#8c8000"/><rect x="314.0" y="743.6" width="14.5" height="14.5" fill="#898000"/><rect x="327.9" y="743.6" width="14.5" height="14.5" fill="#8c8000"/><rect x="341.8" y="743.6" width="14.5" height="14.5" fill="#8c8000"/><rect x="355.7" y="743.6" width="14.5" height="14.5" fill="#968000"/><rect x="8.2" y="757.4" width="14.5" height="14.5" fill="#819900"/><rect x="22.1" y="757.4" width="14.5" height="14.5" fill="#7ab200"/><rect x="36.0" y="757.4" width="14.5" height="14.5" fill="#7ab200"/><rect x="49.9" y="757.4" width="14.5" height="14.5" fill="#859900"/><rect x="63.8" y="757.4" width="14.5" height="14.5" fill="#809900"/><rect x="77.7" y="757.4" width="14.5" height="14.5" fill="#849900"/><rect x="91.6" y="757.4" width="14.5" height="14.5" fill="#8d9900"/><rect x="105.5" y="757.4" width="14.5" height="14.5" fill="#8a9900"/><rect x="119.4" y="757.4" width="14.5" height="14.5" fill="#869900"/><rect x="133.3" y="757.4" width="14.5" height="14.5" fill="#879900"/><rect x="147.2" y="757.4" width="14.5" height="14.5" fill="#76b200"/><rect x="161.1" y="757.4" width="14.5" height="14.5" fill="#768000"/><rect x="175.0" y="757.4" width="14.5" height="14.5" fill="#738000"/><rect x="188.9" y="757.4" width="14.5" height="14.5" fill="#768000"/><rect x="202.8" y="757.4" width="14.5" height="14.5" fill="#7a8000"/><rect x="216.7" y="757.4" width="14.5" height="14.5" fill="#7c9900"/><rect x="230.6" y="757.4" width="14.5" height="14.5" fill="#7c9900"/><rect x="244.5" y="757.4" width="14.5" height="14.5" fill="#7c9900"/><rect x="258.4" y="757.4" width="14.5" height="14.5" fill="#819900"/><rect x="272.3" y="757.4" width="14.5" height="14.5" fill="#888000"/><rect x="286.2" y="757.4" width="14.5" height="14.5" fill="#888000"/><rect x="300.1" y="757.4" width="14.5" height="14.5" fill="#888000"/><rect x="314.0" y="757.4" width="14.5" height="14.5" fill="#888000"/><rect x="327.9" y="757.4" width="14.5" height="14.5" fill="#898000"/><rect x="341.8" y="757.4" width="14.5" height="14.5" fill="#8f8000"/><rect x="355.7" y="757.4" width="14.5" height="14.5" fill="#9c8000"/><rect x="8.2" y="771.3" width="14.5" height="14.5" fill="#88b200"/><rect x="22.1" y="771.3" width="14.5" height="14.5" fill="#879900"/><rect x="36.0" y="771.3" width="14.5" height="14.5" fill="#819900"/><rect x="49.9" y="771.3" width="14.5" height="14.5" fill="#809900"/><rect x="63.8" y="771.3" width="14.5" height="14.5" fill="#7eb200"/><rect x="77.7" y="771.3" width="14.5" height="14.5" fill="#7ab200"/><rect x="91.6" y="771.3" width="14.5" height="14.5" fill="#869900"/><rect x="105.5" y="771.3" width="14.5" height="14.5" fill="#809900"/><rect x="119.4" y="771.3" width="14.5" height="14.5" fill="#859900"/><rect x="133.3" y="771.3" width="14.5" height="14.5" fill="#81b200"/><rect x="147.2" y="771.3" width="14.5" height="14.5" fill="#76b200"/><rect x="161.1" y="771.3" width="14.5" height="14.5" fill="#768000"/><rect x="175.0" y="771.3" width="14.5" height="14.5" fill="#768000"/><rect x="188.9" y="771.3" width="14.5" height="14.5" fill="#768000"/><rect x="202.8" y="771.3" width="14.5" height="14.5" fill="#7e9900"/><rect x="216.7" y="771.3" width="14.5" height="14.5" fill="#7c9900"/><rect x="230.6" y="771.3" width="14.5" height="14.5" fill="#7c9900"/><rect x="244.5" y="771.3" width="14.5" height="14.5" fill="#7c9900"/><rect x="258.4" y="771.3" width="14.5" height="14.5" fill="#7c9900"/><rect x="272.3" y="771.3" width="14.5" height="14.5" fill="#858000"/><rect x="286.2" y="771.3" width="14.5" height="14.5" fill="#888000"/><rect x="300.1" y="771.3" width="14.5" height="14.5" fill="#889900"/><rect x="314.0" y="771.3" width="14.5" height="14.5" fill="#889900"/><rect x="327.9" y="771.3" width="14.5" height="14.5" fill="#949900"/><rect x="341.8" y="771.3" width="14.5" height="14.5" fill="#9c8000"/><rect x="355.7" y="771.3" width="14.5" height="14.5" fill="#9c8000"/><rect x="8.2" y="785.2" width="14.5" height="14.5" fill="#7acc00"/><rect x="22.1" y="785.2" width="14.5" height="14.5" fill="#81cc00"/><rect x="36.0" y="785.2" width="14.5" height="14.5" fill="#81cc00"/><rect x="49.9" y="785.2" width="14.5" height="14.5" fill="#88cc00"/><rect x="63.8" y="785.2" width="14.5" height="14.5" fill="#7ecc00"/><rect x="77.7" y="785.2" width="14.5" height="14.5" fill="#819900"/><rect x="91.6" y="785.2" width="14.5" height="14.5" fill="#8fcc00"/><rect x="105.5" y="785.2" width="14.5" height="14.5" fill="#88cc00"/><rect x="119.4" y="785.2" width="14.5" height="14.5" fill="#88cc00"/><rect x="133.3" y="785.2" width="14.5" height="14.5" fill="#8fb200"/><rect x="147.2" y="785.2" width="14.5" height="14.5" fill="#8fb200"/><rect x="161.1" y="785.2" width="14.5" height="14.5" fill="#818000"/><rect x="175.0" y="785.2" width="14.5" height="14.5" fill="#6c8000"/><rect x="188.9" y="785.2" width="14.5" height="14.5" fill="#788000"/><rect x="202.8" y="785.2" width="14.5" height="14.5" fill="#7e8000"/><rect x="216.7" y="785.2" width="14.5" height="14.5" fill="#7e8000"/><rect x="230.6" y="785.2" width="14.5" height="14.5" fill="#7e8000"/><rect x="244.5" y="785.2" width="14.5" height="14.5" fill="#8d9900"/><rect x="258.4" y="785.2" width="14.5" height="14.5" fill="#8f8000"/><rect x="272.3" y="785.2" width="14.5" height="14.5" fill="#888000"/><rect x="286.2" y="785.2" width="14.5" height="14.5" fill="#888000"/><rect x="300.1" y="785.2" width="14.5" height="14.5" fill="#8a9900"/><rect x="314.0" y="785.2" width="14.5" height="14.5" fill="#889900"/><rect x="327.9" y="785.2" width="14.5" height="14.5" fill="#889900"/><rect x="341.8" y="785.2" width="14.5" height="14.5" fill="#929900"/><rect x="355.7" y="785.2" width="14.5" height="14.5" fill="#9c8000"/><rect x="8.2" y="799.1" width="14.5" height="14.5" fill="#5ecc00"/><rect x="22.1" y="799.1" width="14.5" height="14.5" fill="#73cc00"/><rect x="36.0" y="799.1" width="14.5" height="14.5" fill="#81cc00"/><rect x="49.9" y="799.1" width="14.5" height="14.5" fill="#81cc00"/><rect x="63.8" y="799.1" width="14.5" height="14.5" fill="#7acc00"/><rect x="77.7" y="799.1" width="14.5" height="14.5" fill="#7acc00"/><rect x="91.6" y="799.1" width="14.5" height="14.5" fill="#7acc00"/><rect x="105.5" y="799.1" width="14.5" height="14.5" fill="#7acc00"/><rect x="119.4" y="799.1" width="14.5" height="14.5" fill="#81cc00"/><rect x="133.3" y="799.1" width="14.5" height="14.5" fill="#81b200"/><rect x="147.2" y="799.1" width="14.5" height="14.5" fill="#889900"/><rect x="161.1" y="799.1" width="14.5" height="14.5" fill="#738000"/><rect x="175.0" y="799.1" width="14.5" height="14.5" fill="#688000"/><rect x="188.9" y="799.1" width="14.5" height="14.5" fill="#768000"/><rect x="202.8" y="799.1" width="14.5" height="14.5" fill="#7a8000"/><rect x="216.7" y="799.1" width="14.5" height="14.5" fill="#7b8000"/><rect x="230.6" y="799.1" width="14.5" height="14.5" fill="#7e8000"/><rect x="244.5" y="799.1" width="14.5" height="14.5" fill="#7e9900"/><rect x="258.4" y="799.1" width="14.5" height="14.5" fill="#7e9900"/><rect x="272.3" y="799.1" width="14.5" height="14.5" fill="#7e9900"/><rect x="286.2" y="799.1" width="14.5" height="14.5" fill="#888000"/><rect x="300.1" y="799.1" width="14.5" height="14.5" fill="#889900"/><rect x="314.0" y="799.1" width="14.5" height="14.5" fill="#888000"/><rect x="327.9" y="799.1" width="14.5" height="14.5" fill="#888000"/><rect x="341.8" y="799.1" width="14.5" height="14.5" fill="#889900"/><rect x="355.7" y="799.1" width="14.5" height="14.5" fill="#8b9900"/><rect x="8.2" y="813.0" width="14.5" height="14.5" fill="#6ccc00"/><rect x="22.1" y="813.0" width="14.5" height="14.5" fill="#73cc00"/><rect x="36.0" y="813.0" width="14.5" height="14.5" fill="#7acc00"/><rect x="49.9" y="813.0" width="14.5" height="14.5" fill="#7acc00"/><rect x="63.8" y="813.0" width="14.5" height="14.5" fill="#7acc00"/><rect x="77.7" y="813.0" width="14.5" height="14.5" fill="#7ecc00"/><rect x="91.6" y="813.0" width="14.5" height="14.5" fill="#7acc00"/><rect x="105.5" y="813.0" width="14.5" height="14.5" fill="#7acc00"/><rect x="119.4" y="813.0" width="14.5" height="14.5" fill="#81cc00"/><rect x="133.3" y="813.0" width="14.5" height="14.5" fill="#889900"/><rect x="147.2" y="813.0" width="14.5" height="14.5" fill="#81b200"/><rect x="161.1" y="813.0" width="14.5" height="14.5" fill="#738000"/><rect x="175.0" y="813.0" width="14.5" height="14.5" fill="#708000"/><rect x="188.9" y="813.0" width="14.5" height="14.5" fill="#778000"/><rect x="202.8" y="813.0" width="14.5" height="14.5" fill="#788000"/><rect x="216.7" y="813.0" width="14.5" height="14.5" fill="#7a8000"/><rect x="230.6" y="813.0" width="14.5" height="14.5" fill="#7e8000"/><rect x="244.5" y="813.0" width="14.5" height="14.5" fill="#7e9900"/><rect x="258.4" y="813.0" width="14.5" height="14.5" fill="#7e9900"/><rect x="272.3" y="813.0" width="14.5" height="14.5" fill="#839900"/><rect x="286.2" y="813.0" width="14.5" height="14.5" fill="#818000"/><rect x="300.1" y="813.0" width="14.5" height="14.5" fill="#818000"/><rect x="314.0" y="813.0" width="14.5" height="14.5" fill="#858000"/><rect x="327.9" y="813.0" width="14.5" height="14.5" fill="#889900"/><rect x="341.8" y="813.0" width="14.5" height="14.5" fill="#8d9900"/><rect x="355.7" y="813.0" width="14.5" height="14.5" fill="#9b9900"/><rect x="8.2" y="826.8" width="14.5" height="14.5" fill="#7acc00"/><rect x="22.1" y="826.8" width="14.5" height="14.5" fill="#7acc00"/><rect x="36.0" y="826.8" width="14.5" height="14.5" fill="#81cc00"/><rect x="49.9" y="826.8" width="14.5" height="14.5" fill="#81cc00"/><rect x="63.8" y="826.8" width="14.5" height="14.5" fill="#7acc00"/><rect x="77.7" y="826.8" width="14.5" height="14.5" fill="#7acc00"/><rect x="91.6" y="826.8" width="14.5" height="14.5" fill="#7acc00"/><rect x="105.5" y="826.8" width="14.5" height="14.5" fill="#7acc00"/><rect x="119.4" y="826.8" width="14.5" height="14.5" fill="#889900"/><rect x="133.3" y="826.8" width="14.5" height="14.5" fill="#88b200"/><rect x="147.2" y="826.8" width="14.5" height="14.5" fill="#81b200"/><rect x="-19.6" y="7.9" width="14.5" height="14.5" fill="#704600"/><rect x="-5.7" y="7.9" width="14.5" height="14.5" fill="#704600"/><rect x="8.2" y="7.9" width="14.5" height="14.5" fill="#704600"/><rect x="22.1" y="7.9" width="14.5" height="14.5" fill="#708c00"/><rect x="36.0" y="7.9" width="14.5" height="14.5" fill="#708c00"/><rect x="49.9" y="7.9" width="14.5" height="14.5" fill="#798c00"/><rect x="63.8" y="7.9" width="14.5" height="14.5" fill="#798c00"/><rect x="77.7" y="7.9" width="14.5" height="14.5" fill="#798c00"/><rect x="91.6" y="7.9" width="14.5" height="14.5" fill="#758c00"/><rect x="105.5" y="7.9" width="14.5" height="14.5" fill="#768c00"/><rect x="119.4" y="7.9" width="14.5" height="14.5" fill="#768c00"/><rect x="133.3" y="7.9" width="14.5" height="14.5" fill="#788c00"/><rect x="147.2" y="7.9" width="14.5" height="14.5" fill="#788c00"/><rect x="161.1" y="7.9" width="14.5" height="14.5" fill="#768c00"/><rect x="175.0" y="7.9" width="14.5" height="14.5" fill="#768c00"/><rect x="188.9" y="7.9" width="14.5" height="14.5" fill="#788c00"/><rect x="202.8" y="7.9" width="14.5" height="14.5" fill="#818c00"/><rect x="216.7" y="7.9" width="14.5" height="14.5" fill="#828c00"/><rect x="230.6" y="7.9" width="14.5" height="14.5" fill="#838c00"/><rect x="244.5" y="7.9" width="14.5" height="14.5" fill="#868c00"/><rect x="258.4" y="7.9" width="14.5" height="14.5" fill="#8c8c00"/><rect x="272.3" y="7.9" width="14.5" height="14.5" fill="#8f8c00"/><rect x="286.2" y="7.9" width="14.5" height="14.5" fill="#968c00"/><rect x="300.1" y="7.9" width="14.5" height="14.5" fill="#968c00"/><rect x="314.0" y="7.9" width="14.5" height="14.5" fill="#968c00"/><rect x="327.9" y="7.9" width="14.5" height="14.5" fill="#968c00"/><rect x="341.8" y="7.9" width="14.5" height="14.5" fill="#968c00"/><rect x="355.7" y="7.9" width="14.5" height="14.5" fill="#968c00"/><rect x="369.6" y="7.9" width="14.5" height="14.5" fill="#968c00"/><rect x="383.5" y="7.9" width="14.5" height="14.5" fill="#968c00"/><rect x="397.4" y="7.9" width="14.5" height="14.5" fill="#968c00"/><rect x="411.3" y="7.9" width="14.5" height="14.5" fill="#968c00"/><rect x="-19.6" y="21.8" width="14.5" height="14.5" fill="#704600"/><rect x="-5.7" y="21.8" width="14.5" height="14.5" fill="#704600"/><rect x="8.2" y="21.8" width="14.5" height="14.5" fill="#704600"/><rect x="22.1" y="21.8" width="14.5" height="14.5" fill="#708c00"/><rect x="36.0" y="21.8" width="14.5" height="14.5" fill="#708c00"/><rect x="49.9" y="21.8" width="14.5" height="14.5" fill="#798c00"/><rect x="63.8" y="21.8" width="14.5" height="14.5" fill="#798c00"/><rect x="77.7" y="21.8" width="14.5" height="14.5" fill="#798c00"/><rect x="91.6" y="21.8" width="14.5" height="14.5" fill="#758c00"/><rect x="105.5" y="21.8" width="14.5" height="14.5" fill="#768c00"/><rect x="119.4" y="21.8" width="14.5" height="14.5" fill="#768c00"/><rect x="133.3" y="21.8" width="14.5" height="14.5" fill="#788c00"/><rect x="147.2" y="21.8" width="14.5" height="14.5" fill="#788c00"/><rect x="161.1" y="21.8" width="14.5" height="14.5" fill="#768c00"/><rect x="175.0" y="21.8" width="14.5" height="14.5" fill="#768c00"/><rect x="188.9" y="21.8" width="14.5" height="14.5" fill="#788c00"/><rect x="202.8" y="21.8" width="14.5" height="14.5" fill="#818c00"/><rect x="216.7" y="21.8" width="14.5" height="14.5" fill="#828c00"/><rect x="230.6" y="21.8" width="14.5" height="14.5" fill="#838c00"/><rect x="244.5" y="21.8" width="14.5" height="14.5" fill="#868c00"/><rect x="258.4" y="21.8" width="14.5" height="14.5" fill="#8c8c00"/><rect x="272.3" y="21.8" width="14.5" height="14.5" fill="#8f8c00"/><rect x="286.2" y="21.8" width="14.5" height="14.5" fill="#968c00"/><rect x="300.1" y="21.8" width="14.5" height="14.5" fill="#968c00"/><rect x="314.0" y="21.8" width="14.5" height="14.5" fill="#968c00"/><rect x="327.9" y="21.8" width="14.5" height="14.5" fill="#968c00"/><rect x="341.8" y="21.8" width="14.5" height="14.5" fill="#968c00"/><rect x="355.7" y="21.8" width="14.5" height="14.5" fill="#968c00"/><rect x="369.6" y="21.8" width="14.5" height="14.5" fill="#968c00"/><rect x="383.5" y="21.8" width="14.5" height="14.5" fill="#968c00"/><rect x="397.4" y="21.8" width="14.5" height="14.5" fill="#968c00"/><rect x="411.3" y="21.8" width="14.5" height="14.5" fill="#968c00"/><rect x="-19.6" y="35.7" width="14.5" height="14.5" fill="#704600"/><rect x="-5.7" y="35.7" width="14.5" height="14.5" fill="#704600"/><rect x="22.1" y="35.7" width="14.5" height="14.5" fill="#708c00"/><rect x="36.0" y="35.7" width="14.5" height="14.5" fill="#708c00"/><rect x="49.9" y="35.7" width="14.5" height="14.5" fill="#798c00"/><rect x="63.8" y="35.7" width="14.5" height="14.5" fill="#798c00"/><rect x="300.1" y="35.7" width="14.5" height="14.5" fill="#968c00"/><rect x="314.0" y="35.7" width="14.5" height="14.5" fill="#968c00"/><rect x="327.9" y="35.7" width="14.5" height="14.5" fill="#968c00"/><rect x="341.8" y="35.7" width="14.5" height="14.5" fill="#968c00"/><rect x="355.7" y="35.7" width="14.5" height="14.5" fill="#968c00"/><rect x="369.6" y="35.7" width="14.5" height="14.5" fill="#968c00"/><rect x="383.5" y="35.7" width="14.5" height="14.5" fill="#968c00"/><rect x="397.4" y="35.7" width="14.5" height="14.5" fill="#968c00"/><rect x="411.3" y="35.7" width="14.5" height="14.5" fill="#968c00"/><rect x="-19.6" y="49.6" width="14.5" height="14.5" fill="#704600"/><rect x="-5.7" y="49.6" width="14.5" height="14.5" fill="#704600"/><rect x="22.1" y="49.6" width="14.5" height="14.5" fill="#708c00"/><rect x="36.0" y="49.6" width="14.5" height="14.5" fill="#708c00"/><rect x="49.9" y="49.6" width="14.5" height="14.5" fill="#738c00"/><rect x="63.8" y="49.6" width="14.5" height="14.5" fill="#738c00"/><rect x="300.1" y="49.6" width="14.5" height="14.5" fill="#968c00"/><rect x="314.0" y="49.6" width="14.5" height="14.5" fill="#968c00"/><rect x="327.9" y="49.6" width="14.5" height="14.5" fill="#968c00"/><rect x="341.8" y="49.6" width="14.5" height="14.5" fill="#968c00"/><rect x="355.7" y="49.6" width="14.5" height="14.5" fill="#968c00"/><rect x="369.6" y="49.6" width="14.5" height="14.5" fill="#968c00"/><rect x="383.5" y="49.6" width="14.5" height="14.5" fill="#968c00"/><rect x="397.4" y="49.6" width="14.5" height="14.5" fill="#968c00"/><rect x="411.3" y="49.6" width="14.5" height="14.5" fill="#968c00"/><rect x="-19.6" y="63.4" width="14.5" height="14.5" fill="#704600"/><rect x="-5.7" y="63.4" width="14.5" height="14.5" fill="#704600"/><rect x="22.1" y="63.4" width="14.5" height="14.5" fill="#708c00"/><rect x="36.0" y="63.4" width="14.5" height="14.5" fill="#708c00"/><rect x="49.9" y="63.4" width="14.5" height="14.5" fill="#718c00"/><rect x="63.8" y="63.4" width="14.5" height="14.5" fill="#718c00"/><rect x="300.1" y="63.4" width="14.5" height="14.5" fill="#968c00"/><rect x="314.0" y="63.4" width="14.5" height="14.5" fill="#968c00"/><rect x="327.9" y="63.4" width="14.5" height="14.5" fill="#968c00"/><rect x="341.8" y="63.4" width="14.5" height="14.5" fill="#968c00"/><rect x="355.7" y="63.4" width="14.5" height="14.5" fill="#968c00"/><rect x="369.6" y="63.4" width="14.5" height="14.5" fill="#968c00"/><rect x="383.5" y="63.4" width="14.5" height="14.5" fill="#968c00"/><rect x="397.4" y="63.4" width="14.5" height="14.5" fill="#968c00"/><rect x="411.3" y="63.4" width="14.5" height="14.5" fill="#968c00"/><rect x="-19.6" y="77.3" width="14.5" height="14.5" fill="#704600"/><rect x="-5.7" y="77.3" width="14.5" height="14.5" fill="#704600"/><rect x="22.1" y="77.3" width="14.5" height="14.5" fill="#708c00"/><rect x="36.0" y="77.3" width="14.5" height="14.5" fill="#708c00"/><rect x="49.9" y="77.3" width="14.5" height="14.5" fill="#6a8c00"/><rect x="63.8" y="77.3" width="14.5" height="14.5" fill="#6a8c00"/><rect x="300.1" y="77.3" width="14.5" height="14.5" fill="#978c00"/><rect x="314.0" y="77.3" width="14.5" height="14.5" fill="#978c00"/><rect x="327.9" y="77.3" width="14.5" height="14.5" fill="#978c00"/><rect x="341.8" y="77.3" width="14.5" height="14.5" fill="#978c00"/><rect x="355.7" y="77.3" width="14.5" height="14.5" fill="#978c00"/><rect x="369.6" y="77.3" width="14.5" height="14.5" fill="#978c00"/><rect x="383.5" y="77.3" width="14.5" height="14.5" fill="#978c00"/><rect x="397.4" y="77.3" width="14.5" height="14.5" fill="#978c00"/><rect x="411.3" y="77.3" width="14.5" height="14.5" fill="#978c00"/><rect x="-19.6" y="91.2" width="14.5" height="14.5" fill="#664600"/><rect x="-5.7" y="91.2" width="14.5" height="14.5" fill="#664600"/><rect x="22.1" y="91.2" width="14.5" height="14.5" fill="#666000"/><rect x="36.0" y="91.2" width="14.5" height="14.5" fill="#666000"/><rect x="49.9" y="91.2" width="14.5" height="14.5" fill="#6e6000"/><rect x="63.8" y="91.2" width="14.5" height="14.5" fill="#6e6000"/><rect x="300.1" y="91.2" width="14.5" height="14.5" fill="#948000"/><rect x="314.0" y="91.2" width="14.5" height="14.5" fill="#948000"/><rect x="327.9" y="91.2" width="14.5" height="14.5" fill="#948000"/><rect x="341.8" y="91.2" width="14.5" height="14.5" fill="#948000"/><rect x="355.7" y="91.2" width="14.5" height="14.5" fill="#948000"/><rect x="369.6" y="91.2" width="14.5" height="14.5" fill="#948000"/><rect x="383.5" y="91.2" width="14.5" height="14.5" fill="#948000"/><rect x="397.4" y="91.2" width="14.5" height="14.5" fill="#948000"/><rect x="411.3" y="91.2" width="14.5" height="14.5" fill="#948000"/><rect x="-19.6" y="105.1" width="14.5" height="14.5" fill="#664600"/><rect x="-5.7" y="105.1" width="14.5" height="14.5" fill="#664600"/><rect x="22.1" y="105.1" width="14.5" height="14.5" fill="#666000"/><rect x="36.0" y="105.1" width="14.5" height="14.5" fill="#666000"/><rect x="49.9" y="105.1" width="14.5" height="14.5" fill="#6e6000"/><rect x="63.8" y="105.1" width="14.5" height="14.5" fill="#6e6000"/><rect x="300.1" y="105.1" width="14.5" height="14.5" fill="#968000"/><rect x="314.0" y="105.1" width="14.5" height="14.5" fill="#968000"/><rect x="327.9" y="105.1" width="14.5" height="14.5" fill="#968000"/><rect x="341.8" y="105.1" width="14.5" height="14.5" fill="#968000"/><rect x="355.7" y="105.1" width="14.5" height="14.5" fill="#968000"/><rect x="369.6" y="105.1" width="14.5" height="14.5" fill="#968000"/><rect x="383.5" y="105.1" width="14.5" height="14.5" fill="#968000"/><rect x="397.4" y="105.1" width="14.5" height="14.5" fill="#968000"/><rect x="411.3" y="105.1" width="14.5" height="14.5" fill="#968000"/><rect x="-19.6" y="119.0" width="14.5" height="14.5" fill="#664600"/><rect x="-5.7" y="119.0" width="14.5" height="14.5" fill="#664600"/><rect x="22.1" y="119.0" width="14.5" height="14.5" fill="#666000"/><rect x="36.0" y="119.0" width="14.5" height="14.5" fill="#666000"/><rect x="49.9" y="119.0" width="14.5" height="14.5" fill="#6f6000"/><rect x="63.8" y="119.0" width="14.5" height="14.5" fill="#6f6000"/><rect x="300.1" y="119.0" width="14.5" height="14.5" fill="#968000"/><rect x="314.0" y="119.0" width="14.5" height="14.5" fill="#968000"/><rect x="327.9" y="119.0" width="14.5" height="14.5" fill="#968000"/><rect x="341.8" y="119.0" width="14.5" height="14.5" fill="#968000"/><rect x="355.7" y="119.0" width="14.5" height="14.5" fill="#968000"/><rect x="369.6" y="119.0" width="14.5" height="14.5" fill="#968000"/><rect x="383.5" y="119.0" width="14.5" height="14.5" fill="#968000"/><rect x="397.4" y="119.0" width="14.5" height="14.5" fill="#968000"/><rect x="411.3" y="119.0" width="14.5" height="14.5" fill="#9a8000"/><rect x="-19.6" y="132.8" width="14.5" height="14.5" fill="#664600"/><rect x="-5.7" y="132.8" width="14.5" height="14.5" fill="#664600"/><rect x="22.1" y="132.8" width="14.5" height="14.5" fill="#666000"/><rect x="36.0" y="132.8" width="14.5" height="14.5" fill="#666000"/><rect x="49.9" y="132.8" width="14.5" height="14.5" fill="#716000"/><rect x="63.8" y="132.8" width="14.5" height="14.5" fill="#716000"/><rect x="300.1" y="132.8" width="14.5" height="14.5" fill="#9c8000"/><rect x="314.0" y="132.8" width="14.5" height="14.5" fill="#9c8000"/><rect x="327.9" y="132.8" width="14.5" height="14.5" fill="#9c8000"/><rect x="341.8" y="132.8" width="14.5" height="14.5" fill="#9c8000"/><rect x="355.7" y="132.8" width="14.5" height="14.5" fill="#9c8000"/><rect x="369.6" y="132.8" width="14.5" height="14.5" fill="#9a8000"/><rect x="383.5" y="132.8" width="14.5" height="14.5" fill="#9a8000"/><rect x="397.4" y="132.8" width="14.5" height="14.5" fill="#9a8000"/><rect x="411.3" y="132.8" width="14.5" height="14.5" fill="#9a8000"/><rect x="-19.6" y="146.7" width="14.5" height="14.5" fill="#664600"/><rect x="-5.7" y="146.7" width="14.5" height="14.5" fill="#664600"/><rect x="22.1" y="146.7" width="14.5" height="14.5" fill="#666000"/><rect x="36.0" y="146.7" width="14.5" height="14.5" fill="#666000"/><rect x="49.9" y="146.7" width="14.5" height="14.5" fill="#756000"/><rect x="63.8" y="146.7" width="14.5" height="14.5" fill="#756000"/><rect x="300.1" y="146.7" width="14.5" height="14.5" fill="#978000"/><rect x="314.0" y="146.7" width="14.5" height="14.5" fill="#978000"/><rect x="327.9" y="146.7" width="14.5" height="14.5" fill="#9a8000"/><rect x="341.8" y="146.7" width="14.5" height="14.5" fill="#9a8000"/><rect x="355.7" y="146.7" width="14.5" height="14.5" fill="#9a8000"/><rect x="369.6" y="146.7" width="14.5" height="14.5" fill="#9a8000"/><rect x="383.5" y="146.7" width="14.5" height="14.5" fill="#9a8000"/><rect x="397.4" y="146.7" width="14.5" height="14.5" fill="#9a8000"/><rect x="411.3" y="146.7" width="14.5" height="14.5" fill="#9a8000"/><rect x="-19.6" y="160.6" width="14.5" height="14.5" fill="#6c4600"/><rect x="-5.7" y="160.6" width="14.5" height="14.5" fill="#6c4600"/><rect x="22.1" y="160.6" width="14.5" height="14.5" fill="#6c6000"/><rect x="36.0" y="160.6" width="14.5" height="14.5" fill="#6c6000"/><rect x="49.9" y="160.6" width="14.5" height="14.5" fill="#786000"/><rect x="63.8" y="160.6" width="14.5" height="14.5" fill="#786000"/><rect x="300.1" y="160.6" width="14.5" height="14.5" fill="#908000"/><rect x="314.0" y="160.6" width="14.5" height="14.5" fill="#9a8000"/><rect x="327.9" y="160.6" width="14.5" height="14.5" fill="#9a8000"/><rect x="341.8" y="160.6" width="14.5" height="14.5" fill="#9a8000"/><rect x="355.7" y="160.6" width="14.5" height="14.5" fill="#9a8000"/><rect x="369.6" y="160.6" width="14.5" height="14.5" fill="#9a8000"/><rect x="383.5" y="160.6" width="14.5" height="14.5" fill="#9a8000"/><rect x="397.4" y="160.6" width="14.5" height="14.5" fill="#9a8000"/><rect x="411.3" y="160.6" width="14.5" height="14.5" fill="#9a8000"/><rect x="-19.6" y="174.5" width="14.5" height="14.5" fill="#6c4600"/><rect x="-5.7" y="174.5" width="14.5" height="14.5" fill="#6c4600"/><rect x="22.1" y="174.5" width="14.5" height="14.5" fill="#6c6000"/><rect x="36.0" y="174.5" width="14.5" height="14.5" fill="#6c6000"/><rect x="49.9" y="174.5" width="14.5" height="14.5" fill="#6e6000"/><rect x="63.8" y="174.5" width="14.5" height="14.5" fill="#6e6000"/><rect x="314.0" y="174.5" width="14.5" height="14.5" fill="#9a8000"/><rect x="327.9" y="174.5" width="14.5" height="14.5" fill="#9a8000"/><rect x="341.8" y="174.5" width="14.5" height="14.5" fill="#9a8000"/><rect x="355.7" y="174.5" width="14.5" height="14.5" fill="#9a8000"/><rect x="369.6" y="174.5" width="14.5" height="14.5" fill="#9a8000"/><rect x="383.5" y="174.5" width="14.5" height="14.5" fill="#9a8000"/><rect x="397.4" y="174.5" width="14.5" height="14.5" fill="#9a8000"/><rect x="411.3" y="174.5" width="14.5" height="14.5" fill="#9a8000"/><rect x="-19.6" y="188.4" width="14.5" height="14.5" fill="#6d4600"/><rect x="-5.7" y="188.4" width="14.5" height="14.5" fill="#6d4600"/><rect x="22.1" y="188.4" width="14.5" height="14.5" fill="#6d6000"/><rect x="36.0" y="188.4" width="14.5" height="14.5" fill="#6d6000"/><rect x="49.9" y="188.4" width="14.5" height="14.5" fill="#716000"/><rect x="63.8" y="188.4" width="14.5" height="14.5" fill="#716000"/><rect x="314.0" y="188.4" width="14.5" height="14.5" fill="#9c8000"/><rect x="327.9" y="188.4" width="14.5" height="14.5" fill="#9c8000"/><rect x="341.8" y="188.4" width="14.5" height="14.5" fill="#9c8000"/><rect x="355.7" y="188.4" width="14.5" height="14.5" fill="#9c8000"/><rect x="369.6" y="188.4" width="14.5" height="14.5" fill="#9c8000"/><rect x="383.5" y="188.4" width="14.5" height="14.5" fill="#9c8000"/><rect x="397.4" y="188.4" width="14.5" height="14.5" fill="#9c8000"/><rect x="411.3" y="188.4" width="14.5" height="14.5" fill="#9c8000"/><rect x="-19.6" y="202.2" width="14.5" height="14.5" fill="#7ad900"/><rect x="-5.7" y="202.2" width="14.5" height="14.5" fill="#7ad900"/><rect x="22.1" y="202.2" width="14.5" height="14.5" fill="#7a6000"/><rect x="36.0" y="202.2" width="14.5" height="14.5" fill="#7a6000"/><rect x="49.9" y="202.2" width="14.5" height="14.5" fill="#766000"/><rect x="63.8" y="202.2" width="14.5" height="14.5" fill="#766000"/><rect x="314.0" y="202.2" width="14.5" height="14.5" fill="#a58000"/><rect x="327.9" y="202.2" width="14.5" height="14.5" fill="#a58000"/><rect x="341.8" y="202.2" width="14.5" height="14.5" fill="#a58000"/><rect x="355.7" y="202.2" width="14.5" height="14.5" fill="#a58000"/><rect x="369.6" y="202.2" width="14.5" height="14.5" fill="#a58000"/><rect x="383.5" y="202.2" width="14.5" height="14.5" fill="#a58000"/><rect x="397.4" y="202.2" width="14.5" height="14.5" fill="#a58000"/><rect x="411.3" y="202.2" width="14.5" height="14.5" fill="#a58000"/><rect x="-19.6" y="216.1" width="14.5" height="14.5" fill="#7bd900"/><rect x="-5.7" y="216.1" width="14.5" height="14.5" fill="#7bd900"/><rect x="22.1" y="216.1" width="14.5" height="14.5" fill="#7b6000"/><rect x="36.0" y="216.1" width="14.5" height="14.5" fill="#7b6000"/><rect x="49.9" y="216.1" width="14.5" height="14.5" fill="#7e6000"/><rect x="63.8" y="216.1" width="14.5" height="14.5" fill="#7e6000"/><rect x="314.0" y="216.1" width="14.5" height="14.5" fill="#9c8000"/><rect x="327.9" y="216.1" width="14.5" height="14.5" fill="#9c8000"/><rect x="341.8" y="216.1" width="14.5" height="14.5" fill="#9c8000"/><rect x="355.7" y="216.1" width="14.5" height="14.5" fill="#9c8000"/><rect x="369.6" y="216.1" width="14.5" height="14.5" fill="#9c8000"/><rect x="383.5" y="216.1" width="14.5" height="14.5" fill="#9c8000"/><rect x="397.4" y="216.1" width="14.5" height="14.5" fill="#9c8000"/><rect x="411.3" y="216.1" width="14.5" height="14.5" fill="#9c8000"/><rect x="-19.6" y="230.0" width="14.5" height="14.5" fill="#85d900"/><rect x="-5.7" y="230.0" width="14.5" height="14.5" fill="#85d900"/><rect x="22.1" y="230.0" width="14.5" height="14.5" fill="#858000"/><rect x="36.0" y="230.0" width="14.5" height="14.5" fill="#858000"/><rect x="49.9" y="230.0" width="14.5" height="14.5" fill="#718000"/><rect x="63.8" y="230.0" width="14.5" height="14.5" fill="#718000"/><rect x="314.0" y="230.0" width="14.5" height="14.5" fill="#9a8000"/><rect x="327.9" y="230.0" width="14.5" height="14.5" fill="#9a8000"/><rect x="341.8" y="230.0" width="14.5" height="14.5" fill="#9a8000"/><rect x="355.7" y="230.0" width="14.5" height="14.5" fill="#9a8000"/><rect x="369.6" y="230.0" width="14.5" height="14.5" fill="#9a8000"/><rect x="383.5" y="230.0" width="14.5" height="14.5" fill="#9a8000"/><rect x="397.4" y="230.0" width="14.5" height="14.5" fill="#9a8000"/><rect x="411.3" y="230.0" width="14.5" height="14.5" fill="#9a8000"/><rect x="-19.6" y="243.9" width="14.5" height="14.5" fill="#85d900"/><rect x="-5.7" y="243.9" width="14.5" height="14.5" fill="#85d900"/><rect x="22.1" y="243.9" width="14.5" height="14.5" fill="#858000"/><rect x="36.0" y="243.9" width="14.5" height="14.5" fill="#858000"/><rect x="49.9" y="243.9" width="14.5" height="14.5" fill="#708000"/><rect x="63.8" y="243.9" width="14.5" height="14.5" fill="#708000"/><rect x="314.0" y="243.9" width="14.5" height="14.5" fill="#b18000"/><rect x="327.9" y="243.9" width="14.5" height="14.5" fill="#b18000"/><rect x="341.8" y="243.9" width="14.5" height="14.5" fill="#b18000"/><rect x="355.7" y="243.9" width="14.5" height="14.5" fill="#b18000"/><rect x="369.6" y="243.9" width="14.5" height="14.5" fill="#b18000"/><rect x="383.5" y="243.9" width="14.5" height="14.5" fill="#b18000"/><rect x="397.4" y="243.9" width="14.5" height="14.5" fill="#b18000"/><rect x="411.3" y="243.9" width="14.5" height="14.5" fill="#b18000"/><rect x="-19.6" y="257.8" width="14.5" height="14.5" fill="#83d900"/><rect x="-5.7" y="257.8" width="14.5" height="14.5" fill="#83d900"/><rect x="22.1" y="257.8" width="14.5" height="14.5" fill="#838000"/><rect x="36.0" y="257.8" width="14.5" height="14.5" fill="#838000"/><rect x="49.9" y="257.8" width="14.5" height="14.5" fill="#6c8000"/><rect x="63.8" y="257.8" width="14.5" height="14.5" fill="#6c8000"/><rect x="314.0" y="257.8" width="14.5" height="14.5" fill="#aa8000"/><rect x="327.9" y="257.8" width="14.5" height="14.5" fill="#aa8000"/><rect x="341.8" y="257.8" width="14.5" height="14.5" fill="#aa8000"/><rect x="355.7" y="257.8" width="14.5" height="14.5" fill="#aa8000"/><rect x="369.6" y="257.8" width="14.5" height="14.5" fill="#aa8000"/><rect x="383.5" y="257.8" width="14.5" height="14.5" fill="#aa8000"/><rect x="397.4" y="257.8" width="14.5" height="14.5" fill="#aa8000"/><rect x="411.3" y="257.8" width="14.5" height="14.5" fill="#aa8000"/><rect x="-19.6" y="271.6" width="14.5" height="14.5" fill="#68d900"/><rect x="-5.7" y="271.6" width="14.5" height="14.5" fill="#68d900"/><rect x="22.1" y="271.6" width="14.5" height="14.5" fill="#688000"/><rect x="36.0" y="271.6" width="14.5" height="14.5" fill="#688000"/><rect x="49.9" y="271.6" width="14.5" height="14.5" fill="#6d8000"/><rect x="63.8" y="271.6" width="14.5" height="14.5" fill="#6d8000"/><rect x="314.0" y="271.6" width="14.5" height="14.5" fill="#a68000"/><rect x="327.9" y="271.6" width="14.5" height="14.5" fill="#a68000"/><rect x="341.8" y="271.6" width="14.5" height="14.5" fill="#a68000"/><rect x="355.7" y="271.6" width="14.5" height="14.5" fill="#a68000"/><rect x="369.6" y="271.6" width="14.5" height="14.5" fill="#a68000"/><rect x="383.5" y="271.6" width="14.5" height="14.5" fill="#b08000"/><rect x="397.4" y="271.6" width="14.5" height="14.5" fill="#b08000"/><rect x="411.3" y="271.6" width="14.5" height="14.5" fill="#b08000"/><rect x="-19.6" y="285.5" width="14.5" height="14.5" fill="#65d900"/><rect x="-5.7" y="285.5" width="14.5" height="14.5" fill="#65d900"/><rect x="22.1" y="285.5" width="14.5" height="14.5" fill="#658000"/><rect x="36.0" y="285.5" width="14.5" height="14.5" fill="#658000"/><rect x="49.9" y="285.5" width="14.5" height="14.5" fill="#7a8000"/><rect x="63.8" y="285.5" width="14.5" height="14.5" fill="#7a8000"/><rect x="314.0" y="285.5" width="14.5" height="14.5" fill="#a88000"/><rect x="327.9" y="285.5" width="14.5" height="14.5" fill="#a88000"/><rect x="341.8" y="285.5" width="14.5" height="14.5" fill="#b08000"/><rect x="355.7" y="285.5" width="14.5" height="14.5" fill="#b08000"/><rect x="369.6" y="285.5" width="14.5" height="14.5" fill="#b08000"/><rect x="383.5" y="285.5" width="14.5" height="14.5" fill="#b08000"/><rect x="397.4" y="285.5" width="14.5" height="14.5" fill="#b08000"/><rect x="411.3" y="285.5" width="14.5" height="14.5" fill="#b08000"/><rect x="-19.6" y="299.4" width="14.5" height="14.5" fill="#81d900"/><rect x="-5.7" y="299.4" width="14.5" height="14.5" fill="#81d900"/><rect x="22.1" y="299.4" width="14.5" height="14.5" fill="#818000"/><rect x="36.0" y="299.4" width="14.5" height="14.5" fill="#818000"/><rect x="49.9" y="299.4" width="14.5" height="14.5" fill="#7e8000"/><rect x="63.8" y="299.4" width="14.5" height="14.5" fill="#7e8000"/><rect x="314.0" y="299.4" width="14.5" height="14.5" fill="#aa8000"/><rect x="327.9" y="299.4" width="14.5" height="14.5" fill="#b08000"/><rect x="341.8" y="299.4" width="14.5" height="14.5" fill="#b08000"/><rect x="355.7" y="299.4" width="14.5" height="14.5" fill="#b08000"/><rect x="369.6" y="299.4" width="14.5" height="14.5" fill="#b08000"/><rect x="383.5" y="299.4" width="14.5" height="14.5" fill="#b08000"/><rect x="397.4" y="299.4" width="14.5" height="14.5" fill="#b08000"/><rect x="411.3" y="299.4" width="14.5" height="14.5" fill="#b08000"/><rect x="-19.6" y="313.3" width="14.5" height="14.5" fill="#83d900"/><rect x="-5.7" y="313.3" width="14.5" height="14.5" fill="#83d900"/><rect x="22.1" y="313.3" width="14.5" height="14.5" fill="#838000"/><rect x="36.0" y="313.3" width="14.5" height="14.5" fill="#838000"/><rect x="49.9" y="313.3" width="14.5" height="14.5" fill="#7a8000"/><rect x="63.8" y="313.3" width="14.5" height="14.5" fill="#7a8000"/><rect x="327.9" y="313.3" width="14.5" height="14.5" fill="#b08000"/><rect x="341.8" y="313.3" width="14.5" height="14.5" fill="#b08000"/><rect x="355.7" y="313.3" width="14.5" height="14.5" fill="#b08000"/><rect x="369.6" y="313.3" width="14.5" height="14.5" fill="#b08000"/><rect x="383.5" y="313.3" width="14.5" height="14.5" fill="#b08000"/><rect x="397.4" y="313.3" width="14.5" height="14.5" fill="#b08000"/><rect x="411.3" y="313.3" width="14.5" height="14.5" fill="#b08000"/><rect x="-19.6" y="327.2" width="14.5" height="14.5" fill="#83d900"/><rect x="-5.7" y="327.2" width="14.5" height="14.5" fill="#83d900"/><rect x="22.1" y="327.2" width="14.5" height="14.5" fill="#838000"/><rect x="36.0" y="327.2" width="14.5" height="14.5" fill="#838000"/><rect x="49.9" y="327.2" width="14.5" height="14.5" fill="#7b8000"/><rect x="63.8" y="327.2" width="14.5" height="14.5" fill="#7b8000"/><rect x="327.9" y="327.2" width="14.5" height="14.5" fill="#b08000"/><rect x="341.8" y="327.2" width="14.5" height="14.5" fill="#b08000"/><rect x="355.7" y="327.2" width="14.5" height="14.5" fill="#b08000"/><rect x="369.6" y="327.2" width="14.5" height="14.5" fill="#b08000"/><rect x="383.5" y="327.2" width="14.5" height="14.5" fill="#b08000"/><rect x="397.4" y="327.2" width="14.5" height="14.5" fill="#b08000"/><rect x="411.3" y="327.2" width="14.5" height="14.5" fill="#b08000"/><rect x="-19.6" y="341.0" width="14.5" height="14.5" fill="#70d900"/><rect x="-5.7" y="341.0" width="14.5" height="14.5" fill="#70d900"/><rect x="22.1" y="341.0" width="14.5" height="14.5" fill="#708000"/><rect x="36.0" y="341.0" width="14.5" height="14.5" fill="#708000"/><rect x="49.9" y="341.0" width="14.5" height="14.5" fill="#768000"/><rect x="63.8" y="341.0" width="14.5" height="14.5" fill="#768000"/><rect x="327.9" y="341.0" width="14.5" height="14.5" fill="#b48000"/><rect x="341.8" y="341.0" width="14.5" height="14.5" fill="#b48000"/><rect x="355.7" y="341.0" width="14.5" height="14.5" fill="#b48000"/><rect x="369.6" y="341.0" width="14.5" height="14.5" fill="#b48000"/><rect x="383.5" y="341.0" width="14.5" height="14.5" fill="#b48000"/><rect x="397.4" y="341.0" width="14.5" height="14.5" fill="#b48000"/><rect x="411.3" y="341.0" width="14.5" height="14.5" fill="#b48000"/><rect x="-19.6" y="354.9" width="14.5" height="14.5" fill="#70d900"/><rect x="-5.7" y="354.9" width="14.5" height="14.5" fill="#70d900"/><rect x="22.1" y="354.9" width="14.5" height="14.5" fill="#708000"/><rect x="36.0" y="354.9" width="14.5" height="14.5" fill="#708000"/><rect x="49.9" y="354.9" width="14.5" height="14.5" fill="#778000"/><rect x="63.8" y="354.9" width="14.5" height="14.5" fill="#778000"/><rect x="327.9" y="354.9" width="14.5" height="14.5" fill="#b18000"/><rect x="341.8" y="354.9" width="14.5" height="14.5" fill="#b18000"/><rect x="355.7" y="354.9" width="14.5" height="14.5" fill="#b18000"/><rect x="369.6" y="354.9" width="14.5" height="14.5" fill="#b18000"/><rect x="383.5" y="354.9" width="14.5" height="14.5" fill="#b18000"/><rect x="397.4" y="354.9" width="14.5" height="14.5" fill="#b18000"/><rect x="411.3" y="354.9" width="14.5" height="14.5" fill="#b18000"/><rect x="-19.6" y="368.8" width="14.5" height="14.5" fill="#77d900"/><rect x="-5.7" y="368.8" width="14.5" height="14.5" fill="#77d900"/><rect x="22.1" y="368.8" width="14.5" height="14.5" fill="#778000"/><rect x="36.0" y="368.8" width="14.5" height="14.5" fill="#778000"/><rect x="49.9" y="368.8" width="14.5" height="14.5" fill="#7e8000"/><rect x="63.8" y="368.8" width="14.5" height="14.5" fill="#7e8000"/><rect x="327.9" y="368.8" width="14.5" height="14.5" fill="#b88000"/><rect x="341.8" y="368.8" width="14.5" height="14.5" fill="#b88000"/><rect x="355.7" y="368.8" width="14.5" height="14.5" fill="#b88000"/><rect x="369.6" y="368.8" width="14.5" height="14.5" fill="#b88000"/><rect x="383.5" y="368.8" width="14.5" height="14.5" fill="#b88000"/><rect x="397.4" y="368.8" width="14.5" height="14.5" fill="#b88000"/><rect x="411.3" y="368.8" width="14.5" height="14.5" fill="#b88000"/><rect x="-19.6" y="382.7" width="14.5" height="14.5" fill="#77d900"/><rect x="-5.7" y="382.7" width="14.5" height="14.5" fill="#77d900"/><rect x="22.1" y="382.7" width="14.5" height="14.5" fill="#778000"/><rect x="36.0" y="382.7" width="14.5" height="14.5" fill="#778000"/><rect x="49.9" y="382.7" width="14.5" height="14.5" fill="#858000"/><rect x="63.8" y="382.7" width="14.5" height="14.5" fill="#858000"/><rect x="327.9" y="382.7" width="14.5" height="14.5" fill="#b78000"/><rect x="341.8" y="382.7" width="14.5" height="14.5" fill="#b78000"/><rect x="355.7" y="382.7" width="14.5" height="14.5" fill="#b78000"/><rect x="369.6" y="382.7" width="14.5" height="14.5" fill="#b78000"/><rect x="383.5" y="382.7" width="14.5" height="14.5" fill="#b78000"/><rect x="397.4" y="382.7" width="14.5" height="14.5" fill="#b78000"/><rect x="411.3" y="382.7" width="14.5" height="14.5" fill="#b78000"/><rect x="-19.6" y="396.6" width="14.5" height="14.5" fill="#77d900"/><rect x="-5.7" y="396.6" width="14.5" height="14.5" fill="#77d900"/><rect x="22.1" y="396.6" width="14.5" height="14.5" fill="#778000"/><rect x="36.0" y="396.6" width="14.5" height="14.5" fill="#778000"/><rect x="49.9" y="396.6" width="14.5" height="14.5" fill="#8c8000"/><rect x="63.8" y="396.6" width="14.5" height="14.5" fill="#8c8000"/><rect x="327.9" y="396.6" width="14.5" height="14.5" fill="#b38000"/><rect x="341.8" y="396.6" width="14.5" height="14.5" fill="#b38000"/><rect x="355.7" y="396.6" width="14.5" height="14.5" fill="#b38000"/><rect x="369.6" y="396.6" width="14.5" height="14.5" fill="#b38000"/><rect x="383.5" y="396.6" width="14.5" height="14.5" fill="#b38000"/><rect x="397.4" y="396.6" width="14.5" height="14.5" fill="#b38000"/><rect x="411.3" y="396.6" width="14.5" height="14.5" fill="#b38000"/><rect x="-19.6" y="410.4" width="14.5" height="14.5" fill="#83d900"/><rect x="-5.7" y="410.4" width="14.5" height="14.5" fill="#83d900"/><rect x="22.1" y="410.4" width="14.5" height="14.5" fill="#838000"/><rect x="36.0" y="410.4" width="14.5" height="14.5" fill="#838000"/><rect x="49.9" y="410.4" width="14.5" height="14.5" fill="#8f8000"/><rect x="63.8" y="410.4" width="14.5" height="14.5" fill="#8f8000"/><rect x="327.9" y="410.4" width="14.5" height="14.5" fill="#b38000"/><rect x="341.8" y="410.4" width="14.5" height="14.5" fill="#b38000"/><rect x="355.7" y="410.4" width="14.5" height="14.5" fill="#b38000"/><rect x="369.6" y="410.4" width="14.5" height="14.5" fill="#b38000"/><rect x="383.5" y="410.4" width="14.5" height="14.5" fill="#b38000"/><rect x="397.4" y="410.4" width="14.5" height="14.5" fill="#a88000"/><rect x="411.3" y="410.4" width="14.5" height="14.5" fill="#a88000"/><rect x="-19.6" y="424.3" width="14.5" height="14.5" fill="#83d900"/><rect x="-5.7" y="424.3" width="14.5" height="14.5" fill="#83d900"/><rect x="22.1" y="424.3" width="14.5" height="14.5" fill="#838000"/><rect x="36.0" y="424.3" width="14.5" height="14.5" fill="#8b8000"/><rect x="49.9" y="424.3" width="14.5" height="14.5" fill="#8b8000"/><rect x="63.8" y="424.3" width="14.5" height="14.5" fill="#8c8000"/><rect x="327.9" y="424.3" width="14.5" height="14.5" fill="#ac8000"/><rect x="341.8" y="424.3" width="14.5" height="14.5" fill="#ac8000"/><rect x="355.7" y="424.3" width="14.5" height="14.5" fill="#a88000"/><rect x="369.6" y="424.3" width="14.5" height="14.5" fill="#a88000"/><rect x="383.5" y="424.3" width="14.5" height="14.5" fill="#a88000"/><rect x="397.4" y="424.3" width="14.5" height="14.5" fill="#a88000"/><rect x="411.3" y="424.3" width="14.5" height="14.5" fill="#a88000"/><rect x="-19.6" y="438.2" width="14.5" height="14.5" fill="#6dd900"/><rect x="-5.7" y="438.2" width="14.5" height="14.5" fill="#6dd900"/><rect x="327.9" y="438.2" width="14.5" height="14.5" fill="#9c8000"/><rect x="341.8" y="438.2" width="14.5" height="14.5" fill="#a88000"/><rect x="355.7" y="438.2" width="14.5" height="14.5" fill="#a88000"/><rect x="369.6" y="438.2" width="14.5" height="14.5" fill="#a88000"/><rect x="383.5" y="438.2" width="14.5" height="14.5" fill="#a88000"/><rect x="397.4" y="438.2" width="14.5" height="14.5" fill="#a88000"/><rect x="411.3" y="438.2" width="14.5" height="14.5" fill="#a88000"/><rect x="-19.6" y="452.1" width="14.5" height="14.5" fill="#7ad900"/><rect x="-5.7" y="452.1" width="14.5" height="14.5" fill="#7ad900"/><rect x="341.8" y="452.1" width="14.5" height="14.5" fill="#a88000"/><rect x="355.7" y="452.1" width="14.5" height="14.5" fill="#a88000"/><rect x="369.6" y="452.1" width="14.5" height="14.5" fill="#a88000"/><rect x="383.5" y="452.1" width="14.5" height="14.5" fill="#a88000"/><rect x="397.4" y="452.1" width="14.5" height="14.5" fill="#a88000"/><rect x="411.3" y="452.1" width="14.5" height="14.5" fill="#a88000"/><rect x="-19.6" y="466.0" width="14.5" height="14.5" fill="#81d900"/><rect x="-5.7" y="466.0" width="14.5" height="14.5" fill="#81d900"/><rect x="341.8" y="466.0" width="14.5" height="14.5" fill="#aa8000"/><rect x="355.7" y="466.0" width="14.5" height="14.5" fill="#aa8000"/><rect x="369.6" y="466.0" width="14.5" height="14.5" fill="#aa8000"/><rect x="383.5" y="466.0" width="14.5" height="14.5" fill="#aa8000"/><rect x="397.4" y="466.0" width="14.5" height="14.5" fill="#aa8000"/><rect x="411.3" y="466.0" width="14.5" height="14.5" fill="#aa8000"/><rect x="-19.6" y="479.8" width="14.5" height="14.5" fill="#81d900"/><rect x="-5.7" y="479.8" width="14.5" height="14.5" fill="#81d900"/><rect x="341.8" y="479.8" width="14.5" height="14.5" fill="#a88000"/><rect x="355.7" y="479.8" width="14.5" height="14.5" fill="#a88000"/><rect x="369.6" y="479.8" width="14.5" height="14.5" fill="#a88000"/><rect x="383.5" y="479.8" width="14.5" height="14.5" fill="#a88000"/><rect x="397.4" y="479.8" width="14.5" height="14.5" fill="#a88000"/><rect x="411.3" y="479.8" width="14.5" height="14.5" fill="#a88000"/><rect x="-19.6" y="493.7" width="14.5" height="14.5" fill="#81d900"/><rect x="-5.7" y="493.7" width="14.5" height="14.5" fill="#81d900"/><rect x="341.8" y="493.7" width="14.5" height="14.5" fill="#a38000"/><rect x="355.7" y="493.7" width="14.5" height="14.5" fill="#a38000"/><rect x="369.6" y="493.7" width="14.5" height="14.5" fill="#a38000"/><rect x="383.5" y="493.7" width="14.5" height="14.5" fill="#a38000"/><rect x="397.4" y="493.7" width="14.5" height="14.5" fill="#a38000"/><rect x="411.3" y="493.7" width="14.5" height="14.5" fill="#a38000"/><rect x="-19.6" y="507.6" width="14.5" height="14.5" fill="#73b200"/><rect x="-5.7" y="507.6" width="14.5" height="14.5" fill="#73b200"/><rect x="341.8" y="507.6" width="14.5" height="14.5" fill="#968000"/><rect x="355.7" y="507.6" width="14.5" height="14.5" fill="#968000"/><rect x="369.6" y="507.6" width="14.5" height="14.5" fill="#968000"/><rect x="383.5" y="507.6" width="14.5" height="14.5" fill="#968000"/><rect x="397.4" y="507.6" width="14.5" height="14.5" fill="#968000"/><rect x="411.3" y="507.6" width="14.5" height="14.5" fill="#968000"/><rect x="-19.6" y="521.5" width="14.5" height="14.5" fill="#62b200"/><rect x="-5.7" y="521.5" width="14.5" height="14.5" fill="#62b200"/><rect x="341.8" y="521.5" width="14.5" height="14.5" fill="#968000"/><rect x="355.7" y="521.5" width="14.5" height="14.5" fill="#968000"/><rect x="369.6" y="521.5" width="14.5" height="14.5" fill="#968000"/><rect x="383.5" y="521.5" width="14.5" height="14.5" fill="#968000"/><rect x="397.4" y="521.5" width="14.5" height="14.5" fill="#968000"/><rect x="411.3" y="521.5" width="14.5" height="14.5" fill="#968000"/><rect x="-19.6" y="535.4" width="14.5" height="14.5" fill="#7ab200"/><rect x="-5.7" y="535.4" width="14.5" height="14.5" fill="#7ab200"/><rect x="341.8" y="535.4" width="14.5" height="14.5" fill="#968000"/><rect x="355.7" y="535.4" width="14.5" height="14.5" fill="#968000"/><rect x="369.6" y="535.4" width="14.5" height="14.5" fill="#968000"/><rect x="383.5" y="535.4" width="14.5" height="14.5" fill="#968000"/><rect x="397.4" y="535.4" width="14.5" height="14.5" fill="#968000"/><rect x="411.3" y="535.4" width="14.5" height="14.5" fill="#968000"/><rect x="-19.6" y="549.2" width="14.5" height="14.5" fill="#81b200"/><rect x="-5.7" y="549.2" width="14.5" height="14.5" fill="#81b200"/><rect x="341.8" y="549.2" width="14.5" height="14.5" fill="#9a8000"/><rect x="355.7" y="549.2" width="14.5" height="14.5" fill="#9a8000"/><rect x="369.6" y="549.2" width="14.5" height="14.5" fill="#9a8000"/><rect x="383.5" y="549.2" width="14.5" height="14.5" fill="#9a8000"/><rect x="397.4" y="549.2" width="14.5" height="14.5" fill="#9a8000"/><rect x="411.3" y="549.2" width="14.5" height="14.5" fill="#9a8000"/><rect x="-19.6" y="563.1" width="14.5" height="14.5" fill="#83b200"/><rect x="-5.7" y="563.1" width="14.5" height="14.5" fill="#83b200"/><rect x="341.8" y="563.1" width="14.5" height="14.5" fill="#948000"/><rect x="355.7" y="563.1" width="14.5" height="14.5" fill="#948000"/><rect x="369.6" y="563.1" width="14.5" height="14.5" fill="#9a8000"/><rect x="383.5" y="563.1" width="14.5" height="14.5" fill="#9a8000"/><rect x="397.4" y="563.1" width="14.5" height="14.5" fill="#9a8000"/><rect x="411.3" y="563.1" width="14.5" height="14.5" fill="#9a8000"/><rect x="-19.6" y="577.0" width="14.5" height="14.5" fill="#81b200"/><rect x="-5.7" y="577.0" width="14.5" height="14.5" fill="#81b200"/><rect x="341.8" y="577.0" width="14.5" height="14.5" fill="#938000"/><rect x="355.7" y="577.0" width="14.5" height="14.5" fill="#9a8000"/><rect x="369.6" y="577.0" width="14.5" height="14.5" fill="#9a8000"/><rect x="383.5" y="577.0" width="14.5" height="14.5" fill="#9a8000"/><rect x="397.4" y="577.0" width="14.5" height="14.5" fill="#9a8000"/><rect x="411.3" y="577.0" width="14.5" height="14.5" fill="#9a8000"/><rect x="-19.6" y="590.9" width="14.5" height="14.5" fill="#7eb200"/><rect x="-5.7" y="590.9" width="14.5" height="14.5" fill="#7eb200"/><rect x="355.7" y="590.9" width="14.5" height="14.5" fill="#9a8000"/><rect x="369.6" y="590.9" width="14.5" height="14.5" fill="#9a8000"/><rect x="383.5" y="590.9" width="14.5" height="14.5" fill="#9a8000"/><rect x="397.4" y="590.9" width="14.5" height="14.5" fill="#9a8000"/><rect x="411.3" y="590.9" width="14.5" height="14.5" fill="#9a8000"/><rect x="-19.6" y="604.8" width="14.5" height="14.5" fill="#7ab200"/><rect x="-5.7" y="604.8" width="14.5" height="14.5" fill="#7ab200"/><rect x="355.7" y="604.8" width="14.5" height="14.5" fill="#9c8000"/><rect x="369.6" y="604.8" width="14.5" height="14.5" fill="#9c8000"/><rect x="383.5" y="604.8" width="14.5" height="14.5" fill="#9c8000"/><rect x="397.4" y="604.8" width="14.5" height="14.5" fill="#9c8000"/><rect x="411.3" y="604.8" width="14.5" height="14.5" fill="#9c8000"/><rect x="-19.6" y="618.6" width="14.5" height="14.5" fill="#5eb200"/><rect x="-5.7" y="618.6" width="14.5" height="14.5" fill="#5eb200"/><rect x="355.7" y="618.6" width="14.5" height="14.5" fill="#9c8000"/><rect x="369.6" y="618.6" width="14.5" height="14.5" fill="#9c8000"/><rect x="383.5" y="618.6" width="14.5" height="14.5" fill="#9c8000"/><rect x="397.4" y="618.6" width="14.5" height="14.5" fill="#9c8000"/><rect x="411.3" y="618.6" width="14.5" height="14.5" fill="#9c8000"/><rect x="-19.6" y="632.5" width="14.5" height="14.5" fill="#5bb200"/><rect x="-5.7" y="632.5" width="14.5" height="14.5" fill="#5bb200"/><rect x="355.7" y="632.5" width="14.5" height="14.5" fill="#a38000"/><rect x="369.6" y="632.5" width="14.5" height="14.5" fill="#a38000"/><rect x="383.5" y="632.5" width="14.5" height="14.5" fill="#a38000"/><rect x="397.4" y="632.5" width="14.5" height="14.5" fill="#a38000"/><rect x="411.3" y="632.5" width="14.5" height="14.5" fill="#a38000"/><rect x="-19.6" y="646.4" width="14.5" height="14.5" fill="#68b200"/><rect x="-5.7" y="646.4" width="14.5" height="14.5" fill="#68b200"/><rect x="355.7" y="646.4" width="14.5" height="14.5" fill="#968000"/><rect x="369.6" y="646.4" width="14.5" height="14.5" fill="#968000"/><rect x="383.5" y="646.4" width="14.5" height="14.5" fill="#968000"/><rect x="397.4" y="646.4" width="14.5" height="14.5" fill="#968000"/><rect x="411.3" y="646.4" width="14.5" height="14.5" fill="#968000"/><rect x="-19.6" y="660.3" width="14.5" height="14.5" fill="#7ab200"/><rect x="-5.7" y="660.3" width="14.5" height="14.5" fill="#7ab200"/><rect x="355.7" y="660.3" width="14.5" height="14.5" fill="#968000"/><rect x="369.6" y="660.3" width="14.5" height="14.5" fill="#968000"/><rect x="383.5" y="660.3" width="14.5" height="14.5" fill="#968000"/><rect x="397.4" y="660.3" width="14.5" height="14.5" fill="#968000"/><rect x="411.3" y="660.3" width="14.5" height="14.5" fill="#968000"/><rect x="-19.6" y="674.2" width="14.5" height="14.5" fill="#88b200"/><rect x="-5.7" y="674.2" width="14.5" height="14.5" fill="#88b200"/><rect x="355.7" y="674.2" width="14.5" height="14.5" fill="#968000"/><rect x="369.6" y="674.2" width="14.5" height="14.5" fill="#968000"/><rect x="383.5" y="674.2" width="14.5" height="14.5" fill="#968000"/><rect x="397.4" y="674.2" width="14.5" height="14.5" fill="#968000"/><rect x="411.3" y="674.2" width="14.5" height="14.5" fill="#968000"/><rect x="-19.6" y="688.0" width="14.5" height="14.5" fill="#8cb200"/><rect x="-5.7" y="688.0" width="14.5" height="14.5" fill="#8cb200"/><rect x="355.7" y="688.0" width="14.5" height="14.5" fill="#968000"/><rect x="369.6" y="688.0" width="14.5" height="14.5" fill="#968000"/><rect x="383.5" y="688.0" width="14.5" height="14.5" fill="#968000"/><rect x="397.4" y="688.0" width="14.5" height="14.5" fill="#968000"/><rect x="411.3" y="688.0" width="14.5" height="14.5" fill="#968000"/><rect x="-19.6" y="701.9" width="14.5" height="14.5" fill="#81b200"/><rect x="-5.7" y="701.9" width="14.5" height="14.5" fill="#819900"/><rect x="355.7" y="701.9" width="14.5" height="14.5" fill="#9c8000"/><rect x="369.6" y="701.9" width="14.5" height="14.5" fill="#9c8000"/><rect x="383.5" y="701.9" width="14.5" height="14.5" fill="#968000"/><rect x="397.4" y="701.9" width="14.5" height="14.5" fill="#968000"/><rect x="411.3" y="701.9" width="14.5" height="14.5" fill="#968000"/><rect x="-19.6" y="715.8" width="14.5" height="14.5" fill="#88b200"/><rect x="-5.7" y="715.8" width="14.5" height="14.5" fill="#879900"/><rect x="355.7" y="715.8" width="14.5" height="14.5" fill="#a38000"/><rect x="369.6" y="715.8" width="14.5" height="14.5" fill="#968000"/><rect x="383.5" y="715.8" width="14.5" height="14.5" fill="#968000"/><rect x="397.4" y="715.8" width="14.5" height="14.5" fill="#968000"/><rect x="411.3" y="715.8" width="14.5" height="14.5" fill="#968000"/><rect x="-19.6" y="729.7" width="14.5" height="14.5" fill="#81b200"/><rect x="-5.7" y="729.7" width="14.5" height="14.5" fill="#819900"/><rect x="369.6" y="729.7" width="14.5" height="14.5" fill="#968000"/><rect x="383.5" y="729.7" width="14.5" height="14.5" fill="#968000"/><rect x="397.4" y="729.7" width="14.5" height="14.5" fill="#968000"/><rect x="411.3" y="729.7" width="14.5" height="14.5" fill="#968000"/><rect x="-19.6" y="743.6" width="14.5" height="14.5" fill="#7ab200"/><rect x="-5.7" y="743.6" width="14.5" height="14.5" fill="#7ab200"/><rect x="369.6" y="743.6" width="14.5" height="14.5" fill="#968000"/><rect x="383.5" y="743.6" width="14.5" height="14.5" fill="#968000"/><rect x="397.4" y="743.6" width="14.5" height="14.5" fill="#968000"/><rect x="411.3" y="743.6" width="14.5" height="14.5" fill="#968000"/><rect x="-19.6" y="757.4" width="14.5" height="14.5" fill="#81b200"/><rect x="-5.7" y="757.4" width="14.5" height="14.5" fill="#81b200"/><rect x="369.6" y="757.4" width="14.5" height="14.5" fill="#9c8000"/><rect x="383.5" y="757.4" width="14.5" height="14.5" fill="#9c8000"/><rect x="397.4" y="757.4" width="14.5" height="14.5" fill="#9c8000"/><rect x="411.3" y="757.4" width="14.5" height="14.5" fill="#9c8000"/><rect x="-19.6" y="771.3" width="14.5" height="14.5" fill="#88b200"/><rect x="-5.7" y="771.3" width="14.5" height="14.5" fill="#88b200"/><rect x="369.6" y="771.3" width="14.5" height="14.5" fill="#9c8000"/><rect x="383.5" y="771.3" width="14.5" height="14.5" fill="#9c8000"/><rect x="397.4" y="771.3" width="14.5" height="14.5" fill="#9c8000"/><rect x="411.3" y="771.3" width="14.5" height="14.5" fill="#9c8000"/><rect x="-19.6" y="785.2" width="14.5" height="14.5" fill="#7acc00"/><rect x="-5.7" y="785.2" width="14.5" height="14.5" fill="#7acc00"/><rect x="369.6" y="785.2" width="14.5" height="14.5" fill="#9c8000"/><rect x="383.5" y="785.2" width="14.5" height="14.5" fill="#9c8000"/><rect x="397.4" y="785.2" width="14.5" height="14.5" fill="#9c8000"/><rect x="411.3" y="785.2" width="14.5" height="14.5" fill="#9c8000"/><rect x="-19.6" y="799.1" width="14.5" height="14.5" fill="#5ecc00"/><rect x="-5.7" y="799.1" width="14.5" height="14.5" fill="#5ecc00"/><rect x="369.6" y="799.1" width="14.5" height="14.5" fill="#999900"/><rect x="383.5" y="799.1" width="14.5" height="14.5" fill="#9c8000"/><rect x="397.4" y="799.1" width="14.5" height="14.5" fill="#9c8000"/><rect x="411.3" y="799.1" width="14.5" height="14.5" fill="#9c8000"/><rect x="-19.6" y="813.0" width="14.5" height="14.5" fill="#6ccc00"/><rect x="-5.7" y="813.0" width="14.5" height="14.5" fill="#6ccc00"/><rect x="369.6" y="813.0" width="14.5" height="14.5" fill="#9f8000"/><rect x="383.5" y="813.0" width="14.5" height="14.5" fill="#9f8000"/><rect x="397.4" y="813.0" width="14.5" height="14.5" fill="#9f8000"/><rect x="411.3" y="813.0" width="14.5" height="14.5" fill="#9f8000"/><rect x="-19.6" y="826.8" width="14.5" height="14.5" fill="#7acc00"/><rect x="-5.7" y="826.8" width="14.5" height="14.5" fill="#7acc00"/><rect x="161.1" y="826.8" width="14.5" height="14.5" fill="#738000"/><rect x="175.0" y="826.8" width="14.5" height="14.5" fill="#708000"/><rect x="188.9" y="826.8" width="14.5" height="14.5" fill="#778000"/><rect x="202.8" y="826.8" width="14.5" height="14.5" fill="#788000"/><rect x="216.7" y="826.8" width="14.5" height="14.5" fill="#7a8000"/><rect x="230.6" y="826.8" width="14.5" height="14.5" fill="#7e8000"/><rect x="244.5" y="826.8" width="14.5" height="14.5" fill="#8f8000"/><rect x="258.4" y="826.8" width="14.5" height="14.5" fill="#8f8000"/><rect x="272.3" y="826.8" width="14.5" height="14.5" fill="#888000"/><rect x="286.2" y="826.8" width="14.5" height="14.5" fill="#818000"/><rect x="300.1" y="826.8" width="14.5" height="14.5" fill="#818000"/><rect x="314.0" y="826.8" width="14.5" height="14.5" fill="#858000"/><rect x="327.9" y="826.8" width="14.5" height="14.5" fill="#8c8000"/><rect x="341.8" y="826.8" width="14.5" height="14.5" fill="#968000"/><rect x="355.7" y="826.8" width="14.5" height="14.5" fill="#9f8000"/><rect x="369.6" y="826.8" width="14.5" height="14.5" fill="#9f8000"/><rect x="383.5" y="826.8" width="14.5" height="14.5" fill="#9f8000"/><rect x="397.4" y="826.8" width="14.5" height="14.5" fill="#9f8000"/><rect x="411.3" y="826.8" width="14.5" height="14.5" fill="#9f8000"/><rect x="-19.6" y="840.7" width="14.5" height="14.5" fill="#7acc00"/><rect x="-5.7" y="840.7" width="14.5" height="14.5" fill="#7acc00"/><rect x="8.2" y="840.7" width="14.5" height="14.5" fill="#7acc00"/><rect x="22.1" y="840.7" width="14.5" height="14.5" fill="#7acc00"/><rect x="36.0" y="840.7" width="14.5" height="14.5" fill="#81cc00"/><rect x="49.9" y="840.7" width="14.5" height="14.5" fill="#81cc00"/><rect x="63.8" y="840.7" width="14.5" height="14.5" fill="#7acc00"/><rect x="77.7" y="840.7" width="14.5" height="14.5" fill="#7acc00"/><rect x="91.6" y="840.7" width="14.5" height="14.5" fill="#7acc00"/><rect x="105.5" y="840.7" width="14.5" height="14.5" fill="#7acc00"/><rect x="119.4" y="840.7" width="14.5" height="14.5" fill="#8fcc00"/><rect x="133.3" y="840.7" width="14.5" height="14.5" fill="#88b200"/><rect x="147.2" y="840.7" width="14.5" height="14.5" fill="#81b200"/><rect x="161.1" y="840.7" width="14.5" height="14.5" fill="#818000"/><rect x="175.0" y="840.7" width="14.5" height="14.5" fill="#708000"/><rect x="188.9" y="840.7" width="14.5" height="14.5" fill="#778000"/><rect x="202.8" y="840.7" width="14.5" height="14.5" fill="#788000"/><rect x="216.7" y="840.7" width="14.5" height="14.5" fill="#7a8000"/><rect x="230.6" y="840.7" width="14.5" height="14.5" fill="#7e8000"/><rect x="244.5" y="840.7" width="14.5" height="14.5" fill="#8f8000"/><rect x="258.4" y="840.7" width="14.5" height="14.5" fill="#8f8000"/><rect x="272.3" y="840.7" width="14.5" height="14.5" fill="#888000"/><rect x="286.2" y="840.7" width="14.5" height="14.5" fill="#818000"/><rect x="300.1" y="840.7" width="14.5" height="14.5" fill="#818000"/><rect x="314.0" y="840.7" width="14.5" height="14.5" fill="#858000"/><rect x="327.9" y="840.7" width="14.5" height="14.5" fill="#8c8000"/><rect x="341.8" y="840.7" width="14.5" height="14.5" fill="#968000"/><rect x="355.7" y="840.7" width="14.5" height="14.5" fill="#9f8000"/><rect x="369.6" y="840.7" width="14.5" height="14.5" fill="#9f8000"/><rect x="383.5" y="840.7" width="14.5" height="14.5" fill="#9f8000"/><rect x="397.4" y="840.7" width="14.5" height="14.5" fill="#9f8000"/><rect x="411.3" y="840.7" width="14.5" height="14.5" fill="#9f8000"/><rect x="-19.6" y="854.6" width="14.5" height="14.5" fill="#7acc00"/><rect x="-5.7" y="854.6" width="14.5" height="14.5" fill="#7acc00"/><rect x="8.2" y="854.6" width="14.5" height="14.5" fill="#7acc00"/><rect x="22.1" y="854.6" width="14.5" height="14.5" fill="#7acc00"/><rect x="36.0" y="854.6" width="14.5" height="14.5" fill="#81cc00"/><rect x="49.9" y="854.6" width="14.5" height="14.5" fill="#81cc00"/><rect x="63.8" y="854.6" width="14.5" height="14.5" fill="#7acc00"/><rect x="77.7" y="854.6" width="14.5" height="14.5" fill="#7acc00"/><rect x="91.6" y="854.6" width="14.5" height="14.5" fill="#7acc00"/><rect x="105.5" y="854.6" width="14.5" height="14.5" fill="#7acc00"/><rect x="119.4" y="854.6" width="14.5" height="14.5" fill="#8fcc00"/><rect x="133.3" y="854.6" width="14.5" height="14.5" fill="#88b200"/><rect x="147.2" y="854.6" width="14.5" height="14.5" fill="#81b200"/><rect x="161.1" y="854.6" width="14.5" height="14.5" fill="#818000"/><rect x="175.0" y="854.6" width="14.5" height="14.5" fill="#818000"/><rect x="188.9" y="854.6" width="14.5" height="14.5" fill="#778000"/><rect x="202.8" y="854.6" width="14.5" height="14.5" fill="#788000"/><rect x="216.7" y="854.6" width="14.5" height="14.5" fill="#7a8000"/><rect x="230.6" y="854.6" width="14.5" height="14.5" fill="#7e8000"/><rect x="244.5" y="854.6" width="14.5" height="14.5" fill="#8f8000"/><rect x="258.4" y="854.6" width="14.5" height="14.5" fill="#8f8000"/><rect x="272.3" y="854.6" width="14.5" height="14.5" fill="#888000"/><rect x="286.2" y="854.6" width="14.5" height="14.5" fill="#818000"/><rect x="300.1" y="854.6" width="14.5" height="14.5" fill="#818000"/><rect x="314.0" y="854.6" width="14.5" height="14.5" fill="#858000"/><rect x="327.9" y="854.6" width="14.5" height="14.5" fill="#8c8000"/><rect x="341.8" y="854.6" width="14.5" height="14.5" fill="#968000"/><rect x="355.7" y="854.6" width="14.5" height="14.5" fill="#9f8000"/><rect x="369.6" y="854.6" width="14.5" height="14.5" fill="#9f8000"/><rect x="383.5" y="854.6" width="14.5" height="14.5" fill="#9f8000"/><rect x="397.4" y="854.6" width="14.5" height="14.5" fill="#9f8000"/><rect x="411.3" y="854.6" width="14.5" height="14.5" fill="#9f8000"/><rect x="-19.6" y="868.5" width="14.5" height="14.5" fill="#7acc00"/><rect x="-5.7" y="868.5" width="14.5" height="14.5" fill="#7acc00"/><rect x="8.2" y="868.5" width="14.5" height="14.5" fill="#7acc00"/><rect x="22.1" y="868.5" width="14.5" height="14.5" fill="#7acc00"/><rect x="36.0" y="868.5" width="14.5" height="14.5" fill="#81cc00"/><rect x="49.9" y="868.5" width="14.5" height="14.5" fill="#81cc00"/><rect x="63.8" y="868.5" width="14.5" height="14.5" fill="#7acc00"/><rect x="77.7" y="868.5" width="14.5" height="14.5" fill="#7acc00"/><rect x="91.6" y="868.5" width="14.5" height="14.5" fill="#7acc00"/><rect x="105.5" y="868.5" width="14.5" height="14.5" fill="#7acc00"/><rect x="119.4" y="868.5" width="14.5" height="14.5" fill="#8fcc00"/><rect x="133.3" y="868.5" width="14.5" height="14.5" fill="#88b200"/><rect x="147.2" y="868.5" width="14.5" height="14.5" fill="#81b200"/><rect x="161.1" y="868.5" width="14.5" height="14.5" fill="#818000"/><rect x="175.0" y="868.5" width="14.5" height="14.5" fill="#818000"/><rect x="188.9" y="868.5" width="14.5" height="14.5" fill="#778000"/><rect x="202.8" y="868.5" width="14.5" height="14.5" fill="#788000"/><rect x="216.7" y="868.5" width="14.5" height="14.5" fill="#7a8000"/><rect x="230.6" y="868.5" width="14.5" height="14.5" fill="#7e8000"/><rect x="244.5" y="868.5" width="14.5" height="14.5" fill="#8f8000"/><rect x="258.4" y="868.5" width="14.5" height="14.5" fill="#8f8000"/><rect x="272.3" y="868.5" width="14.5" height="14.5" fill="#888000"/><rect x="286.2" y="868.5" width="14.5" height="14.5" fill="#818000"/><rect x="300.1" y="868.5" width="14.5" height="14.5" fill="#818000"/><rect x="314.0" y="868.5" width="14.5" height="14.5" fill="#858000"/><rect x="327.9" y="868.5" width="14.5" height="14.5" fill="#8c8000"/><rect x="341.8" y="868.5" width="14.5" height="14.5" fill="#968000"/><rect x="355.7" y="868.5" width="14.5" height="14.5" fill="#9f8000"/><rect x="369.6" y="868.5" width="14.5" height="14.5" fill="#9f8000"/><rect x="383.5" y="868.5" width="14.5" height="14.5" fill="#9f8000"/><rect x="397.4" y="868.5" width="14.5" height="14.5" fill="#9f8000"/><rect x="411.3" y="868.5" width="14.5" height="14.5" fill="#9f8000"/>
</g>
<g filter="url(#vb)" style="mix-blend-mode:lighten"><ellipse cx="180.0" cy="478.0" rx="20.0" ry="9.0" transform="rotate(10 180.0 478.0)" fill="#000066"/><ellipse cx="192.0" cy="542.0" rx="26.0" ry="18.0" transform="rotate(50 192.0 542.0)" fill="#0000b8"/><ellipse cx="203.0" cy="578.0" rx="20.0" ry="14.0" transform="rotate(50 203.0 578.0)" fill="#000080"/><ellipse cx="257.0" cy="550.0" rx="12.0" ry="22.0" transform="rotate(0 257.0 550.0)" fill="#000073"/><ellipse cx="238.0" cy="632.0" rx="64.0" ry="26.0" transform="rotate(56 238.0 632.0)" fill="#0000b8"/><ellipse cx="313.0" cy="652.0" rx="26.0" ry="36.0" transform="rotate(10 313.0 652.0)" fill="#000094"/><ellipse cx="162.0" cy="698.0" rx="14.0" ry="22.0" transform="rotate(0 162.0 698.0)" fill="#00004c"/><ellipse cx="80.0" cy="730.0" rx="62.0" ry="45.0" transform="rotate(0 80.0 730.0)" fill="#000029"/><ellipse cx="236.0" cy="768.0" rx="34.0" ry="15.0" transform="rotate(15 236.0 768.0)" fill="#00009e"/><ellipse cx="250.0" cy="810.0" rx="34.0" ry="13.0" transform="rotate(0 250.0 810.0)" fill="#000080"/><ellipse cx="330.0" cy="808.0" rx="36.0" ry="13.0" transform="rotate(0 330.0 808.0)" fill="#000073"/><ellipse cx="298.0" cy="772.0" rx="56.0" ry="12.0" transform="rotate(32 298.0 772.0)" fill="#000080"/><ellipse cx="341.0" cy="720.0" rx="15.0" ry="12.0" transform="rotate(0 341.0 720.0)" fill="#00008c"/><ellipse cx="145.0" cy="818.0" rx="30.0" ry="8.0" transform="rotate(-42 145.0 818.0)" fill="#0000a6"/><ellipse cx="306.0" cy="728.0" rx="10.0" ry="8.0" transform="rotate(0 306.0 728.0)" fill="#000066"/><ellipse cx="290.0" cy="578.0" rx="18.0" ry="10.0" transform="rotate(20 290.0 578.0)" fill="#000052"/><ellipse cx="345.0" cy="640.0" rx="10.0" ry="14.0" transform="rotate(0 345.0 640.0)" fill="#000066"/><ellipse cx="275.0" cy="700.0" rx="22.0" ry="14.0" transform="rotate(40 275.0 700.0)" fill="#000080"/></g>
<g filter="url(#fb)" style="mix-blend-mode:lighten"><line x1="105.3" y1="58.2" x2="107.7" y2="52.6" stroke="#b30000" stroke-width="1.9" stroke-linecap="round"/><line x1="114.4" y1="60.8" x2="117.0" y2="56.2" stroke="#c00000" stroke-width="2.2" stroke-linecap="round"/><line x1="120.9" y1="56.4" x2="124.7" y2="48.4" stroke="#b50000" stroke-width="2.0" stroke-linecap="round"/><line x1="136.9" y1="61.2" x2="139.3" y2="55.8" stroke="#c20000" stroke-width="1.8" stroke-linecap="round"/><line x1="150.8" y1="72.4" x2="156.0" y2="65.0" stroke="#b40000" stroke-width="2.2" stroke-linecap="round"/><line x1="162.9" y1="76.6" x2="166.3" y2="71.0" stroke="#c10000" stroke-width="2.1" stroke-linecap="round"/><line x1="165.7" y1="72.0" x2="169.5" y2="63.4" stroke="#bd0000" stroke-width="2.0" stroke-linecap="round"/><line x1="174.2" y1="53.8" x2="177.4" y2="47.0" stroke="#b20000" stroke-width="1.9" stroke-linecap="round"/><line x1="178.0" y1="46.1" x2="183.6" y2="38.3" stroke="#b60000" stroke-width="2.0" stroke-linecap="round"/><line x1="187.5" y1="56.5" x2="192.5" y2="48.3" stroke="#c00000" stroke-width="2.2" stroke-linecap="round"/><line x1="190.2" y1="47.5" x2="193.8" y2="40.9" stroke="#b80000" stroke-width="2.0" stroke-linecap="round"/><line x1="185.7" y1="68.2" x2="188.3" y2="63.0" stroke="#b10000" stroke-width="2.2" stroke-linecap="round"/><line x1="195.7" y1="41.4" x2="198.5" y2="37.0" stroke="#ba0000" stroke-width="1.8" stroke-linecap="round"/><line x1="203.6" y1="53.7" x2="207.0" y2="47.1" stroke="#b40000" stroke-width="2.3" stroke-linecap="round"/><line x1="216.0" y1="55.6" x2="219.0" y2="49.2" stroke="#b50000" stroke-width="2.0" stroke-linecap="round"/><line x1="223.7" y1="59.3" x2="227.5" y2="53.7" stroke="#bb0000" stroke-width="1.8" stroke-linecap="round"/><line x1="261.4" y1="49.7" x2="265.2" y2="40.9" stroke="#b40000" stroke-width="1.6" stroke-linecap="round"/><line x1="268.1" y1="54.1" x2="272.7" y2="46.7" stroke="#b60000" stroke-width="1.8" stroke-linecap="round"/><line x1="277.1" y1="57.0" x2="279.9" y2="51.8" stroke="#be0000" stroke-width="1.6" stroke-linecap="round"/><line x1="278.7" y1="83.7" x2="284.5" y2="76.1" stroke="#c30000" stroke-width="2.1" stroke-linecap="round"/><line x1="277.4" y1="88.3" x2="279.6" y2="83.7" stroke="#bf0000" stroke-width="2.3" stroke-linecap="round"/><line x1="133.9" y1="79.6" x2="138.1" y2="74.0" stroke="#c00000" stroke-width="2.0" stroke-linecap="round"/><line x1="122.4" y1="89.9" x2="125.2" y2="84.1" stroke="#b30000" stroke-width="1.9" stroke-linecap="round"/><line x1="139.1" y1="68.3" x2="143.3" y2="62.9" stroke="#b00000" stroke-width="1.8" stroke-linecap="round"/><line x1="208.2" y1="62.9" x2="210.4" y2="58.1" stroke="#b70000" stroke-width="2.1" stroke-linecap="round"/><line x1="220.2" y1="65.6" x2="222.8" y2="59.6" stroke="#b80000" stroke-width="2.3" stroke-linecap="round"/><line x1="231.5" y1="68.4" x2="233.9" y2="62.8" stroke="#b30000" stroke-width="1.6" stroke-linecap="round"/><line x1="149.6" y1="203.8" x2="153.0" y2="196.2" stroke="#ba0000" stroke-width="1.6" stroke-linecap="round"/><line x1="161.6" y1="197.5" x2="165.4" y2="192.5" stroke="#ba0000" stroke-width="1.7" stroke-linecap="round"/><line x1="167.5" y1="189.7" x2="171.7" y2="181.9" stroke="#b90000" stroke-width="2.3" stroke-linecap="round"/><line x1="195.6" y1="187.4" x2="198.6" y2="182.0" stroke="#b80000" stroke-width="1.6" stroke-linecap="round"/><line x1="213.6" y1="183.2" x2="217.2" y2="178.2" stroke="#ba0000" stroke-width="2.2" stroke-linecap="round"/><line x1="221.5" y1="177.9" x2="223.7" y2="173.3" stroke="#b40000" stroke-width="1.8" stroke-linecap="round"/><line x1="230.9" y1="213.7" x2="234.5" y2="208.7" stroke="#b10000" stroke-width="1.7" stroke-linecap="round"/><line x1="245.5" y1="207.1" x2="250.5" y2="198.9" stroke="#b80000" stroke-width="2.3" stroke-linecap="round"/><line x1="10.4" y1="46.0" x2="15.6" y2="38.0" stroke="#be0000" stroke-width="2.2" stroke-linecap="round"/><line x1="18.5" y1="53.4" x2="21.5" y2="46.6" stroke="#c10000" stroke-width="1.7" stroke-linecap="round"/><line x1="21.2" y1="43.8" x2="26.8" y2="36.2" stroke="#bd0000" stroke-width="1.8" stroke-linecap="round"/><line x1="85.6" y1="43.8" x2="90.4" y2="36.2" stroke="#ba0000" stroke-width="2.2" stroke-linecap="round"/><line x1="92.7" y1="50.5" x2="97.3" y2="43.5" stroke="#c20000" stroke-width="1.8" stroke-linecap="round"/><line x1="286.2" y1="44.4" x2="291.2" y2="38.3" stroke="#a90000" stroke-width="1.7" stroke-linecap="round"/><line x1="93.1" y1="90.9" x2="95.9" y2="87.4" stroke="#a90000" stroke-width="1.7" stroke-linecap="round"/><line x1="96.1" y1="49.4" x2="99.7" y2="44.0" stroke="#aa0000" stroke-width="1.7" stroke-linecap="round"/><line x1="281.3" y1="51.2" x2="283.8" y2="48.1" stroke="#9a0000" stroke-width="1.7" stroke-linecap="round"/><line x1="269.5" y1="46.6" x2="273.8" y2="40.8" stroke="#ad0000" stroke-width="1.7" stroke-linecap="round"/><line x1="200.9" y1="89.9" x2="203.6" y2="86.0" stroke="#a10000" stroke-width="1.7" stroke-linecap="round"/><line x1="273.4" y1="84.4" x2="276.5" y2="79.4" stroke="#9a0000" stroke-width="1.7" stroke-linecap="round"/><line x1="90.5" y1="73.8" x2="94.1" y2="69.1" stroke="#a70000" stroke-width="1.7" stroke-linecap="round"/><line x1="112.7" y1="61.0" x2="116.4" y2="55.0" stroke="#9a0000" stroke-width="1.7" stroke-linecap="round"/><line x1="262.3" y1="86.8" x2="264.6" y2="83.2" stroke="#a20000" stroke-width="1.7" stroke-linecap="round"/><line x1="251.4" y1="57.1" x2="254.0" y2="53.0" stroke="#af0000" stroke-width="1.7" stroke-linecap="round"/><line x1="103.3" y1="46.2" x2="107.3" y2="41.1" stroke="#a50000" stroke-width="1.7" stroke-linecap="round"/><line x1="175.9" y1="90.0" x2="178.9" y2="83.5" stroke="#ad0000" stroke-width="1.7" stroke-linecap="round"/><line x1="124.8" y1="57.7" x2="128.6" y2="51.4" stroke="#ab0000" stroke-width="1.7" stroke-linecap="round"/><line x1="119.6" y1="89.8" x2="121.7" y2="85.6" stroke="#a50000" stroke-width="1.7" stroke-linecap="round"/><line x1="154.9" y1="71.5" x2="159.3" y2="65.3" stroke="#9a0000" stroke-width="1.7" stroke-linecap="round"/><line x1="149.7" y1="71.0" x2="153.1" y2="66.2" stroke="#a40000" stroke-width="1.7" stroke-linecap="round"/><line x1="99.3" y1="54.4" x2="103.0" y2="48.0" stroke="#ab0000" stroke-width="1.7" stroke-linecap="round"/><line x1="293.1" y1="76.1" x2="296.8" y2="70.6" stroke="#a10000" stroke-width="1.7" stroke-linecap="round"/><line x1="277.6" y1="67.4" x2="281.3" y2="60.7" stroke="#ad0000" stroke-width="1.7" stroke-linecap="round"/><line x1="251.3" y1="75.1" x2="253.9" y2="70.0" stroke="#ab0000" stroke-width="1.7" stroke-linecap="round"/><line x1="161.2" y1="77.4" x2="163.1" y2="73.4" stroke="#9d0000" stroke-width="1.7" stroke-linecap="round"/><line x1="255.4" y1="50.6" x2="259.2" y2="44.0" stroke="#a70000" stroke-width="1.7" stroke-linecap="round"/><line x1="158.5" y1="74.9" x2="160.8" y2="71.1" stroke="#af0000" stroke-width="1.7" stroke-linecap="round"/><line x1="122.0" y1="77.3" x2="124.5" y2="72.6" stroke="#9a0000" stroke-width="1.7" stroke-linecap="round"/><line x1="87.1" y1="95.0" x2="91.5" y2="89.1" stroke="#ac0000" stroke-width="1.7" stroke-linecap="round"/><line x1="286.4" y1="48.9" x2="289.7" y2="43.5" stroke="#a60000" stroke-width="1.7" stroke-linecap="round"/><line x1="283.1" y1="84.6" x2="286.5" y2="77.6" stroke="#a80000" stroke-width="1.7" stroke-linecap="round"/><line x1="226.9" y1="82.8" x2="230.8" y2="77.6" stroke="#a00000" stroke-width="1.7" stroke-linecap="round"/><line x1="280.6" y1="63.1" x2="284.6" y2="58.0" stroke="#a90000" stroke-width="1.7" stroke-linecap="round"/><line x1="266.9" y1="128.3" x2="269.7" y2="123.9" stroke="#be0000" stroke-width="1.7" stroke-linecap="round"/><line x1="292.0" y1="151.3" x2="295.3" y2="146.8" stroke="#b00000" stroke-width="1.7" stroke-linecap="round"/><line x1="271.5" y1="98.8" x2="273.9" y2="94.7" stroke="#b80000" stroke-width="1.7" stroke-linecap="round"/><line x1="279.3" y1="147.5" x2="283.5" y2="140.9" stroke="#ad0000" stroke-width="1.7" stroke-linecap="round"/><line x1="255.4" y1="229.6" x2="260.4" y2="223.3" stroke="#b60000" stroke-width="1.7" stroke-linecap="round"/><line x1="267.4" y1="109.6" x2="269.5" y2="105.0" stroke="#bc0000" stroke-width="1.7" stroke-linecap="round"/><line x1="292.4" y1="202.1" x2="294.3" y2="197.9" stroke="#b00000" stroke-width="1.7" stroke-linecap="round"/><line x1="293.8" y1="120.0" x2="297.7" y2="114.1" stroke="#b50000" stroke-width="1.7" stroke-linecap="round"/><line x1="295.1" y1="133.2" x2="297.4" y2="127.6" stroke="#ac0000" stroke-width="1.7" stroke-linecap="round"/><line x1="255.6" y1="139.8" x2="257.2" y2="135.6" stroke="#be0000" stroke-width="1.7" stroke-linecap="round"/><line x1="265.5" y1="218.0" x2="269.4" y2="212.4" stroke="#b70000" stroke-width="1.7" stroke-linecap="round"/><line x1="294.2" y1="216.5" x2="297.7" y2="210.7" stroke="#b80000" stroke-width="1.7" stroke-linecap="round"/><line x1="284.9" y1="172.3" x2="287.3" y2="166.8" stroke="#bb0000" stroke-width="1.7" stroke-linecap="round"/><line x1="274.4" y1="106.0" x2="277.2" y2="102.3" stroke="#af0000" stroke-width="1.7" stroke-linecap="round"/><line x1="166.0" y1="789.0" x2="141.0" y2="815.0" stroke="#ba0000" stroke-width="2.8" stroke-linecap="round"/><line x1="152.0" y1="811.0" x2="124.0" y2="834.0" stroke="#bc0000" stroke-width="2.6" stroke-linecap="round"/><line x1="160.0" y1="803.0" x2="137.0" y2="827.0" stroke="#b80000" stroke-width="2.5" stroke-linecap="round"/><line x1="146.0" y1="800.0" x2="130.0" y2="816.0" stroke="#b30000" stroke-width="2.2" stroke-linecap="round"/><line x1="172.0" y1="786.0" x2="160.0" y2="797.0" stroke="#b80000" stroke-width="2.5" stroke-linecap="round"/><line x1="74.2" y1="753.7" x2="77.9" y2="761.0" stroke="#a80000" stroke-width="2.6" stroke-linecap="round"/><line x1="37.0" y1="745.1" x2="42.9" y2="753.8" stroke="#a10000" stroke-width="2.1" stroke-linecap="round"/><line x1="25.8" y1="796.4" x2="28.7" y2="800.8" stroke="#b20000" stroke-width="3.2" stroke-linecap="round"/><line x1="101.4" y1="764.8" x2="105.1" y2="768.3" stroke="#9b0000" stroke-width="2.6" stroke-linecap="round"/><line x1="37.6" y1="702.2" x2="43.8" y2="707.6" stroke="#af0000" stroke-width="2.5" stroke-linecap="round"/><line x1="82.1" y1="766.8" x2="88.0" y2="774.5" stroke="#a10000" stroke-width="2.5" stroke-linecap="round"/><line x1="147.3" y1="824.9" x2="152.1" y2="833.6" stroke="#9f0000" stroke-width="2.4" stroke-linecap="round"/><line x1="52.0" y1="673.2" x2="56.0" y2="679.9" stroke="#a30000" stroke-width="3.0" stroke-linecap="round"/><line x1="141.9" y1="802.7" x2="146.8" y2="806.9" stroke="#a50000" stroke-width="3.1" stroke-linecap="round"/><line x1="143.8" y1="727.4" x2="150.9" y2="733.7" stroke="#a00000" stroke-width="2.9" stroke-linecap="round"/><line x1="24.5" y1="715.2" x2="29.0" y2="724.5" stroke="#a00000" stroke-width="2.1" stroke-linecap="round"/><line x1="27.1" y1="672.2" x2="30.2" y2="677.6" stroke="#a50000" stroke-width="2.7" stroke-linecap="round"/><line x1="37.3" y1="782.5" x2="44.2" y2="789.0" stroke="#a40000" stroke-width="2.1" stroke-linecap="round"/><line x1="41.4" y1="704.7" x2="46.0" y2="714.3" stroke="#b00000" stroke-width="2.4" stroke-linecap="round"/><line x1="41.2" y1="725.9" x2="45.7" y2="734.2" stroke="#b20000" stroke-width="2.1" stroke-linecap="round"/><line x1="41.9" y1="704.5" x2="45.7" y2="710.8" stroke="#9c0000" stroke-width="2.4" stroke-linecap="round"/><line x1="24.0" y1="757.8" x2="30.4" y2="764.5" stroke="#a50000" stroke-width="2.4" stroke-linecap="round"/><line x1="141.3" y1="740.3" x2="147.7" y2="749.3" stroke="#9e0000" stroke-width="2.2" stroke-linecap="round"/><line x1="135.4" y1="797.7" x2="139.8" y2="802.2" stroke="#b10000" stroke-width="2.9" stroke-linecap="round"/><line x1="39.4" y1="817.7" x2="43.7" y2="825.8" stroke="#9c0000" stroke-width="2.5" stroke-linecap="round"/><line x1="16.8" y1="820.3" x2="23.7" y2="827.4" stroke="#ae0000" stroke-width="2.3" stroke-linecap="round"/><line x1="91.9" y1="709.9" x2="99.1" y2="716.9" stroke="#9f0000" stroke-width="2.1" stroke-linecap="round"/><line x1="88.5" y1="802.8" x2="92.5" y2="808.5" stroke="#9f0000" stroke-width="3.1" stroke-linecap="round"/><line x1="15.5" y1="707.3" x2="18.9" y2="711.5" stroke="#a30000" stroke-width="2.2" stroke-linecap="round"/><line x1="88.6" y1="682.5" x2="95.9" y2="691.0" stroke="#aa0000" stroke-width="3.2" stroke-linecap="round"/><line x1="106.4" y1="759.6" x2="110.2" y2="763.2" stroke="#b00000" stroke-width="2.0" stroke-linecap="round"/></g>
<g filter="url(#fb2)" style="mix-blend-mode:lighten"><ellipse cx="38.7" cy="731.6" rx="5.0" ry="9.0" transform="rotate(-15 38.7 731.6)" fill="#0000af"/><ellipse cx="87.5" cy="697.0" rx="8.0" ry="9.0" transform="rotate(0 87.5 697.0)" fill="#0000a6"/><ellipse cx="105.8" cy="701.0" rx="4.0" ry="4.0" transform="rotate(0 105.8 701.0)" fill="#0000dd"/><ellipse cx="132.3" cy="706.0" rx="8.0" ry="12.0" transform="rotate(-10 132.3 706.0)" fill="#0000dd"/><ellipse cx="140.4" cy="721.4" rx="5.0" ry="5.0" transform="rotate(0 140.4 721.4)" fill="#0000f4"/><ellipse cx="126.2" cy="741.8" rx="9.0" ry="7.0" transform="rotate(0 126.2 741.8)" fill="#0000f9"/><ellipse cx="81.4" cy="729.6" rx="5.0" ry="11.0" transform="rotate(-25 81.4 729.6)" fill="#0000c6"/><ellipse cx="91.6" cy="756.0" rx="4.0" ry="8.0" transform="rotate(-15 91.6 756.0)" fill="#0000e7"/><ellipse cx="107.9" cy="760.0" rx="7.0" ry="10.0" transform="rotate(-20 107.9 760.0)" fill="#0000dd"/><ellipse cx="55.0" cy="768.0" rx="4.0" ry="4.0" transform="rotate(0 55.0 768.0)" fill="#000099"/><ellipse cx="160.8" cy="685.8" rx="7.0" ry="6.0" transform="rotate(0 160.8 685.8)" fill="#0000ff"/><ellipse cx="169.0" cy="701.0" rx="7.0" ry="7.0" transform="rotate(0 169.0 701.0)" fill="#0000dd"/><ellipse cx="162.8" cy="721.4" rx="6.0" ry="5.0" transform="rotate(0 162.8 721.4)" fill="#0000c6"/><ellipse cx="201.5" cy="690.9" rx="6.0" ry="6.0" transform="rotate(0 201.5 690.9)" fill="#000099"/><ellipse cx="226.0" cy="664.4" rx="6.0" ry="6.0" transform="rotate(0 226.0 664.4)" fill="#0000dd"/><ellipse cx="215.8" cy="762.0" rx="6.0" ry="6.0" transform="rotate(0 215.8 762.0)" fill="#0000dd"/><ellipse cx="224.0" cy="778.4" rx="5.0" ry="5.0" transform="rotate(0 224.0 778.4)" fill="#0000d4"/><ellipse cx="170.7" cy="477.0" rx="7.8" ry="7.0" transform="rotate(0 170.7 477.0)" fill="#0000ff"/><ellipse cx="176.8" cy="484.0" rx="7.0" ry="6.2" transform="rotate(0 176.8 484.0)" fill="#0000ff"/><ellipse cx="195.0" cy="482.0" rx="6.1" ry="5.5" transform="rotate(0 195.0 482.0)" fill="#0000ff"/><ellipse cx="157.4" cy="480.0" rx="5.2" ry="4.8" transform="rotate(0 157.4 480.0)" fill="#0000dd"/><ellipse cx="186.0" cy="488.0" rx="5.2" ry="4.8" transform="rotate(0 186.0 488.0)" fill="#0000dd"/><ellipse cx="207.0" cy="487.0" rx="4.4" ry="4.0" transform="rotate(0 207.0 487.0)" fill="#0000c6"/><ellipse cx="217.5" cy="491.0" rx="5.2" ry="4.8" transform="rotate(0 217.5 491.0)" fill="#0000dd"/><ellipse cx="341.0" cy="721.0" rx="10.0" ry="8.0" transform="rotate(0 341.0 721.0)" fill="#0000f4"/><ellipse cx="349.0" cy="636.0" rx="6.0" ry="7.0" transform="rotate(0 349.0 636.0)" fill="#0000dd"/><ellipse cx="257.0" cy="533.0" rx="7.0" ry="6.0" transform="rotate(0 257.0 533.0)" fill="#0000c6"/><ellipse cx="253.0" cy="560.0" rx="5.0" ry="9.0" transform="rotate(0 253.0 560.0)" fill="#0000c6"/><ellipse cx="303.0" cy="630.0" rx="7.0" ry="7.0" transform="rotate(0 303.0 630.0)" fill="#0000dd"/></g>
<g filter="url(#fb)" style="mix-blend-mode:darken"><ellipse cx="17.0" cy="656.0" rx="8.0" ry="8.0" transform="rotate(0 17.0 656.0)" fill="#69ffff"/><ellipse cx="65.0" cy="672.5" rx="5.0" ry="4.0" transform="rotate(0 65.0 672.5)" fill="#69ffff"/><ellipse cx="75.0" cy="678.7" rx="5.0" ry="4.0" transform="rotate(0 75.0 678.7)" fill="#69ffff"/><ellipse cx="97.7" cy="662.0" rx="4.0" ry="4.0" transform="rotate(0 97.7 662.0)" fill="#65ffff"/><ellipse cx="45.8" cy="695.0" rx="6.0" ry="3.5" transform="rotate(0 45.8 695.0)" fill="#63ffff"/><ellipse cx="59.0" cy="699.0" rx="3.0" ry="3.0" transform="rotate(0 59.0 699.0)" fill="#6affff"/><ellipse cx="28.5" cy="689.0" rx="3.0" ry="3.0" transform="rotate(0 28.5 689.0)" fill="#6affff"/><ellipse cx="41.0" cy="714.0" rx="20.0" ry="3.0" transform="rotate(0 41.0 714.0)" fill="#6affff"/><ellipse cx="38.7" cy="750.0" rx="5.0" ry="4.0" transform="rotate(0 38.7 750.0)" fill="#62ffff"/><ellipse cx="30.5" cy="743.8" rx="4.0" ry="4.0" transform="rotate(0 30.5 743.8)" fill="#6affff"/><ellipse cx="73.0" cy="750.0" rx="4.0" ry="11.0" transform="rotate(0 73.0 750.0)" fill="#65ffff"/><ellipse cx="97.7" cy="729.6" rx="4.0" ry="4.0" transform="rotate(0 97.7 729.6)" fill="#62ffff"/><ellipse cx="91.6" cy="719.4" rx="3.0" ry="3.0" transform="rotate(0 91.6 719.4)" fill="#6affff"/><ellipse cx="48.8" cy="762.0" rx="3.0" ry="3.0" transform="rotate(0 48.8 762.0)" fill="#63ffff"/><ellipse cx="93.6" cy="774.3" rx="4.0" ry="3.0" transform="rotate(0 93.6 774.3)" fill="#63ffff"/><ellipse cx="116.0" cy="770.0" rx="3.0" ry="3.0" transform="rotate(0 116.0 770.0)" fill="#6affff"/><ellipse cx="154.7" cy="745.8" rx="3.0" ry="3.0" transform="rotate(0 154.7 745.8)" fill="#6affff"/><ellipse cx="183.0" cy="760.0" rx="4.0" ry="3.0" transform="rotate(0 183.0 760.0)" fill="#6affff"/><ellipse cx="175.0" cy="695.0" rx="3.0" ry="3.0" transform="rotate(0 175.0 695.0)" fill="#6affff"/><ellipse cx="193.0" cy="676.6" rx="3.0" ry="3.0" transform="rotate(0 193.0 676.6)" fill="#6affff"/><ellipse cx="211.7" cy="709.0" rx="3.0" ry="3.0" transform="rotate(0 211.7 709.0)" fill="#6affff"/><ellipse cx="217.5" cy="481.0" rx="6.0" ry="3.0" transform="rotate(0 217.5 481.0)" fill="#78ffff"/></g>
</g></g>
<g fill="#8a2be2" shape-rendering="crispEdges"><rect x="300.4" y="132.5" width="13.9" height="14.5"/><rect x="314.3" y="188.5" width="13.9" height="14.0"/><rect x="314.3" y="202.0" width="41.7" height="110.7"/><rect x="328.2" y="312.5" width="41.6" height="125.4"/><rect x="342.1" y="452.2" width="41.6" height="41.8"/><rect x="342.1" y="493.5" width="13.8" height="13.8"/><rect x="342.1" y="535.5" width="41.6" height="27.5"/><rect x="342.1" y="562.6" width="55.6" height="28.6"/><rect x="356.0" y="591.0" width="41.7" height="69.7"/><rect x="356.0" y="674.0" width="41.7" height="27.3"/><rect x="356.0" y="716.0" width="55.8" height="13.8"/><rect x="369.9" y="743.0" width="41.9" height="27.4"/><rect x="369.9" y="770.0" width="27.8" height="15.0"/><rect x="369.9" y="799.2" width="13.8" height="13.8"/><rect x="369.9" y="812.7" width="27.8" height="14.6"/></g>
<rect x="27" y="35" width="53" height="407.5" fill="#000"/><rect x="56.5" y="77.5" width="18" height="353" fill="none" stroke="#fff" stroke-width="1"/><rect x="57" y="78" width="17" height="32" fill="#640000"/><rect x="57" y="110" width="17" height="32" fill="#ee0000"/><rect x="57" y="142" width="17" height="32" fill="#ff4500"/><rect x="57" y="174" width="17" height="32" fill="#ffa500"/><rect x="57" y="206" width="17" height="32" fill="#ffff00"/><rect x="57" y="238" width="17" height="32" fill="#7fff00"/><rect x="57" y="270" width="17" height="32" fill="#008000"/><rect x="57" y="302" width="17" height="32" fill="#00ffff"/><rect x="57" y="334" width="17" height="32" fill="#0080ff"/><rect x="57" y="366" width="17" height="32" fill="#0000ff"/><rect x="57" y="398" width="17" height="32" fill="#8a2be2"/><g font-family="Liberation Sans, sans-serif" font-size="11" fill="#ffa07a"><text x="11.9" y="71.8" textLength="53" lengthAdjust="spacingAndGlyphs">BBALB (%)</text><g text-anchor="end"><text transform="translate(50.6 82.0) scale(1.18 1)">100</text><text transform="translate(50.6 113.7) scale(1.18 1)">80</text><text transform="translate(50.6 145.7) scale(1.18 1)">70</text><text transform="translate(50.6 177.7) scale(1.18 1)">60</text><text transform="translate(50.6 209.7) scale(1.18 1)">50</text><text transform="translate(50.6 241.7) scale(1.18 1)">40</text><text transform="translate(50.6 273.7) scale(1.18 1)">30</text><text transform="translate(50.6 305.7) scale(1.18 1)">25</text><text transform="translate(50.6 337.7) scale(1.18 1)">20</text><text transform="translate(50.6 369.7) scale(1.18 1)">15</text><text transform="translate(50.6 401.7) scale(1.18 1)">10</text><text transform="translate(50.6 432.7) scale(1.18 1)">0</text></g></g>
<g fill="#00ffff" shape-rendering="crispEdges"><rect x="8" y="35" width="1" height="765"/><rect x="147" y="35" width="1" height="765"/><rect x="286" y="35" width="1" height="765"/><rect x="425" y="35" width="1" height="765"/><rect x="564" y="35" width="1" height="765"/><rect x="703" y="35" width="1" height="765"/><rect x="842" y="35" width="1" height="765"/><rect x="981" y="35" width="1" height="765"/><rect x="1120" y="35" width="1" height="765"/><rect x="8" y="91" width="1113" height="1"/><rect x="8" y="230" width="1113" height="1"/><rect x="8" y="368" width="1113" height="1"/><rect x="8" y="507" width="1113" height="1"/><rect x="8" y="646" width="1113" height="1"/><rect x="8" y="785" width="1113" height="1"/></g>
<g font-family="Liberation Mono, monospace" font-size="12.6" letter-spacing="0.44" fill="#ff0000"><rect x="968" y="84" width="22" height="11" fill="#000"/><rect x="971" y="223" width="28" height="11" fill="#000"/><rect x="971" y="361" width="28" height="11" fill="#000"/><rect x="968" y="500" width="34" height="11" fill="#000"/><rect x="968" y="639" width="34" height="11" fill="#000"/><text x="140.5" y="34.0">15W</text><text x="277.5" y="34.0">10W</text><text x="423.5" y="34.0">5W</text><text x="559.0" y="34.0">0</text><text x="703.5" y="34.0">5E</text><text x="835.3" y="34.0">10E</text><text x="976.5" y="34.0">15E</text><text x="975.5" y="94.0">0</text><text x="982.0" y="233.0">5S</text><text x="974.5" y="371.0">10S</text><text x="976.0" y="510.0">15S</text><text x="976.0" y="649.0">20S</text></g>
<path d="M841.5 3.7 L839.8 9.9 L838.3 23.5 L837.0 37.2 L832.8 44.6 L827.9 53.3 L824.2 58.7 L829.1 61.9 L833.6 62.0 L831.1 64.9 L831.6 73.1 L827.9 73.6 L823.7 75.1 L825.4 79.3 L831.6 83.5 L836.5 86.7 L840.3 85.0 L835.3 88.0 L829.1 87.2 L825.4 84.2 L823.7 88.0 L823.7 95.4 L821.7 102.8 L816.7 109.0 L813.0 111.0 L810.5 114.0 L811.8 121.4 L815.5 128.8 L821.2 137.5 L822.9 143.7 L827.9 151.1 L831.6 157.3 L837.8 164.8 L842.7 169.0 L850.2 173.4 L858.8 183.3 L866.3 190.0 L873.1 199.5 L881.2 204.9 L890.7 215.7 L894.7 225.2 L898.8 231.9 L904.2 242.8 L901.5 247.4 L906.9 255.0 L913.7 257.1 L924.0 254.4 L923.1 257.7 L913.7 260.9 L908.3 260.9 L906.1 262.5 L911.0 271.2 L920.4 283.4 L921.8 292.8 L927.2 303.7 L932.6 315.8 L936.7 324.0 L936.7 332.1 L931.3 336.1 L925.3 343.7 L929.9 349.7 L932.6 360.5 L936.7 370.0 L943.4 379.4 L947.5 387.6 L949.4 398.4 L947.7 416.2 L945.5 428.4 L938.8 437.9 L930.7 441.9 L923.9 447.4 L921.2 455.5 L912.5 463.6 L912.5 475.8 L909.0 479.8 L906.3 494.7 L902.8 508.3 L899.0 517.7 L897.4 525.8 L890.6 531.8 L892.8 546.1 L891.4 562.4 L890.1 584.0 L894.1 594.9 L899.5 605.7 L908.7 613.5 L916.8 627.1 L926.3 647.4 L932.5 656.8 L935.8 667.7 L941.2 678.5 L952.0 694.7 L965.5 711.0 L968.8 721.8 L965.5 732.6 L966.9 740.7 L967.7 751.6 L966.4 762.4 L971.0 773.2 L975.8 780.0 L977.7 786.7 L976.4 793.5 L977.2 799.7" fill="none" stroke="#fff" stroke-width="1" shape-rendering="crispEdges"/>
<ellipse cx="748.6" cy="84.2" rx="3" ry="4.6" transform="rotate(25 748.6 84.2)" fill="none" stroke="#fff" stroke-width="1" shape-rendering="crispEdges"/>
<text x="9.6" y="27" font-family="Liberation Sans, sans-serif" font-size="11" fill="#ffa500" textLength="108" lengthAdjust="spacingAndGlyphs">NASA Langley (M04.0)</text>
<text x="384" y="15.6" font-family="Liberation Sans, sans-serif" font-size="16" fill="#fff" textLength="176.5" lengthAdjust="spacingAndGlyphs">BROADBAND ALBEDO</text>
<text x="371" y="33.6" font-family="Liberation Sans, sans-serif" font-size="14.7" fill="#fff" textLength="151.5" lengthAdjust="spacingAndGlyphs">Oct 03, 2017 18:15 UTC</text>
<text x="314.5" y="846.4" font-family="Liberation Mono, monospace" font-size="11" fill="#fff" textLength="503" lengthAdjust="spacingAndGlyphs" xml:space="preserve">MT10  BROADBAND ALBEDO   OCT 03, 2017 18:15Z   NASA LARC</text>
</svg>
</body></html>
